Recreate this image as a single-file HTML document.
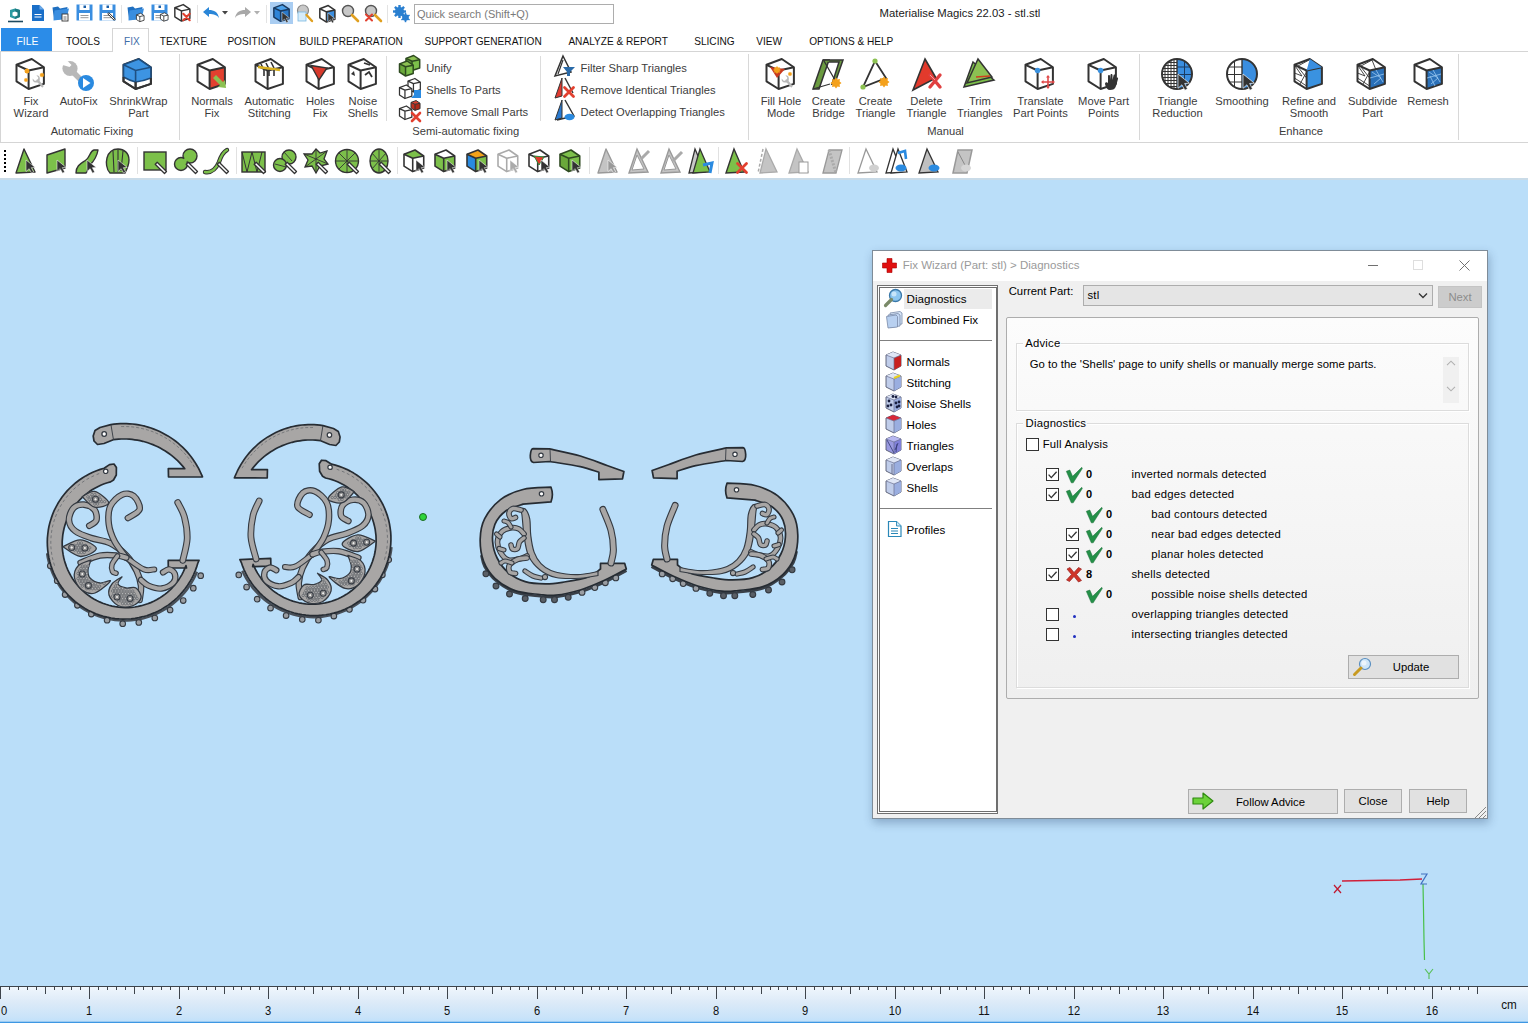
<!DOCTYPE html><html><head><meta charset="utf-8"><style>
html,body{margin:0;padding:0;}
body{width:1528px;height:1023px;position:relative;overflow:hidden;background:#fff;font-family:"Liberation Sans",sans-serif;}
.t{position:absolute;white-space:nowrap;}
.r{position:absolute;box-sizing:border-box;}
svg.r{overflow:visible;}
</style></head><body>
<div class="r" style="left:0px;top:179px;width:1528px;height:808px;background:#badef9;"></div>
<div class="r" style="left:0px;top:178px;width:1528px;height:2px;background:#c9dbe8;"></div>
<div class="r" style="left:0px;top:986px;width:1528px;height:37px;background:linear-gradient(#f1f7fd,#dceaf8 45%,#c9e3f9 85%,#bde0fb);"></div>
<div class="r" style="left:0px;top:986px;width:1528px;height:1px;background:#3e444c;"></div>
<div class="r" style="left:0px;top:1021px;width:1528px;height:1px;background:#9ccbf2;"></div>
<div class="r" style="left:0px;top:1022px;width:1528px;height:1px;background:#3d97e3;"></div>
<div class="t" style="top:6.28px;font-size:11.3px;line-height:15px;color:#1a1a1a;left:879.6px;">Materialise Magics 22.03 - stl.stl</div>
<div class="r" style="left:414px;top:4px;width:200px;height:20px;border:1px solid #adadad;background:#fff;"></div>
<div class="t" style="top:6.69px;font-size:11px;line-height:14px;color:#7a7a7a;left:417px;">Quick search (Shift+Q)</div>
<div class="r" style="left:121px;top:5px;width:1px;height:18px;background:#e3e3e3;"></div>
<div class="r" style="left:197px;top:5px;width:1px;height:18px;background:#e3e3e3;"></div>
<div class="r" style="left:266px;top:5px;width:1px;height:18px;background:#e3e3e3;"></div>
<div class="r" style="left:387px;top:5px;width:1px;height:18px;background:#e3e3e3;"></div>
<div class="r" style="left:270px;top:2px;width:23px;height:22px;background:#a9cdf2;"></div>
<div class="r" style="left:1px;top:28px;width:51px;height:23px;background:#2b8ce8;"></div>
<div class="t" style="top:34.83px;font-size:10.3px;line-height:13px;color:#fff;left:16.5px;">FILE</div>
<div class="t" style="top:34.90px;font-size:10.1px;line-height:13px;color:#111;left:65.9px;">TOOLS</div>
<div class="t" style="top:34.90px;font-size:10.1px;line-height:13px;color:#111;left:159.8px;">TEXTURE</div>
<div class="t" style="top:34.90px;font-size:10.1px;line-height:13px;color:#111;left:227.4px;">POSITION</div>
<div class="t" style="top:34.90px;font-size:10.1px;line-height:13px;color:#111;left:299.4px;">BUILD PREPARATION</div>
<div class="t" style="top:34.90px;font-size:10.1px;line-height:13px;color:#111;left:424.5px;">SUPPORT GENERATION</div>
<div class="t" style="top:34.90px;font-size:10.1px;line-height:13px;color:#111;left:568.4px;">ANALYZE & REPORT</div>
<div class="t" style="top:34.90px;font-size:10.1px;line-height:13px;color:#111;left:694.2px;">SLICING</div>
<div class="t" style="top:34.90px;font-size:10.1px;line-height:13px;color:#111;left:756.2px;">VIEW</div>
<div class="t" style="top:34.90px;font-size:10.1px;line-height:13px;color:#111;left:809.2px;">OPTIONS & HELP</div>
<div class="r" style="left:0px;top:51px;width:1528px;height:92px;border-top:1px solid #d5d5d5;border-bottom:1px solid #d5d5d5;background:#fff;"></div>
<div class="r" style="left:0px;top:51px;width:1px;height:92px;background:#d5d5d5;"></div>
<div class="r" style="left:112px;top:28px;width:37px;height:24px;border:1px solid #d5d5d5;border-bottom:none;background:#fff;"></div>
<div class="t" style="top:34.90px;font-size:10.1px;line-height:13px;color:#3f6ea8;left:124px;">FIX</div>
<div class="r" style="left:179px;top:54px;width:1px;height:86px;background:#d8d8d8;"></div>
<div class="r" style="left:748px;top:54px;width:1px;height:86px;background:#d8d8d8;"></div>
<div class="r" style="left:1139px;top:54px;width:1px;height:86px;background:#d8d8d8;"></div>
<div class="r" style="left:1458px;top:54px;width:1px;height:86px;background:#d8d8d8;"></div>
<div class="r" style="left:386px;top:56px;width:1px;height:65px;background:#dcdcdc;"></div>
<div class="r" style="left:540px;top:56px;width:1px;height:65px;background:#dcdcdc;"></div>
<div class="t" style="top:93.62px;font-size:11.2px;line-height:15px;color:#3c3c3c;left:-119px;width:300px;text-align:center;">Fix</div>
<div class="t" style="top:106.42px;font-size:11.2px;line-height:15px;color:#3c3c3c;left:-119px;width:300px;text-align:center;">Wizard</div>
<div class="t" style="top:93.62px;font-size:11.2px;line-height:15px;color:#3c3c3c;left:-71.4px;width:300px;text-align:center;">AutoFix</div>
<div class="t" style="top:93.62px;font-size:11.2px;line-height:15px;color:#3c3c3c;left:-11.599999999999994px;width:300px;text-align:center;">ShrinkWrap</div>
<div class="t" style="top:106.42px;font-size:11.2px;line-height:15px;color:#3c3c3c;left:-11.599999999999994px;width:300px;text-align:center;">Part</div>
<div class="t" style="top:93.62px;font-size:11.2px;line-height:15px;color:#3c3c3c;left:62px;width:300px;text-align:center;">Normals</div>
<div class="t" style="top:106.42px;font-size:11.2px;line-height:15px;color:#3c3c3c;left:62px;width:300px;text-align:center;">Fix</div>
<div class="t" style="top:93.62px;font-size:11.2px;line-height:15px;color:#3c3c3c;left:119.30000000000001px;width:300px;text-align:center;">Automatic</div>
<div class="t" style="top:106.42px;font-size:11.2px;line-height:15px;color:#3c3c3c;left:119.30000000000001px;width:300px;text-align:center;">Stitching</div>
<div class="t" style="top:93.62px;font-size:11.2px;line-height:15px;color:#3c3c3c;left:170.2px;width:300px;text-align:center;">Holes</div>
<div class="t" style="top:106.42px;font-size:11.2px;line-height:15px;color:#3c3c3c;left:170.2px;width:300px;text-align:center;">Fix</div>
<div class="t" style="top:93.62px;font-size:11.2px;line-height:15px;color:#3c3c3c;left:212.89999999999998px;width:300px;text-align:center;">Noise</div>
<div class="t" style="top:106.42px;font-size:11.2px;line-height:15px;color:#3c3c3c;left:212.89999999999998px;width:300px;text-align:center;">Shells</div>
<div class="t" style="top:93.62px;font-size:11.2px;line-height:15px;color:#3c3c3c;left:631px;width:300px;text-align:center;">Fill Hole</div>
<div class="t" style="top:106.42px;font-size:11.2px;line-height:15px;color:#3c3c3c;left:631px;width:300px;text-align:center;">Mode</div>
<div class="t" style="top:93.62px;font-size:11.2px;line-height:15px;color:#3c3c3c;left:678.5px;width:300px;text-align:center;">Create</div>
<div class="t" style="top:106.42px;font-size:11.2px;line-height:15px;color:#3c3c3c;left:678.5px;width:300px;text-align:center;">Bridge</div>
<div class="t" style="top:93.62px;font-size:11.2px;line-height:15px;color:#3c3c3c;left:725.5px;width:300px;text-align:center;">Create</div>
<div class="t" style="top:106.42px;font-size:11.2px;line-height:15px;color:#3c3c3c;left:725.5px;width:300px;text-align:center;">Triangle</div>
<div class="t" style="top:93.62px;font-size:11.2px;line-height:15px;color:#3c3c3c;left:776.5px;width:300px;text-align:center;">Delete</div>
<div class="t" style="top:106.42px;font-size:11.2px;line-height:15px;color:#3c3c3c;left:776.5px;width:300px;text-align:center;">Triangle</div>
<div class="t" style="top:93.62px;font-size:11.2px;line-height:15px;color:#3c3c3c;left:829.9px;width:300px;text-align:center;">Trim</div>
<div class="t" style="top:106.42px;font-size:11.2px;line-height:15px;color:#3c3c3c;left:829.9px;width:300px;text-align:center;">Triangles</div>
<div class="t" style="top:93.62px;font-size:11.2px;line-height:15px;color:#3c3c3c;left:890.4000000000001px;width:300px;text-align:center;">Translate</div>
<div class="t" style="top:106.42px;font-size:11.2px;line-height:15px;color:#3c3c3c;left:890.4000000000001px;width:300px;text-align:center;">Part Points</div>
<div class="t" style="top:93.62px;font-size:11.2px;line-height:15px;color:#3c3c3c;left:953.5999999999999px;width:300px;text-align:center;">Move Part</div>
<div class="t" style="top:106.42px;font-size:11.2px;line-height:15px;color:#3c3c3c;left:953.5999999999999px;width:300px;text-align:center;">Points</div>
<div class="t" style="top:93.62px;font-size:11.2px;line-height:15px;color:#3c3c3c;left:1027.5px;width:300px;text-align:center;">Triangle</div>
<div class="t" style="top:106.42px;font-size:11.2px;line-height:15px;color:#3c3c3c;left:1027.5px;width:300px;text-align:center;">Reduction</div>
<div class="t" style="top:93.62px;font-size:11.2px;line-height:15px;color:#3c3c3c;left:1092px;width:300px;text-align:center;">Smoothing</div>
<div class="t" style="top:93.62px;font-size:11.2px;line-height:15px;color:#3c3c3c;left:1159px;width:300px;text-align:center;">Refine and</div>
<div class="t" style="top:106.42px;font-size:11.2px;line-height:15px;color:#3c3c3c;left:1159px;width:300px;text-align:center;">Smooth</div>
<div class="t" style="top:93.62px;font-size:11.2px;line-height:15px;color:#3c3c3c;left:1222.6px;width:300px;text-align:center;">Subdivide</div>
<div class="t" style="top:106.42px;font-size:11.2px;line-height:15px;color:#3c3c3c;left:1222.6px;width:300px;text-align:center;">Part</div>
<div class="t" style="top:93.62px;font-size:11.2px;line-height:15px;color:#3c3c3c;left:1278px;width:300px;text-align:center;">Remesh</div>
<div class="t" style="top:123.62px;font-size:11.2px;line-height:15px;color:#3c3c3c;left:-58px;width:300px;text-align:center;">Automatic Fixing</div>
<div class="t" style="top:123.62px;font-size:11.2px;line-height:15px;color:#3c3c3c;left:315.7px;width:300px;text-align:center;">Semi-automatic fixing</div>
<div class="t" style="top:123.62px;font-size:11.2px;line-height:15px;color:#3c3c3c;left:795.5px;width:300px;text-align:center;">Manual</div>
<div class="t" style="top:123.62px;font-size:11.2px;line-height:15px;color:#3c3c3c;left:1151px;width:300px;text-align:center;">Enhance</div>
<div class="t" style="top:60.62px;font-size:11.2px;line-height:15px;color:#3c3c3c;left:426.2px;">Unify</div>
<div class="t" style="top:82.62px;font-size:11.2px;line-height:15px;color:#3c3c3c;left:426.2px;">Shells To Parts</div>
<div class="t" style="top:104.62px;font-size:11.2px;line-height:15px;color:#3c3c3c;left:426.2px;">Remove Small Parts</div>
<div class="t" style="top:60.62px;font-size:11.2px;line-height:15px;color:#3c3c3c;left:580.6px;">Filter Sharp Triangles</div>
<div class="t" style="top:82.62px;font-size:11.2px;line-height:15px;color:#3c3c3c;left:580.6px;">Remove Identical Triangles</div>
<div class="t" style="top:104.62px;font-size:11.2px;line-height:15px;color:#3c3c3c;left:580.6px;">Detect Overlapping Triangles</div>
<div class="r" style="left:4px;top:150px;width:2px;height:24px;background:repeating-linear-gradient(#000 0 2px,transparent 2px 4px);"></div>
<div class="r" style="left:137px;top:147px;width:1px;height:27px;background:#e1e1e1;"></div>
<div class="r" style="left:236px;top:147px;width:1px;height:27px;background:#e1e1e1;"></div>
<div class="r" style="left:397px;top:147px;width:1px;height:27px;background:#e1e1e1;"></div>
<div class="r" style="left:589px;top:147px;width:1px;height:27px;background:#e1e1e1;"></div>
<div class="r" style="left:718px;top:147px;width:1px;height:27px;background:#e1e1e1;"></div>
<div class="r" style="left:849px;top:147px;width:1px;height:27px;background:#e1e1e1;"></div>
<svg class="r" style="left:7px;top:8px" width="17" height="16" viewBox="0 0 17 16"><path d="M3 2L8 0.5L13 2L13 9L8 11L3 9Z" fill="#2b9aa0"/><path d="M8 0.5L13 2L13 9L8 11Z" fill="#1e7a80"/><path d="M5.5 4.5L8 3.5L10.5 4.5L10.5 7.5L8 8.5L5.5 7.5Z" fill="#fff"/><path d="M1 13.5L16 13.5" stroke="#1e4a60" stroke-width="1.6"/></svg>
<svg class="r" style="left:31px;top:4px" width="14" height="18" viewBox="0 0 14 18"><path d="M1 1H8.5L13 5.5V17H1Z" fill="#1a6fc8"/><path d="M8.5 1V5.5H13" fill="#6aa8e8"/><path d="M3.5 10.5H10.5M3.5 13H10.5" stroke="#fff" stroke-width="1.1"/></svg>
<svg class="r" style="left:52px;top:4px" width="18" height="18" viewBox="0 0 18 18"><path d="M0.5 3.5L6 2.5L8 4.5L15.5 3L14 14.5L2 16Z" fill="#1f6fc0"/><path d="M2.5 6.5L17 4.5L14.5 15L1.5 16.5Z" fill="#3a8ee0"/><rect x="10" y="10" width="6" height="7" fill="#fff" stroke="#333" stroke-width="0.9"/><path d="M11.5 13H14.5M11.5 15H14.5" stroke="#333" stroke-width="0.7"/></svg>
<svg class="r" style="left:76px;top:4px" width="17" height="17" viewBox="0 0 17 17"><path d="M0.5 0.5H16.5V16.5H0.5Z" fill="#3a8ee0"/><rect x="3.5" y="0.5" width="10" height="5.5" fill="#fff"/><rect x="7.5" y="1.5" width="2.5" height="2.5" fill="#1a5fa8"/><rect x="3" y="9" width="11" height="7.5" fill="#fff"/><path d="M4.5 11.5H12.5M4.5 13.7H12.5" stroke="#999" stroke-width="1"/></svg>
<svg class="r" style="left:99px;top:4px" width="17" height="17" viewBox="0 0 17 17"><path d="M0.5 0.5H16.5V16.5H0.5Z" fill="#3a8ee0"/><rect x="3.5" y="0.5" width="10" height="5.5" fill="#fff"/><rect x="7.5" y="1.5" width="2.5" height="2.5" fill="#1a5fa8"/><rect x="3" y="9" width="11" height="7.5" fill="#fff"/><path d="M4.5 11.5H12.5M4.5 13.7H12.5" stroke="#999" stroke-width="1"/><path d="M9 9L16 16" stroke="#333" stroke-width="2.2"/><path d="M9.5 9.5L15.5 15.5" stroke="#fff" stroke-width="1"/></svg>
<svg class="r" style="left:127px;top:4px" width="18" height="18" viewBox="0 0 18 18"><path d="M0.5 3.5L6 2.5L8 4.5L15.5 3L14 14.5L2 16Z" fill="#1f6fc0"/><path d="M2.5 6.5L17 4.5L14.5 15L1.5 16.5Z" fill="#3a8ee0"/><g transform="translate(9,9) scale(0.28)"><polygon points="16.8,1.0 28.9,9.3 13.6,12.5 1.5,6.8" fill="#fff"/><polygon points="1.5,6.8 13.6,12.5 13.6,31.0 1.5,23.3" fill="#fff"/><polygon points="13.6,12.5 28.9,9.3 28.9,25.9 13.6,31.0" fill="#fff"/><polygon points="16.8,1.0 28.9,9.3 28.9,25.9 13.6,31.0 1.5,23.3 1.5,6.8" fill="none" stroke="#333333" stroke-width="3" stroke-linejoin="round"/><polyline points="1.5,6.8 13.6,12.5 28.9,9.3" fill="none" stroke="#333333" stroke-width="3" stroke-linejoin="round"/><polyline points="13.6,12.5 13.6,31.0" fill="none" stroke="#333333" stroke-width="3"/></g></svg>
<svg class="r" style="left:151px;top:4px" width="17" height="17" viewBox="0 0 17 17"><path d="M0.5 0.5H16.5V16.5H0.5Z" fill="#3a8ee0"/><rect x="3.5" y="0.5" width="10" height="5.5" fill="#fff"/><rect x="7.5" y="1.5" width="2.5" height="2.5" fill="#1a5fa8"/><rect x="3" y="9" width="11" height="7.5" fill="#fff"/><path d="M4.5 11.5H12.5M4.5 13.7H12.5" stroke="#999" stroke-width="1"/><g transform="translate(9,8.5) scale(0.28)"><polygon points="16.8,1.0 28.9,9.3 13.6,12.5 1.5,6.8" fill="#fff"/><polygon points="1.5,6.8 13.6,12.5 13.6,31.0 1.5,23.3" fill="#fff"/><polygon points="13.6,12.5 28.9,9.3 28.9,25.9 13.6,31.0" fill="#fff"/><polygon points="16.8,1.0 28.9,9.3 28.9,25.9 13.6,31.0 1.5,23.3 1.5,6.8" fill="none" stroke="#333333" stroke-width="3" stroke-linejoin="round"/><polyline points="1.5,6.8 13.6,12.5 28.9,9.3" fill="none" stroke="#333333" stroke-width="3" stroke-linejoin="round"/><polyline points="13.6,12.5 13.6,31.0" fill="none" stroke="#333333" stroke-width="3"/></g></svg>
<svg class="r" style="left:174px;top:4px" width="18" height="18" viewBox="0 0 18 18"><g transform="scale(0.55)"><polygon points="16.8,1.0 28.9,9.3 13.6,12.5 1.5,6.8" fill="#fff"/><polygon points="1.5,6.8 13.6,12.5 13.6,31.0 1.5,23.3" fill="#fff"/><polygon points="13.6,12.5 28.9,9.3 28.9,25.9 13.6,31.0" fill="#fff"/><polygon points="16.8,1.0 28.9,9.3 28.9,25.9 13.6,31.0 1.5,23.3 1.5,6.8" fill="none" stroke="#333333" stroke-width="2.6" stroke-linejoin="round"/><polyline points="1.5,6.8 13.6,12.5 28.9,9.3" fill="none" stroke="#333333" stroke-width="2.6" stroke-linejoin="round"/><polyline points="13.6,12.5 13.6,31.0" fill="none" stroke="#333333" stroke-width="2.6"/></g><path d="M9.3 9.8L15.7 16.2M15.7 9.8L9.3 16.2" stroke="#e2402f" stroke-width="2.1" stroke-linecap="round"/></svg>
<svg class="r" style="left:202px;top:6px" width="18" height="14" viewBox="0 0 18 14"><path d="M1 6L7 1V4C12 4 16 6 17 12C15 9 12 8 7 8V11Z" fill="#2a86d8"/></svg>
<svg class="r" style="left:222px;top:11px" width="7" height="4" viewBox="0 0 7 4"><path d="M0 0H6L3 3.5Z" fill="#444"/></svg>
<svg class="r" style="left:234px;top:6px" width="18" height="14" viewBox="0 0 18 14"><path d="M17 6L11 1V4C6 4 2 6 1 12C3 9 6 8 11 8V11Z" fill="#a8a8a8"/></svg>
<svg class="r" style="left:254px;top:11px" width="7" height="4" viewBox="0 0 7 4"><path d="M0 0H6L3 3.5Z" fill="#b0b0b0"/></svg>
<svg class="r" style="left:273px;top:4px" width="19" height="19" viewBox="0 0 19 19"><g transform="scale(0.56)"><polygon points="16.8,1.0 28.9,9.3 13.6,12.5 1.5,6.8" fill="#4aa0ea"/><polygon points="1.5,6.8 13.6,12.5 13.6,31.0 1.5,23.3" fill="#2f85d8"/><polygon points="13.6,12.5 28.9,9.3 28.9,25.9 13.6,31.0" fill="#2a78c8"/><polygon points="16.8,1.0 28.9,9.3 28.9,25.9 13.6,31.0 1.5,23.3 1.5,6.8" fill="none" stroke="#1a3a60" stroke-width="2.6" stroke-linejoin="round"/><polyline points="1.5,6.8 13.6,12.5 28.9,9.3" fill="none" stroke="#1a3a60" stroke-width="2.6" stroke-linejoin="round"/><polyline points="13.6,12.5 13.6,31.0" fill="none" stroke="#1a3a60" stroke-width="2.6"/></g><path transform="translate(9,8) scale(0.85)" d="M0 0L0 11L3 8.3L5.3 12.5L7.3 11.4L5.1 7.3L8.8 7.1Z" fill="#333333" stroke="#fff" stroke-width="0.5"/></svg>
<svg class="r" style="left:296px;top:4px" width="18" height="20" viewBox="0 0 18 20"><circle cx="7" cy="6.5" r="5.5" fill="#c8c8c8" stroke="#888" stroke-width="1.2"/><rect x="2" y="8" width="8" height="9" fill="#d6ecfa" stroke="#7ab8e0" stroke-width="0.8"/><path d="M10.5 11L16 17" stroke="#e0a020" stroke-width="2.4" stroke-linecap="round"/></svg>
<svg class="r" style="left:319px;top:5px" width="18" height="18" viewBox="0 0 18 18"><g transform="scale(0.55)"><polygon points="16.8,1.0 28.9,9.3 13.6,12.5 1.5,6.8" fill="#fff"/><polygon points="1.5,6.8 13.6,12.5 13.6,31.0 1.5,23.3" fill="#fff"/><polygon points="13.6,12.5 28.9,9.3 28.9,25.9 13.6,31.0" fill="#3a8ee0"/><polygon points="16.8,1.0 28.9,9.3 28.9,25.9 13.6,31.0 1.5,23.3 1.5,6.8" fill="none" stroke="#333333" stroke-width="2.8" stroke-linejoin="round"/><polyline points="1.5,6.8 13.6,12.5 28.9,9.3" fill="none" stroke="#333333" stroke-width="2.8" stroke-linejoin="round"/><polyline points="13.6,12.5 13.6,31.0" fill="none" stroke="#333333" stroke-width="2.8"/></g><path transform="translate(9,8) scale(0.8)" d="M0 0L0 11L3 8.3L5.3 12.5L7.3 11.4L5.1 7.3L8.8 7.1Z" fill="#333333" stroke="#fff" stroke-width="0.5"/></svg>
<svg class="r" style="left:341px;top:4px" width="18" height="18" viewBox="0 0 18 18"><circle cx="7" cy="7" r="5.5" fill="#c8c8c8" stroke="#555" stroke-width="1.4"/><path d="M11 11L17 17" stroke="#e0a020" stroke-width="2.6" stroke-linecap="round"/></svg>
<svg class="r" style="left:364px;top:4px" width="18" height="18" viewBox="0 0 18 18"><circle cx="7" cy="7" r="5.5" fill="#c8c8c8" stroke="#555" stroke-width="1.4"/><path d="M11 11L17 17" stroke="#e0a020" stroke-width="2.6" stroke-linecap="round"/><path d="M2 10.5L8 16.5M8 10.5L2 16.5" stroke="#e2402f" stroke-width="2" stroke-linecap="round"/></svg>
<svg class="r" style="left:393px;top:5px" width="18" height="18" viewBox="0 0 18 18"><g fill="#2a7fd0"><circle cx="6.5" cy="6.5" r="4.6"/><circle cx="12.5" cy="12.5" r="3.3"/></g><circle cx="6.5" cy="6.5" r="1.8" fill="#fff"/><circle cx="12.5" cy="12.5" r="1.2" fill="#fff"/><rect x="5.3" y="0" width="2.4" height="13" fill="#2a7fd0" transform="rotate(0 6.5 6.5)"/><rect x="5.3" y="0" width="2.4" height="13" fill="#2a7fd0" transform="rotate(45 6.5 6.5)"/><rect x="5.3" y="0" width="2.4" height="13" fill="#2a7fd0" transform="rotate(90 6.5 6.5)"/><rect x="5.3" y="0" width="2.4" height="13" fill="#2a7fd0" transform="rotate(135 6.5 6.5)"/><rect x="11.7" y="7.8" width="1.6" height="9.4" fill="#2a7fd0" transform="rotate(0 12.5 12.5)"/><rect x="11.7" y="7.8" width="1.6" height="9.4" fill="#2a7fd0" transform="rotate(60 12.5 12.5)"/><rect x="11.7" y="7.8" width="1.6" height="9.4" fill="#2a7fd0" transform="rotate(120 12.5 12.5)"/></svg>
<svg class="r" style="left:15px;top:58px" width="34" height="34" viewBox="0 0 34 34"><polygon points="16.8,1.0 28.9,9.3 13.6,12.5 1.5,6.8" fill="#fff"/><polygon points="1.5,6.8 13.6,12.5 13.6,31.0 1.5,23.3" fill="#fff"/><polygon points="13.6,12.5 28.9,9.3 28.9,25.9 13.6,31.0" fill="#fff"/><polygon points="16.8,1.0 28.9,9.3 28.9,25.9 13.6,31.0 1.5,23.3 1.5,6.8" fill="none" stroke="#333333" stroke-width="2.0" stroke-linejoin="round"/><polyline points="1.5,6.8 13.6,12.5 28.9,9.3" fill="none" stroke="#333333" stroke-width="2.0" stroke-linejoin="round"/><polyline points="13.6,12.5 13.6,31.0" fill="none" stroke="#333333" stroke-width="2.0"/><polygon points="15.0,13.0 13.9,13.8 14.1,15.1 12.8,14.9 12.0,16.0 11.2,14.9 9.9,15.1 10.1,13.8 9.0,13.0 10.1,12.2 9.9,10.9 11.2,11.1 12.0,10.0 12.8,11.1 14.1,10.9 13.9,12.2" fill="#f4a11c"/><polygon points="29.5,17.0 28.6,17.7 28.8,18.8 27.7,18.6 27.0,19.5 26.3,18.6 25.2,18.8 25.4,17.7 24.5,17.0 25.4,16.3 25.2,15.2 26.3,15.4 27.0,14.5 27.7,15.4 28.8,15.2 28.6,16.3" fill="#f4a11c"/><polygon points="13.3,22.0 12.5,22.6 12.6,23.6 11.6,23.5 11.0,24.3 10.4,23.5 9.4,23.6 9.5,22.6 8.7,22.0 9.5,21.4 9.4,20.4 10.4,20.5 11.0,19.7 11.6,20.5 12.6,20.4 12.5,21.4" fill="#f4a11c"/><g transform="translate(23,23) rotate(-40) scale(0.6)"><path d="M-4 -9 A6 6 0 1 0 4 -9 L4 -4 L1.5 -2 L-1.5 -2 L-4 -4Z" fill="#b8b8b8"/><rect x="-2" y="-3" width="4" height="16" rx="1.5" fill="#b8b8b8"/></g></svg>
<svg class="r" style="left:60px;top:58px" width="34" height="34" viewBox="0 0 34 34"><path d="M11 12L21 22" stroke="#b8b8b8" stroke-width="5.5"/><circle cx="10" cy="10.5" r="7.6" fill="#b8b8b8"/><path d="M1 6.5L6 1.5L11.5 7L9.5 9Z" fill="#fff" transform="rotate(0)"/><circle cx="26" cy="25" r="8" fill="#2a8ae0"/><path d="M23 20L30.5 25L23 30Z" fill="#fff"/></svg>
<svg class="r" style="left:122px;top:58px" width="34" height="34" viewBox="0 0 34 34"><polygon points="16.8,1.0 28.9,9.3 13.6,12.5 1.5,6.8" fill="#fff"/><polygon points="1.5,6.8 13.6,12.5 13.6,31.0 1.5,23.3" fill="#fff"/><polygon points="13.6,12.5 28.9,9.3 28.9,25.9 13.6,31.0" fill="#fff"/><polygon points="16.8,1.0 28.9,9.3 28.9,25.9 13.6,31.0 1.5,23.3 1.5,6.8" fill="none" stroke="#333333" stroke-width="2.0" stroke-linejoin="round"/><polyline points="1.5,6.8 13.6,12.5 28.9,9.3" fill="none" stroke="#333333" stroke-width="2.0" stroke-linejoin="round"/><polyline points="13.6,12.5 13.6,31.0" fill="none" stroke="#333333" stroke-width="2.0"/><path d="M1.5 6.8L16.8 1L28.9 9.3L28.9 20C24 22 18 23.5 13.6 24C9 23 5 21 1.5 19Z" fill="#3d94e2" stroke="#1f4f80" stroke-width="1.6" stroke-linejoin="round"/><path d="M1.5 6.8L13.6 12.5L28.9 9.3M13.6 12.5V24" fill="none" stroke="#1f4f80" stroke-width="1.6"/><path d="M1.5 19V23.3L13.6 31L28.9 25.9V20" fill="none" stroke="#333" stroke-width="2"/><path d="M13.6 24V31" stroke="#333" stroke-width="2"/></svg>
<svg class="r" style="left:196px;top:58px" width="34" height="34" viewBox="0 0 34 34"><polygon points="16.8,1.0 28.9,9.3 13.6,12.5 1.5,6.8" fill="#fff"/><polygon points="1.5,6.8 13.6,12.5 13.6,31.0 1.5,23.3" fill="#fff"/><polygon points="13.6,12.5 28.9,9.3 28.9,25.9 13.6,31.0" fill="#e2402f"/><polygon points="16.8,1.0 28.9,9.3 28.9,25.9 13.6,31.0 1.5,23.3 1.5,6.8" fill="none" stroke="#333333" stroke-width="2.0" stroke-linejoin="round"/><polyline points="1.5,6.8 13.6,12.5 28.9,9.3" fill="none" stroke="#333333" stroke-width="2.0" stroke-linejoin="round"/><polyline points="13.6,12.5 13.6,31.0" fill="none" stroke="#333333" stroke-width="2.0"/><path d="M17 20L24 27L22 29L30 30L29 22L27 24L20 17Z" fill="#8cc152"/></svg>
<svg class="r" style="left:254px;top:58px" width="34" height="34" viewBox="0 0 34 34"><polygon points="16.8,1.0 28.9,9.3 13.6,12.5 1.5,6.8" fill="#fff"/><polygon points="1.5,6.8 13.6,12.5 13.6,31.0 1.5,23.3" fill="#fff"/><polygon points="13.6,12.5 28.9,9.3 28.9,25.9 13.6,31.0" fill="#fff"/><polygon points="16.8,1.0 28.9,9.3 28.9,25.9 13.6,31.0 1.5,23.3 1.5,6.8" fill="none" stroke="#333333" stroke-width="2.0" stroke-linejoin="round"/><polyline points="1.5,6.8 13.6,12.5 28.9,9.3" fill="none" stroke="#333333" stroke-width="2.0" stroke-linejoin="round"/><polyline points="13.6,12.5 13.6,31.0" fill="none" stroke="#333333" stroke-width="2.0"/><path d="M7 6L10 12M12 5L15 11M17 4L20 10" stroke="#333" stroke-width="1.6"/><path d="M4 9L26 12" stroke="#d8b020" stroke-width="2.5"/><path d="M10 12V18M15 12V18M20 12V18" stroke="#333" stroke-width="1.6"/></svg>
<svg class="r" style="left:305px;top:58px" width="34" height="34" viewBox="0 0 34 34"><polygon points="16.8,1.0 28.9,9.3 13.6,12.5 1.5,6.8" fill="#fff"/><polygon points="1.5,6.8 13.6,12.5 13.6,31.0 1.5,23.3" fill="#fff"/><polygon points="13.6,12.5 28.9,9.3 28.9,25.9 13.6,31.0" fill="#fff"/><polygon points="16.8,1.0 28.9,9.3 28.9,25.9 13.6,31.0 1.5,23.3 1.5,6.8" fill="none" stroke="#333333" stroke-width="2.0" stroke-linejoin="round"/><polyline points="1.5,6.8 13.6,12.5 28.9,9.3" fill="none" stroke="#333333" stroke-width="2.0" stroke-linejoin="round"/><polyline points="13.6,12.5 13.6,31.0" fill="none" stroke="#333333" stroke-width="2.0"/><path d="M6 7.5L22 10L14 22Z" fill="#d83a2c" stroke="#333" stroke-width="1.4"/></svg>
<svg class="r" style="left:347px;top:58px" width="34" height="34" viewBox="0 0 34 34"><polygon points="16.8,1.0 28.9,9.3 13.6,12.5 1.5,6.8" fill="#fff"/><polygon points="1.5,6.8 13.6,12.5 13.6,31.0 1.5,23.3" fill="#fff"/><polygon points="13.6,12.5 28.9,9.3 28.9,25.9 13.6,31.0" fill="#fff"/><polygon points="16.8,1.0 28.9,9.3 28.9,25.9 13.6,31.0 1.5,23.3 1.5,6.8" fill="none" stroke="#333333" stroke-width="2.0" stroke-linejoin="round"/><polyline points="1.5,6.8 13.6,12.5 28.9,9.3" fill="none" stroke="#333333" stroke-width="2.0" stroke-linejoin="round"/><polyline points="13.6,12.5 13.6,31.0" fill="none" stroke="#333333" stroke-width="2.0"/><path d="M17 5L23 7" stroke="#333" stroke-width="1.8"/><path d="M4 16L7 13L8 18Z" fill="#333"/><path d="M18 17L22 14L25 19" stroke="#333" stroke-width="1.8" fill="none"/></svg>
<svg class="r" style="left:765px;top:58px" width="34" height="34" viewBox="0 0 34 34"><polygon points="16.8,1.0 28.9,9.3 13.6,12.5 1.5,6.8" fill="#fff"/><polygon points="1.5,6.8 13.6,12.5 13.6,31.0 1.5,23.3" fill="#fff"/><polygon points="13.6,12.5 28.9,9.3 28.9,25.9 13.6,31.0" fill="#fff"/><polygon points="16.8,1.0 28.9,9.3 28.9,25.9 13.6,31.0 1.5,23.3 1.5,6.8" fill="none" stroke="#333333" stroke-width="2.0" stroke-linejoin="round"/><polyline points="1.5,6.8 13.6,12.5 28.9,9.3" fill="none" stroke="#333333" stroke-width="2.0" stroke-linejoin="round"/><polyline points="13.6,12.5 13.6,31.0" fill="none" stroke="#333333" stroke-width="2.0"/><path d="M5 9L20 11L12 20Z" fill="#c83a20"/><polygon points="16.0,12.0 14.6,13.1 14.8,14.8 13.1,14.6 12.0,16.0 10.9,14.6 9.2,14.8 9.4,13.1 8.0,12.0 9.4,10.9 9.2,9.2 10.9,9.4 12.0,8.0 13.1,9.4 14.8,9.2 14.6,10.9" fill="#f4a11c"/><polygon points="27.3,16.0 26.5,16.6 26.6,17.6 25.6,17.5 25.0,18.3 24.4,17.5 23.4,17.6 23.5,16.6 22.7,16.0 23.5,15.4 23.4,14.4 24.4,14.5 25.0,13.7 25.6,14.5 26.6,14.4 26.5,15.4" fill="#f4a11c"/><g transform="translate(22,23) rotate(-40) scale(0.6)"><path d="M-4 -9 A6 6 0 1 0 4 -9 L4 -4 L1.5 -2 L-1.5 -2 L-4 -4Z" fill="#b8b8b8"/><rect x="-2" y="-3" width="4" height="16" rx="1.5" fill="#b8b8b8"/></g></svg>
<svg class="r" style="left:811px;top:58px" width="34" height="34" viewBox="0 0 34 34"><path d="M2 31L12 2H18L8 31Z" fill="#6a9a40" stroke="#333" stroke-width="1.5"/><path d="M12 2H32L24 25L21 26L28 4H18" fill="#6a9a40" stroke="#333" stroke-width="1.5"/><path d="M13 3L24 22M2 31L19 26" stroke="#333" stroke-width="1.3" fill="none"/><polygon points="30.5,25.0 28.6,26.5 28.9,28.9 26.5,28.6 25.0,30.5 23.5,28.6 21.1,28.9 21.4,26.5 19.5,25.0 21.4,23.5 21.1,21.1 23.5,21.4 25.0,19.5 26.5,21.4 28.9,21.1 28.6,23.5" fill="#f4a11c"/></svg>
<svg class="r" style="left:860px;top:58px" width="34" height="34" viewBox="0 0 34 34"><path d="M15 3L26 20L3 29Z" fill="#fff" stroke="#333" stroke-width="1.8"/><circle cx="15" cy="3" r="2.6" fill="#8cc152"/><circle cx="3" cy="29" r="2.6" fill="#8cc152"/><polygon points="29.5,24.0 27.6,25.5 27.9,27.9 25.5,27.6 24.0,29.5 22.5,27.6 20.1,27.9 20.4,25.5 18.5,24.0 20.4,22.5 20.1,20.1 22.5,20.4 24.0,18.5 25.5,20.4 27.9,20.1 27.6,22.5" fill="#f4a11c"/></svg>
<svg class="r" style="left:911px;top:58px" width="34" height="34" viewBox="0 0 34 34"><path d="M14 1L25 20L2 32Z" fill="#e23a2c" stroke="#333" stroke-width="1.6"/><path d="M19 17L29 29M29 17L19 29" stroke="#e04040" stroke-width="3.4" stroke-linecap="round"/><path d="M19 17L24 22" stroke="#f0a0a0" stroke-width="1"/></svg>
<svg class="r" style="left:962px;top:58px" width="34" height="34" viewBox="0 0 34 34"><path d="M11 4L32 22L2 29Z" fill="#7cc04a" stroke="#333" stroke-width="1.5"/><path d="M16 1L30 19L5 25Z" fill="#8cc152" stroke="#333" stroke-width="1.5"/><path d="M14 19L28 18" stroke="#d04020" stroke-width="1.4"/></svg>
<svg class="r" style="left:1024px;top:58px" width="34" height="34" viewBox="0 0 34 34"><polygon points="16.8,1.0 28.9,9.3 13.6,12.5 1.5,6.8" fill="#fff"/><polygon points="1.5,6.8 13.6,12.5 13.6,31.0 1.5,23.3" fill="#fff"/><polygon points="13.6,12.5 28.9,9.3 28.9,25.9 13.6,31.0" fill="#fff"/><polygon points="16.8,1.0 28.9,9.3 28.9,25.9 13.6,31.0 1.5,23.3 1.5,6.8" fill="none" stroke="#333333" stroke-width="2.0" stroke-linejoin="round"/><polyline points="1.5,6.8 13.6,12.5 28.9,9.3" fill="none" stroke="#333333" stroke-width="2.0" stroke-linejoin="round"/><polyline points="13.6,12.5 13.6,31.0" fill="none" stroke="#333333" stroke-width="2.0"/><circle cx="13.6" cy="12.5" r="2.8" fill="#3a92e0"/><path d="M24 18V30M18 24H30" stroke="#e04848" stroke-width="1.6"/><path d="M24 17L22 19.5H26ZM24 31L22 28.5H26ZM17 24L19.5 22V26ZM31 24L28.5 22V26Z" fill="#e04848"/></svg>
<svg class="r" style="left:1087px;top:58px" width="34" height="34" viewBox="0 0 34 34"><polygon points="16.8,1.0 28.9,9.3 13.6,12.5 1.5,6.8" fill="#fff"/><polygon points="1.5,6.8 13.6,12.5 13.6,31.0 1.5,23.3" fill="#fff"/><polygon points="13.6,12.5 28.9,9.3 28.9,25.9 13.6,31.0" fill="#fff"/><polygon points="16.8,1.0 28.9,9.3 28.9,25.9 13.6,31.0 1.5,23.3 1.5,6.8" fill="none" stroke="#333333" stroke-width="2.0" stroke-linejoin="round"/><polyline points="1.5,6.8 13.6,12.5 28.9,9.3" fill="none" stroke="#333333" stroke-width="2.0" stroke-linejoin="round"/><polyline points="13.6,12.5 13.6,31.0" fill="none" stroke="#333333" stroke-width="2.0"/><circle cx="13.6" cy="12.5" r="2.8" fill="#3a92e0"/><path d="M18 26C18 24 20 24 21 25L21 18C21 16.5 23 16.5 23 18L23 22L23.5 17C23.5 15.5 25.5 15.5 25.5 17L25.5 22L26.5 17.5C26.5 16 28.5 16 28.5 17.5L28 23L29.5 20C30 19 31.5 19.5 31 21L29 28C28 31 26 32 23 32C20.5 32 19 30 18 26Z" fill="#333"/></svg>
<svg class="r" style="left:1161px;top:58px" width="34" height="34" viewBox="0 0 34 34"><defs><clipPath id="cc1"><circle cx="16" cy="16" r="15"/></clipPath></defs><g clip-path="url(#cc1)"><rect x="0" y="0" width="32" height="32" fill="#fff"/><rect x="16" y="0" width="16" height="32" fill="#3a8ee0"/><path d="M1 0V32" stroke="#333" stroke-width="1"/><path d="M4 0V32" stroke="#333" stroke-width="1"/><path d="M7 0V32" stroke="#333" stroke-width="1"/><path d="M10 0V32" stroke="#333" stroke-width="1"/><path d="M13 0V32" stroke="#333" stroke-width="1"/><path d="M0 1.5H16" stroke="#333" stroke-width="1"/><path d="M0 4.5H16" stroke="#333" stroke-width="1"/><path d="M0 7.5H16" stroke="#333" stroke-width="1"/><path d="M0 10.5H16" stroke="#333" stroke-width="1"/><path d="M0 13.5H16" stroke="#333" stroke-width="1"/><path d="M0 16.5H16" stroke="#333" stroke-width="1"/><path d="M0 19.5H16" stroke="#333" stroke-width="1"/><path d="M0 22.5H16" stroke="#333" stroke-width="1"/><path d="M0 25.5H16" stroke="#333" stroke-width="1"/><path d="M0 28.5H16" stroke="#333" stroke-width="1"/><path d="M0 31.5H16" stroke="#333" stroke-width="1"/><path d="M23.5 0V32M16 9H32M16 16.5H32" stroke="#1a3a60" stroke-width="1"/></g><circle cx="16" cy="16" r="15" fill="none" stroke="#333" stroke-width="2"/><path d="M16 1V31" stroke="#333" stroke-width="1.4"/><path transform="translate(17,16) scale(1.3)" d="M0 0L0 11L3 8.3L5.3 12.5L7.3 11.4L5.1 7.3L8.8 7.1Z" fill="#333333" stroke="#fff" stroke-width="0.5"/></svg>
<svg class="r" style="left:1226px;top:58px" width="34" height="34" viewBox="0 0 34 34"><defs><clipPath id="cc0"><circle cx="16" cy="16" r="15"/></clipPath></defs><g clip-path="url(#cc0)"><rect x="0" y="0" width="32" height="32" fill="#fff"/><rect x="16" y="0" width="16" height="32" fill="#3a8ee0"/><path d="M1 0V32" stroke="#333" stroke-width="1"/><path d="M8.5 0V32" stroke="#333" stroke-width="1"/><path d="M0 1.5H16" stroke="#333" stroke-width="1"/><path d="M0 9.0H16" stroke="#333" stroke-width="1"/><path d="M0 16.5H16" stroke="#333" stroke-width="1"/><path d="M0 24.0H16" stroke="#333" stroke-width="1"/><path d="M0 31.5H16" stroke="#333" stroke-width="1"/><path d="M16 16H32" stroke="#fff" stroke-width="0"/></g><circle cx="16" cy="16" r="15" fill="none" stroke="#333" stroke-width="2"/><path d="M16 1V31" stroke="#333" stroke-width="1.4"/><path transform="translate(17,16) scale(1.3)" d="M0 0L0 11L3 8.3L5.3 12.5L7.3 11.4L5.1 7.3L8.8 7.1Z" fill="#333333" stroke="#fff" stroke-width="0.5"/></svg>
<svg class="r" style="left:1293px;top:58px" width="34" height="34" viewBox="0 0 34 34"><polygon points="16.8,1.0 28.9,9.3 13.6,12.5 1.5,6.8" fill="#fff"/><polygon points="1.5,6.8 13.6,12.5 13.6,31.0 1.5,23.3" fill="#fff"/><polygon points="13.6,12.5 28.9,9.3 28.9,25.9 13.6,31.0" fill="#3a92e0"/><polygon points="16.8,1.0 28.9,9.3 28.9,25.9 13.6,31.0 1.5,23.3 1.5,6.8" fill="none" stroke="#333333" stroke-width="2.0" stroke-linejoin="round"/><polyline points="1.5,6.8 13.6,12.5 28.9,9.3" fill="none" stroke="#333333" stroke-width="2.0" stroke-linejoin="round"/><polyline points="13.6,12.5 13.6,31.0" fill="none" stroke="#333333" stroke-width="2.0"/><path d="M16.8 1L28.9 9.3L13.6 12.5Z" fill="#3a8ee0"/><path d="M1.5 7L9 18L1.5 15M5 9L13.6 20M1.5 20L13.6 28M7 26L13.6 14M5 8L16 2" stroke="#333" stroke-width="0.9" fill="none"/></svg>
<svg class="r" style="left:1356px;top:58px" width="34" height="34" viewBox="0 0 34 34"><polygon points="16.8,1.0 28.9,9.3 13.6,12.5 1.5,6.8" fill="#fff"/><polygon points="1.5,6.8 13.6,12.5 13.6,31.0 1.5,23.3" fill="#fff"/><polygon points="13.6,12.5 28.9,9.3 28.9,25.9 13.6,31.0" fill="#2a70b8"/><polygon points="16.8,1.0 28.9,9.3 28.9,25.9 13.6,31.0 1.5,23.3 1.5,6.8" fill="none" stroke="#333333" stroke-width="2.0" stroke-linejoin="round"/><polyline points="1.5,6.8 13.6,12.5 28.9,9.3" fill="none" stroke="#333333" stroke-width="2.0" stroke-linejoin="round"/><polyline points="13.6,12.5 13.6,31.0" fill="none" stroke="#333333" stroke-width="2.0"/><path d="M1.5 7L9 18L1.5 15M5 9L13.6 20M1.5 20L13.6 28M7 26L13.6 14M5 8L16 2M16 2L20 12" stroke="#333" stroke-width="0.9" fill="none"/><path d="M16 14L25 20L18 26M20 12L27 24M14 20L28 16" stroke="#9ac8f0" stroke-width="0.8" fill="none"/></svg>
<svg class="r" style="left:1413px;top:58px" width="34" height="34" viewBox="0 0 34 34"><polygon points="16.8,1.0 28.9,9.3 13.6,12.5 1.5,6.8" fill="#fff"/><polygon points="1.5,6.8 13.6,12.5 13.6,31.0 1.5,23.3" fill="#fff"/><polygon points="13.6,12.5 28.9,9.3 28.9,25.9 13.6,31.0" fill="#2a70b8"/><polygon points="16.8,1.0 28.9,9.3 28.9,25.9 13.6,31.0 1.5,23.3 1.5,6.8" fill="none" stroke="#333333" stroke-width="2.0" stroke-linejoin="round"/><polyline points="1.5,6.8 13.6,12.5 28.9,9.3" fill="none" stroke="#333333" stroke-width="2.0" stroke-linejoin="round"/><polyline points="13.6,12.5 13.6,31.0" fill="none" stroke="#333333" stroke-width="2.0"/><path d="M16 14L25 20L18 26M20 12L27 24M14 20L28 16M17 18L22 28" stroke="#9ac8f0" stroke-width="0.8" fill="none"/></svg>
<svg class="r" style="left:399px;top:55px" width="24" height="22" viewBox="0 0 24 22"><g transform="translate(7,0.5) scale(0.5)"><polygon points="15.3,0.0 27.4,8.3 12.1,11.5 0.0,5.8" fill="#8cc152"/><polygon points="0.0,5.8 12.1,11.5 12.1,30.0 0.0,22.3" fill="#6aa83a"/><polygon points="12.1,11.5 27.4,8.3 27.4,24.9 12.1,30.0" fill="#7cc04a"/><polygon points="15.3,0.0 27.4,8.3 27.4,24.9 12.1,30.0 0.0,22.3 0.0,5.8" fill="none" stroke="#2e4a20" stroke-width="3" stroke-linejoin="round"/><polyline points="0.0,5.8 12.1,11.5 27.4,8.3" fill="none" stroke="#2e4a20" stroke-width="3" stroke-linejoin="round"/><polyline points="12.1,11.5 12.1,30.0" fill="none" stroke="#2e4a20" stroke-width="3"/></g><g transform="translate(0.5,6) scale(0.5)"><polygon points="15.3,0.0 27.4,8.3 12.1,11.5 0.0,5.8" fill="#8cc152"/><polygon points="0.0,5.8 12.1,11.5 12.1,30.0 0.0,22.3" fill="#6aa83a"/><polygon points="12.1,11.5 27.4,8.3 27.4,24.9 12.1,30.0" fill="#7cc04a"/><polygon points="15.3,0.0 27.4,8.3 27.4,24.9 12.1,30.0 0.0,22.3 0.0,5.8" fill="none" stroke="#2e4a20" stroke-width="3" stroke-linejoin="round"/><polyline points="0.0,5.8 12.1,11.5 27.4,8.3" fill="none" stroke="#2e4a20" stroke-width="3" stroke-linejoin="round"/><polyline points="12.1,11.5 12.1,30.0" fill="none" stroke="#2e4a20" stroke-width="3"/></g></svg>
<svg class="r" style="left:399px;top:78px" width="24" height="22" viewBox="0 0 24 22"><g transform="translate(9,0.5) scale(0.45)"><polygon points="15.3,0.0 27.4,8.3 12.1,11.5 0.0,5.8" fill="#fff"/><polygon points="0.0,5.8 12.1,11.5 12.1,30.0 0.0,22.3" fill="#fff"/><polygon points="12.1,11.5 27.4,8.3 27.4,24.9 12.1,30.0" fill="#fff"/><polygon points="15.3,0.0 27.4,8.3 27.4,24.9 12.1,30.0 0.0,22.3 0.0,5.8" fill="none" stroke="#333333" stroke-width="2.8" stroke-linejoin="round"/><polyline points="0.0,5.8 12.1,11.5 27.4,8.3" fill="none" stroke="#333333" stroke-width="2.8" stroke-linejoin="round"/><polyline points="12.1,11.5 12.1,30.0" fill="none" stroke="#333333" stroke-width="2.8"/></g><g transform="translate(0.5,7) scale(0.45)"><polygon points="15.3,0.0 27.4,8.3 12.1,11.5 0.0,5.8" fill="#fff"/><polygon points="0.0,5.8 12.1,11.5 12.1,30.0 0.0,22.3" fill="#fff"/><polygon points="12.1,11.5 27.4,8.3 27.4,24.9 12.1,30.0" fill="#fff"/><polygon points="15.3,0.0 27.4,8.3 27.4,24.9 12.1,30.0 0.0,22.3 0.0,5.8" fill="none" stroke="#333333" stroke-width="2.8" stroke-linejoin="round"/><polyline points="0.0,5.8 12.1,11.5 27.4,8.3" fill="none" stroke="#333333" stroke-width="2.8" stroke-linejoin="round"/><polyline points="12.1,11.5 12.1,30.0" fill="none" stroke="#333333" stroke-width="2.8"/></g><path d="M15 12H22V20H12L15 17Z" fill="#2a8ae0"/></svg>
<svg class="r" style="left:399px;top:100px" width="24" height="22" viewBox="0 0 24 22"><g transform="translate(0.5,6) scale(0.45)"><polygon points="15.3,0.0 27.4,8.3 12.1,11.5 0.0,5.8" fill="#fff"/><polygon points="0.0,5.8 12.1,11.5 12.1,30.0 0.0,22.3" fill="#fff"/><polygon points="12.1,11.5 27.4,8.3 27.4,24.9 12.1,30.0" fill="#fff"/><polygon points="15.3,0.0 27.4,8.3 27.4,24.9 12.1,30.0 0.0,22.3 0.0,5.8" fill="none" stroke="#333333" stroke-width="2.8" stroke-linejoin="round"/><polyline points="0.0,5.8 12.1,11.5 27.4,8.3" fill="none" stroke="#333333" stroke-width="2.8" stroke-linejoin="round"/><polyline points="12.1,11.5 12.1,30.0" fill="none" stroke="#333333" stroke-width="2.8"/></g><g transform="translate(12,0.5) scale(0.33)"><polygon points="15.3,0.0 27.4,8.3 12.1,11.5 0.0,5.8" fill="#d84030"/><polygon points="0.0,5.8 12.1,11.5 12.1,30.0 0.0,22.3" fill="#c03020"/><polygon points="12.1,11.5 27.4,8.3 27.4,24.9 12.1,30.0" fill="#b02818"/><polygon points="15.3,0.0 27.4,8.3 27.4,24.9 12.1,30.0 0.0,22.3 0.0,5.8" fill="none" stroke="#333333" stroke-width="3" stroke-linejoin="round"/><polyline points="0.0,5.8 12.1,11.5 27.4,8.3" fill="none" stroke="#333333" stroke-width="3" stroke-linejoin="round"/><polyline points="12.1,11.5 12.1,30.0" fill="none" stroke="#333333" stroke-width="3"/></g><path d="M13 13L21 21M21 13L13 21" stroke="#e2402f" stroke-width="2.6" stroke-linecap="round"/></svg>
<svg class="r" style="left:553px;top:55px" width="24" height="22" viewBox="0 0 24 22"><path d="M10 1L2 21L18 17Z" fill="none" stroke="#333" stroke-width="1.5"/><path d="M10 5L5 19" stroke="#333" stroke-width="1.2"/><path d="M10 12H22L17 17V21H14V17Z" fill="#2a6aa8"/></svg>
<svg class="r" style="left:553px;top:77px" width="24" height="22" viewBox="0 0 24 22"><path d="M9 1L2 21L9 19Z" fill="#e03a30" stroke="#333" stroke-width="1"/><path d="M12 1L20 16" stroke="#333" stroke-width="1.4"/><path d="M11.5 10.5L20.5 19.5M20.5 10.5L11.5 19.5" stroke="#e2402f" stroke-width="2.8" stroke-linecap="round"/></svg>
<svg class="r" style="left:553px;top:99px" width="24" height="22" viewBox="0 0 24 22"><path d="M9 1L2 21L9 19Z" fill="#2a7ad0" stroke="#333" stroke-width="1"/><path d="M12 1L21 17L4 21" fill="none" stroke="#333" stroke-width="1.4"/><ellipse cx="16.5" cy="18" rx="5" ry="3.2" fill="#2a8ae0"/></svg>
<svg class="r" style="left:14px;top:147px" width="26" height="28" viewBox="0 0 26 28"><path d="M10 2L21 25L2 26Z" fill="#7cc04a" stroke="#333" stroke-width="1.4" stroke-linejoin="round"/><path transform="translate(12,13) scale(1.05)" d="M0 0L0 11L3 8.3L5.3 12.5L7.3 11.4L5.1 7.3L8.8 7.1Z" fill="#333333" stroke="#fff" stroke-width="0.5"/></svg>
<svg class="r" style="left:45px;top:147px" width="26" height="28" viewBox="0 0 26 28"><path d="M2 8L20 2V21L2 26Z" fill="#7cc04a" stroke="#333" stroke-width="1.4" stroke-linejoin="round"/><path transform="translate(12,13) scale(1.05)" d="M0 0L0 11L3 8.3L5.3 12.5L7.3 11.4L5.1 7.3L8.8 7.1Z" fill="#333333" stroke="#fff" stroke-width="0.5"/></svg>
<svg class="r" style="left:74px;top:147px" width="26" height="28" viewBox="0 0 26 28"><path d="M2 26C2 18 8 16 12 13C16 10 16 4 20 3H24C23 9 20 14 16 18C13 21 14 24 12 26Z" fill="#7cc04a" stroke="#333" stroke-width="1.4" stroke-linejoin="round"/><path transform="translate(13,13) scale(1.05)" d="M0 0L0 11L3 8.3L5.3 12.5L7.3 11.4L5.1 7.3L8.8 7.1Z" fill="#333333" stroke="#fff" stroke-width="0.5"/></svg>
<svg class="r" style="left:105px;top:147px" width="26" height="28" viewBox="0 0 26 28"><path d="M5 26C1 22 1 15 2 11C4 4 9 2 13 2C19 2 24 6 24 13C24 18 22 22 20 26Z" fill="#7cc04a" stroke="#333" stroke-width="1.4"/><path d="M8 4L9 25M13 2V25M18 4L16 24" stroke="#333" stroke-width="1.1"/><path transform="translate(13,13) scale(1.05)" d="M0 0L0 11L3 8.3L5.3 12.5L7.3 11.4L5.1 7.3L8.8 7.1Z" fill="#333333" stroke="#fff" stroke-width="0.5"/></svg>
<svg class="r" style="left:142px;top:147px" width="26" height="28" viewBox="0 0 26 28"><rect x="2" y="5" width="22" height="18" fill="#7cc04a" stroke="#333" stroke-width="1.4"/><g transform="translate(14,15) scale(1.0)"><path d="M1.2 0.2L10.5 9.5L8.5 11.5L-0.8 2.2Z" fill="#fff" stroke="#333333" stroke-width="1.3" stroke-linejoin="round"/></g></svg>
<svg class="r" style="left:173px;top:147px" width="26" height="28" viewBox="0 0 26 28"><circle cx="17" cy="9" r="7" fill="#7cc04a" stroke="#333" stroke-width="1.4"/><circle cx="8" cy="17" r="6.5" fill="#7cc04a" stroke="#333" stroke-width="1.4"/><path d="M11 12L14 14" stroke="#7cc04a" stroke-width="5"/><g transform="translate(14,15) scale(1.0)"><path d="M1.2 0.2L10.5 9.5L8.5 11.5L-0.8 2.2Z" fill="#fff" stroke="#333333" stroke-width="1.3" stroke-linejoin="round"/></g></svg>
<svg class="r" style="left:204px;top:147px" width="26" height="28" viewBox="0 0 26 28"><path d="M1 25C7 26 12 22 15 15C17 9 19 5 23 3" fill="none" stroke="#333" stroke-width="4.4" stroke-linecap="round"/><path d="M1 25C7 26 12 22 15 15C17 9 19 5 23 3" fill="none" stroke="#7cc04a" stroke-width="2.4" stroke-linecap="round"/><g transform="translate(14,15) scale(1.0)"><path d="M1.2 0.2L10.5 9.5L8.5 11.5L-0.8 2.2Z" fill="#fff" stroke="#333333" stroke-width="1.3" stroke-linejoin="round"/></g></svg>
<svg class="r" style="left:241px;top:147px" width="26" height="28" viewBox="0 0 26 28"><rect x="1" y="5" width="23" height="20" fill="#7cc04a" stroke="#333" stroke-width="1.4"/><path d="M1 5L6 25L11 5L16 25L21 5" fill="none" stroke="#333" stroke-width="1"/><g transform="translate(14,15) scale(1.0)"><path d="M1.2 0.2L10.5 9.5L8.5 11.5L-0.8 2.2Z" fill="#fff" stroke="#333333" stroke-width="1.3" stroke-linejoin="round"/></g></svg>
<svg class="r" style="left:272px;top:147px" width="26" height="28" viewBox="0 0 26 28"><circle cx="17" cy="10" r="7" fill="#7cc04a" stroke="#333" stroke-width="1.4"/><circle cx="8" cy="18" r="6.5" fill="#7cc04a" stroke="#333" stroke-width="1.4"/><path d="M3 17L14 20M12 5L20 14" stroke="#333" stroke-width="0.9"/><g transform="translate(14,15) scale(1.0)"><path d="M1.2 0.2L10.5 9.5L8.5 11.5L-0.8 2.2Z" fill="#fff" stroke="#333333" stroke-width="1.3" stroke-linejoin="round"/></g></svg>
<svg class="r" style="left:303px;top:147px" width="26" height="28" viewBox="0 0 26 28"><path d="M13 2L17 6L24 4L21 12L25 17L17 19L13 26L9 19L2 20L5 13L1 7L9 7Z" fill="#7cc04a" stroke="#333" stroke-width="1.3"/><path d="M13 2L13 26M1 7L25 17M2 20L24 4" stroke="#333" stroke-width="0.9"/><g transform="translate(14,15) scale(1.0)"><path d="M1.2 0.2L10.5 9.5L8.5 11.5L-0.8 2.2Z" fill="#fff" stroke="#333333" stroke-width="1.3" stroke-linejoin="round"/></g></svg>
<svg class="r" style="left:334px;top:147px" width="26" height="28" viewBox="0 0 26 28"><circle cx="13" cy="14" r="11.5" fill="#7cc04a" stroke="#333" stroke-width="1.4"/><path d="M13 2.5V25.5M1.5 14H24.5M5 6L21 22M21 6L5 22" stroke="#333" stroke-width="0.9"/><g transform="translate(14,15) scale(1.0)"><path d="M1.2 0.2L10.5 9.5L8.5 11.5L-0.8 2.2Z" fill="#fff" stroke="#333333" stroke-width="1.3" stroke-linejoin="round"/></g></svg>
<svg class="r" style="left:368px;top:147px" width="26" height="28" viewBox="0 0 26 28"><ellipse cx="11" cy="14" rx="9" ry="12" fill="#7cc04a" stroke="#333" stroke-width="1.4"/><path d="M11 2V26M2 14H20M4 6L18 22M18 6L4 22" stroke="#333" stroke-width="0.9"/><g transform="translate(12,15) scale(1.0)"><path d="M1.2 0.2L10.5 9.5L8.5 11.5L-0.8 2.2Z" fill="#fff" stroke="#333333" stroke-width="1.3" stroke-linejoin="round"/></g></svg>
<svg class="r" style="left:402px;top:147px" width="26" height="28" viewBox="0 0 26 28"><g transform="translate(2,3) scale(0.72)"><polygon points="15.3,0.0 27.4,8.3 12.1,11.5 0.0,5.8" fill="#7cc04a"/><polygon points="0.0,5.8 12.1,11.5 12.1,30.0 0.0,22.3" fill="#fff"/><polygon points="12.1,11.5 27.4,8.3 27.4,24.9 12.1,30.0" fill="#fff"/><polygon points="15.3,0.0 27.4,8.3 27.4,24.9 12.1,30.0 0.0,22.3 0.0,5.8" fill="none" stroke="#333" stroke-width="2.2" stroke-linejoin="round"/><polyline points="0.0,5.8 12.1,11.5 27.4,8.3" fill="none" stroke="#333" stroke-width="2.2" stroke-linejoin="round"/><polyline points="12.1,11.5 12.1,30.0" fill="none" stroke="#333" stroke-width="2.2"/></g><path transform="translate(14,13) scale(1.05)" d="M0 0L0 11L3 8.3L5.3 12.5L7.3 11.4L5.1 7.3L8.8 7.1Z" fill="#333333" stroke="#fff" stroke-width="0.5"/></svg>
<svg class="r" style="left:433px;top:147px" width="26" height="28" viewBox="0 0 26 28"><g transform="translate(2,3) scale(0.72)"><polygon points="15.3,0.0 27.4,8.3 12.1,11.5 0.0,5.8" fill="#fff"/><polygon points="0.0,5.8 12.1,11.5 12.1,30.0 0.0,22.3" fill="#7cc04a"/><polygon points="12.1,11.5 27.4,8.3 27.4,24.9 12.1,30.0" fill="#7cc04a"/><polygon points="15.3,0.0 27.4,8.3 27.4,24.9 12.1,30.0 0.0,22.3 0.0,5.8" fill="none" stroke="#333" stroke-width="2.2" stroke-linejoin="round"/><polyline points="0.0,5.8 12.1,11.5 27.4,8.3" fill="none" stroke="#333" stroke-width="2.2" stroke-linejoin="round"/><polyline points="12.1,11.5 12.1,30.0" fill="none" stroke="#333" stroke-width="2.2"/></g><path transform="translate(14,13) scale(1.05)" d="M0 0L0 11L3 8.3L5.3 12.5L7.3 11.4L5.1 7.3L8.8 7.1Z" fill="#333333" stroke="#fff" stroke-width="0.5"/></svg>
<svg class="r" style="left:465px;top:147px" width="26" height="28" viewBox="0 0 26 28"><g transform="translate(2,3) scale(0.72)"><polygon points="15.3,0.0 27.4,8.3 12.1,11.5 0.0,5.8" fill="#f2a21a"/><polygon points="0.0,5.8 12.1,11.5 12.1,30.0 0.0,22.3" fill="#2a8ae0"/><polygon points="12.1,11.5 27.4,8.3 27.4,24.9 12.1,30.0" fill="#7cc04a"/><polygon points="15.3,0.0 27.4,8.3 27.4,24.9 12.1,30.0 0.0,22.3 0.0,5.8" fill="none" stroke="#333" stroke-width="2.2" stroke-linejoin="round"/><polyline points="0.0,5.8 12.1,11.5 27.4,8.3" fill="none" stroke="#333" stroke-width="2.2" stroke-linejoin="round"/><polyline points="12.1,11.5 12.1,30.0" fill="none" stroke="#333" stroke-width="2.2"/></g><path transform="translate(14,13) scale(1.05)" d="M0 0L0 11L3 8.3L5.3 12.5L7.3 11.4L5.1 7.3L8.8 7.1Z" fill="#333333" stroke="#fff" stroke-width="0.5"/></svg>
<svg class="r" style="left:496px;top:147px" width="26" height="28" viewBox="0 0 26 28"><g transform="translate(2,3) scale(0.72)"><polygon points="15.3,0.0 27.4,8.3 12.1,11.5 0.0,5.8" fill="#fff"/><polygon points="0.0,5.8 12.1,11.5 12.1,30.0 0.0,22.3" fill="#fff"/><polygon points="12.1,11.5 27.4,8.3 27.4,24.9 12.1,30.0" fill="#fff"/><polygon points="15.3,0.0 27.4,8.3 27.4,24.9 12.1,30.0 0.0,22.3 0.0,5.8" fill="none" stroke="#aaa" stroke-width="2.2" stroke-linejoin="round"/><polyline points="0.0,5.8 12.1,11.5 27.4,8.3" fill="none" stroke="#aaa" stroke-width="2.2" stroke-linejoin="round"/><polyline points="12.1,11.5 12.1,30.0" fill="none" stroke="#aaa" stroke-width="2.2"/></g><path transform="translate(14,13) scale(1.05)" d="M0 0L0 11L3 8.3L5.3 12.5L7.3 11.4L5.1 7.3L8.8 7.1Z" fill="#aaa" stroke="#fff" stroke-width="0.5"/></svg>
<svg class="r" style="left:527px;top:147px" width="26" height="28" viewBox="0 0 26 28"><g transform="translate(2,3) scale(0.72)"><polygon points="15.3,0.0 27.4,8.3 12.1,11.5 0.0,5.8" fill="#fff"/><polygon points="0.0,5.8 12.1,11.5 12.1,30.0 0.0,22.3" fill="#fff"/><polygon points="12.1,11.5 27.4,8.3 27.4,24.9 12.1,30.0" fill="#fff"/><polygon points="15.3,0.0 27.4,8.3 27.4,24.9 12.1,30.0 0.0,22.3 0.0,5.8" fill="none" stroke="#333" stroke-width="2.2" stroke-linejoin="round"/><polyline points="0.0,5.8 12.1,11.5 27.4,8.3" fill="none" stroke="#333" stroke-width="2.2" stroke-linejoin="round"/><polyline points="12.1,11.5 12.1,30.0" fill="none" stroke="#333" stroke-width="2.2"/></g><path d="M7 9L17 10L12 18Z" fill="#e03a2c" stroke="#2a8a3a" stroke-width="1"/><path transform="translate(14,13) scale(1.05)" d="M0 0L0 11L3 8.3L5.3 12.5L7.3 11.4L5.1 7.3L8.8 7.1Z" fill="#333333" stroke="#fff" stroke-width="0.5"/></svg>
<svg class="r" style="left:558px;top:147px" width="26" height="28" viewBox="0 0 26 28"><g transform="translate(2,3) scale(0.72)"><polygon points="15.3,0.0 27.4,8.3 12.1,11.5 0.0,5.8" fill="#7cc04a"/><polygon points="0.0,5.8 12.1,11.5 12.1,30.0 0.0,22.3" fill="#6aa83a"/><polygon points="12.1,11.5 27.4,8.3 27.4,24.9 12.1,30.0" fill="#7cc04a"/><polygon points="15.3,0.0 27.4,8.3 27.4,24.9 12.1,30.0 0.0,22.3 0.0,5.8" fill="none" stroke="#2e4a20" stroke-width="2.2" stroke-linejoin="round"/><polyline points="0.0,5.8 12.1,11.5 27.4,8.3" fill="none" stroke="#2e4a20" stroke-width="2.2" stroke-linejoin="round"/><polyline points="12.1,11.5 12.1,30.0" fill="none" stroke="#2e4a20" stroke-width="2.2"/></g><path transform="translate(14,13) scale(1.05)" d="M0 0L0 11L3 8.3L5.3 12.5L7.3 11.4L5.1 7.3L8.8 7.1Z" fill="#333333" stroke="#fff" stroke-width="0.5"/></svg>
<svg class="r" style="left:596px;top:147px" width="26" height="28" viewBox="0 0 26 28"><path d="M10 2L21 25L2 26Z" fill="#c4c4c4" stroke="#999" stroke-width="1.4" stroke-linejoin="round"/><path transform="translate(12,13) scale(1.05)" d="M0 0L0 11L3 8.3L5.3 12.5L7.3 11.4L5.1 7.3L8.8 7.1Z" fill="#999" stroke="#fff" stroke-width="0.5"/></svg>
<svg class="r" style="left:627px;top:147px" width="26" height="28" viewBox="0 0 26 28"><path d="M10 2L21 25L2 26Z" fill="#c4c4c4" stroke="#999" stroke-width="1.4"/><path d="M10 8L17 22L5 23Z" fill="#fff" stroke="#999" stroke-width="1"/><path d="M14 12L22 4" stroke="#aaa" stroke-width="3"/></svg>
<svg class="r" style="left:659px;top:147px" width="26" height="28" viewBox="0 0 26 28"><path d="M10 2L21 25L2 26Z" fill="#c4c4c4" stroke="#999" stroke-width="1.4"/><path d="M10 8L17 22L5 23Z" fill="#fff" stroke="#999" stroke-width="1"/><path d="M14 14L23 5" stroke="#aaa" stroke-width="3"/></svg>
<svg class="r" style="left:688px;top:147px" width="26" height="28" viewBox="0 0 26 28"><path d="M7 2L17 25L1 26Z" fill="#c8c8c8" stroke="#333" stroke-width="1.3"/><path d="M12 2L22 25L5 26Z" fill="#7cc04a" stroke="#333" stroke-width="1.3"/><path d="M15 18L24 16L22 26" fill="none" stroke="#2a8ae0" stroke-width="3"/></svg>
<svg class="r" style="left:724px;top:147px" width="26" height="28" viewBox="0 0 26 28"><path d="M10 2L20 25L2 26Z" fill="#7cc04a" stroke="#333" stroke-width="1.4"/><path d="M13.5 16.5L22.5 25.5M22.5 16.5L13.5 25.5" stroke="#e2402f" stroke-width="2.8" stroke-linecap="round"/></svg>
<svg class="r" style="left:755px;top:147px" width="26" height="28" viewBox="0 0 26 28"><path d="M8 2L3 26" stroke="#aaa" stroke-width="1.5" stroke-dasharray="3 2"/><path d="M11 2L22 25L5 26Z" fill="#c4c4c4" stroke="#aaa" stroke-width="1.3"/></svg>
<svg class="r" style="left:787px;top:147px" width="26" height="28" viewBox="0 0 26 28"><path d="M10 2L21 25L2 26Z" fill="#c4c4c4" stroke="#aaa" stroke-width="1.3"/><rect x="12" y="15" width="9" height="11" fill="#fff" stroke="#999" stroke-width="1"/></svg>
<svg class="r" style="left:817px;top:147px" width="26" height="28" viewBox="0 0 26 28"><path d="M6 26L12 3H25L19 26Z" fill="#c4c4c4" stroke="#999" stroke-width="1.3"/><path d="M12 3L19 26" stroke="#aaa" stroke-width="3" stroke-dasharray="2 1.5"/></svg>
<svg class="r" style="left:856px;top:147px" width="26" height="28" viewBox="0 0 26 28"><path d="M10 2L21 25L2 26Z" fill="#fff" stroke="#999" stroke-width="1.3"/><ellipse cx="18" cy="21" rx="5" ry="3.5" fill="#d0d0d0"/></svg>
<svg class="r" style="left:885px;top:147px" width="26" height="28" viewBox="0 0 26 28"><path d="M8 2L17 25L1 26Z" fill="#fff" stroke="#333" stroke-width="1.3"/><path d="M13 2L22 25L6 26Z" fill="#fff" stroke="#333" stroke-width="1.3"/><ellipse cx="16" cy="21" rx="5.5" ry="3.5" fill="#2a8ae0"/><path d="M13 6L20 4L21 12" fill="none" stroke="#2a8ae0" stroke-width="2.6"/></svg>
<svg class="r" style="left:917px;top:147px" width="26" height="28" viewBox="0 0 26 28"><path d="M10 2L21 25L2 26Z" fill="#c0c0c0" stroke="#333" stroke-width="1.3"/><ellipse cx="17" cy="21" rx="5.5" ry="3.5" fill="#2a8ae0"/></svg>
<svg class="r" style="left:947px;top:147px" width="26" height="28" viewBox="0 0 26 28"><path d="M6 26L11 3H25L20 26Z" fill="#c4c4c4" stroke="#999" stroke-width="1.5"/><path d="M11 5L19 20" stroke="#888" stroke-width="1"/><ellipse cx="19" cy="21" rx="5" ry="3.5" fill="#d6d6d6"/></svg>
<div class="r" style="left:872px;top:250px;width:616px;height:569px;background:#f0f0f0;border:1px solid #7f8c98;box-shadow:1px 4px 9px rgba(30,60,100,0.32);"></div>
<div class="r" style="left:873px;top:251px;width:614px;height:30px;background:#fff;"></div>
<div class="t" style="top:258.42px;font-size:11.5px;line-height:15px;color:#9a9a9a;left:902.7px;">Fix Wizard (Part: stl) &gt; Diagnostics</div>
<svg class="r" style="left:882px;top:258px" width="15" height="15" viewBox="0 0 15 15"><path d="M5 0.5h5v4.5h4.5v5h-4.5v4.5h-5v-4.5h-4.5v-5h4.5z" fill="#e01010" stroke="#a00" stroke-width="0.6"/></svg>
<div class="r" style="left:1368px;top:265px;width:10px;height:1px;background:#707070;"></div>
<div class="r" style="left:1413px;top:260px;width:10px;height:10px;border:1px solid #dedede;"></div>
<svg class="r" style="left:1459px;top:260px" width="11" height="11" viewBox="0 0 11 11"><path d="M0.5 0.5L10.5 10.5M10.5 0.5L0.5 10.5" stroke="#6a6a6a" stroke-width="0.95"/></svg>
<div class="r" style="left:877px;top:285px;width:121px;height:529px;border:1px solid #707070;background:#fff;"></div>
<div class="r" style="left:879px;top:287px;width:118px;height:525px;border:1px solid #6e6e6e;background:#fff;"></div>
<div class="r" style="left:904px;top:289px;width:88px;height:20px;background:#ebebeb;"></div>
<div class="t" style="top:291.18px;font-size:11.6px;line-height:15px;color:#000;left:906.6px;">Diagnostics</div>
<div class="t" style="top:312.18px;font-size:11.6px;line-height:15px;color:#000;left:906.6px;">Combined Fix</div>
<div class="t" style="top:354.08px;font-size:11.6px;line-height:15px;color:#000;left:906.6px;">Normals</div>
<div class="t" style="top:375.08px;font-size:11.6px;line-height:15px;color:#000;left:906.6px;">Stitching</div>
<div class="t" style="top:396.08px;font-size:11.6px;line-height:15px;color:#000;left:906.6px;">Noise Shells</div>
<div class="t" style="top:417.08px;font-size:11.6px;line-height:15px;color:#000;left:906.6px;">Holes</div>
<div class="t" style="top:438.08px;font-size:11.6px;line-height:15px;color:#000;left:906.6px;">Triangles</div>
<div class="t" style="top:459.08px;font-size:11.6px;line-height:15px;color:#000;left:906.6px;">Overlaps</div>
<div class="t" style="top:480.08px;font-size:11.6px;line-height:15px;color:#000;left:906.6px;">Shells</div>
<div class="t" style="top:522.08px;font-size:11.6px;line-height:15px;color:#000;left:906.6px;">Profiles</div>
<div class="r" style="left:880px;top:340px;width:112px;height:1px;background:#808080;"></div>
<div class="r" style="left:880px;top:508px;width:112px;height:1px;background:#808080;"></div>
<div class="t" style="top:283.68px;font-size:11.3px;line-height:15px;color:#000;left:1008.7px;">Current Part:</div>
<div class="r" style="left:1083px;top:285px;width:350px;height:21px;background:#e5e5e5;border:1px solid #adadad;"></div>
<div class="t" style="top:288.08px;font-size:11.3px;line-height:15px;color:#000;letter-spacing:0.2px;left:1087.5px;">stl</div>
<svg class="r" style="left:1418px;top:292px" width="10" height="7" viewBox="0 0 10 7"><path d="M1 1.5L5 5.5L9 1.5" stroke="#333" stroke-width="1.3" fill="none"/></svg>
<div class="r" style="left:1438px;top:286px;width:44px;height:22px;background:#cccccc;border:1px solid #c4c4c4;"></div>
<div class="t" style="top:289.58px;font-size:11.3px;line-height:15px;color:#8d8d8d;left:1310px;width:300px;text-align:center;">Next</div>
<div class="r" style="left:1006px;top:317px;width:473px;height:382px;background:linear-gradient(#fcfcfc,#efefef);border:1px solid #adadad;border-radius:2px;"></div>
<div class="r" style="left:1016px;top:343px;width:453px;height:68px;border:1px solid #dcdcdc;box-shadow:inset 1px 1px 0 #fff, 1px 1px 0 #fff;"></div>
<div class="r" style="left:1023px;top:337px;width:38px;height:12px;background:#fbfbfb;"></div>
<div class="t" style="top:336.48px;font-size:11.3px;line-height:15px;color:#000;letter-spacing:0.2px;left:1025.3px;">Advice</div>
<div class="t" style="top:356.58px;font-size:11.3px;line-height:15px;color:#000;letter-spacing:0.05px;left:1029.7px;">Go to the 'Shells' page to unify shells or manually merge some parts.</div>
<div class="r" style="left:1443px;top:357px;width:16px;height:46px;background:#f0f0f0;"></div>
<svg class="r" style="left:1446px;top:386px" width="10" height="6" viewBox="0 0 10 6"><path d="M1 0.8L5 4.8L9 0.8" stroke="#b0b0b0" stroke-width="1.1" fill="none"/></svg>
<svg class="r" style="left:1446px;top:360px" width="10" height="6" viewBox="0 0 10 6"><path d="M1 5.2L5 1.2L9 5.2" stroke="#b0b0b0" stroke-width="1.1" fill="none"/></svg>
<div class="r" style="left:1016px;top:423px;width:453px;height:265px;border:1px solid #dcdcdc;box-shadow:inset 1px 1px 0 #fff, 1px 1px 0 #fff;"></div>
<div class="r" style="left:1023px;top:417px;width:64px;height:12px;background:#f8f8f8;"></div>
<div class="t" style="top:416.48px;font-size:11.3px;line-height:15px;color:#000;letter-spacing:0.2px;left:1025.6px;">Diagnostics</div>
<div class="r" style="left:1026px;top:438px;width:13px;height:13px;border:1px solid #333;background:#fff;"></div>
<div class="t" style="top:437.18px;font-size:11.3px;line-height:15px;color:#000;letter-spacing:0.2px;left:1042.7px;">Full Analysis</div>
<div class="r" style="left:1046px;top:468px;width:13px;height:13px;border:1px solid #333;background:#fff;"></div>
<svg class="r" style="left:1048px;top:470.5px" width="9" height="8" viewBox="0 0 9 8"><path d="M0.6 3.6L3.3 6.6L8.6 0.8" stroke="#333" stroke-width="1.35" fill="none"/></svg>
<svg class="r" style="left:1066px;top:467px" width="17" height="17" viewBox="0 0 17 17"><path d="M0.3 4.3L3.8 3L6.6 9.3L15.8 0.3L16.3 1.6L7.2 15.8L5.3 15.8Z" fill="#249048" stroke="#1d6e38" stroke-width="0.5" stroke-linejoin="round"/></svg>
<div class="t" style="top:467.19px;font-size:11px;line-height:14px;color:#000;font-weight:bold;left:1086px;">0</div>
<div class="t" style="top:466.58px;font-size:11.3px;line-height:15px;color:#000;letter-spacing:0.2px;left:1131.5px;">inverted normals detected</div>
<div class="r" style="left:1046px;top:488px;width:13px;height:13px;border:1px solid #333;background:#fff;"></div>
<svg class="r" style="left:1048px;top:490.5px" width="9" height="8" viewBox="0 0 9 8"><path d="M0.6 3.6L3.3 6.6L8.6 0.8" stroke="#333" stroke-width="1.35" fill="none"/></svg>
<svg class="r" style="left:1066px;top:487px" width="17" height="17" viewBox="0 0 17 17"><path d="M0.3 4.3L3.8 3L6.6 9.3L15.8 0.3L16.3 1.6L7.2 15.8L5.3 15.8Z" fill="#249048" stroke="#1d6e38" stroke-width="0.5" stroke-linejoin="round"/></svg>
<div class="t" style="top:487.19px;font-size:11px;line-height:14px;color:#000;font-weight:bold;left:1086px;">0</div>
<div class="t" style="top:486.58px;font-size:11.3px;line-height:15px;color:#000;letter-spacing:0.2px;left:1131.5px;">bad edges detected</div>
<svg class="r" style="left:1086px;top:507px" width="17" height="17" viewBox="0 0 17 17"><path d="M0.3 4.3L3.8 3L6.6 9.3L15.8 0.3L16.3 1.6L7.2 15.8L5.3 15.8Z" fill="#249048" stroke="#1d6e38" stroke-width="0.5" stroke-linejoin="round"/></svg>
<div class="t" style="top:507.19px;font-size:11px;line-height:14px;color:#000;font-weight:bold;left:1106px;">0</div>
<div class="t" style="top:506.58px;font-size:11.3px;line-height:15px;color:#000;letter-spacing:0.2px;left:1151.3px;">bad contours detected</div>
<div class="r" style="left:1066px;top:528px;width:13px;height:13px;border:1px solid #333;background:#fff;"></div>
<svg class="r" style="left:1068px;top:530.5px" width="9" height="8" viewBox="0 0 9 8"><path d="M0.6 3.6L3.3 6.6L8.6 0.8" stroke="#333" stroke-width="1.35" fill="none"/></svg>
<svg class="r" style="left:1086px;top:527px" width="17" height="17" viewBox="0 0 17 17"><path d="M0.3 4.3L3.8 3L6.6 9.3L15.8 0.3L16.3 1.6L7.2 15.8L5.3 15.8Z" fill="#249048" stroke="#1d6e38" stroke-width="0.5" stroke-linejoin="round"/></svg>
<div class="t" style="top:527.19px;font-size:11px;line-height:14px;color:#000;font-weight:bold;left:1106px;">0</div>
<div class="t" style="top:526.58px;font-size:11.3px;line-height:15px;color:#000;letter-spacing:0.2px;left:1151.3px;">near bad edges detected</div>
<div class="r" style="left:1066px;top:548px;width:13px;height:13px;border:1px solid #333;background:#fff;"></div>
<svg class="r" style="left:1068px;top:550.5px" width="9" height="8" viewBox="0 0 9 8"><path d="M0.6 3.6L3.3 6.6L8.6 0.8" stroke="#333" stroke-width="1.35" fill="none"/></svg>
<svg class="r" style="left:1086px;top:547px" width="17" height="17" viewBox="0 0 17 17"><path d="M0.3 4.3L3.8 3L6.6 9.3L15.8 0.3L16.3 1.6L7.2 15.8L5.3 15.8Z" fill="#249048" stroke="#1d6e38" stroke-width="0.5" stroke-linejoin="round"/></svg>
<div class="t" style="top:547.19px;font-size:11px;line-height:14px;color:#000;font-weight:bold;left:1106px;">0</div>
<div class="t" style="top:546.58px;font-size:11.3px;line-height:15px;color:#000;letter-spacing:0.2px;left:1151.3px;">planar holes detected</div>
<div class="r" style="left:1046px;top:568px;width:13px;height:13px;border:1px solid #333;background:#fff;"></div>
<svg class="r" style="left:1048px;top:570.5px" width="9" height="8" viewBox="0 0 9 8"><path d="M0.6 3.6L3.3 6.6L8.6 0.8" stroke="#333" stroke-width="1.35" fill="none"/></svg>
<svg class="r" style="left:1066px;top:567px" width="16" height="15" viewBox="0 0 16 15"><path d="M1 2L4 0.5L8 5.5L12.5 0.5L15.5 2L10.5 7.5L15.5 13.5L12.5 15L8 9.5L3.5 14.5L0.5 13L5.5 7.5z" fill="#cf3428" stroke="#9a2626" stroke-width="0.7"/></svg>
<div class="t" style="top:567.19px;font-size:11px;line-height:14px;color:#000;font-weight:bold;left:1086px;">8</div>
<div class="t" style="top:566.58px;font-size:11.3px;line-height:15px;color:#000;letter-spacing:0.2px;left:1131.5px;">shells detected</div>
<svg class="r" style="left:1086px;top:587px" width="17" height="17" viewBox="0 0 17 17"><path d="M0.3 4.3L3.8 3L6.6 9.3L15.8 0.3L16.3 1.6L7.2 15.8L5.3 15.8Z" fill="#249048" stroke="#1d6e38" stroke-width="0.5" stroke-linejoin="round"/></svg>
<div class="t" style="top:587.19px;font-size:11px;line-height:14px;color:#000;font-weight:bold;left:1106px;">0</div>
<div class="t" style="top:586.58px;font-size:11.3px;line-height:15px;color:#000;letter-spacing:0.2px;left:1151.3px;">possible noise shells detected</div>
<div class="r" style="left:1046px;top:608px;width:13px;height:13px;border:1px solid #333;background:#fff;"></div>
<div class="r" style="left:1072.5px;top:615px;width:3px;height:3px;background:#2030c0;border-radius:50%;"></div>
<div class="t" style="top:606.58px;font-size:11.3px;line-height:15px;color:#000;letter-spacing:0.2px;left:1131.5px;">overlapping triangles detected</div>
<div class="r" style="left:1046px;top:628px;width:13px;height:13px;border:1px solid #333;background:#fff;"></div>
<div class="r" style="left:1072.5px;top:635px;width:3px;height:3px;background:#2030c0;border-radius:50%;"></div>
<div class="t" style="top:626.58px;font-size:11.3px;line-height:15px;color:#000;letter-spacing:0.2px;left:1131.5px;">intersecting triangles detected</div>
<div class="r" style="left:1348px;top:655px;width:111px;height:24px;background:#e1e1e1;border:1px solid #adadad;"></div>
<div class="t" style="top:659.58px;font-size:11.3px;line-height:15px;color:#000;left:1261px;width:300px;text-align:center;">Update</div>
<svg class="r" style="left:1352px;top:657px" width="20" height="20" viewBox="0 0 20 20"><circle cx="13" cy="7" r="5.5" fill="#cfe6f8" stroke="#5a8fc0" stroke-width="1.2"/><circle cx="12" cy="6" r="2.5" fill="#fff" opacity="0.6"/><path d="M9 11L2.5 17.5" stroke="#c89a20" stroke-width="3" stroke-linecap="round"/></svg>
<div class="r" style="left:1188px;top:789px;width:150px;height:25px;background:#e1e1e1;border:1px solid #adadad;"></div>
<div class="t" style="top:794.58px;font-size:11.3px;line-height:15px;color:#000;left:1120.5px;width:300px;text-align:center;">Follow Advice</div>
<svg class="r" style="left:1192px;top:792px" width="22" height="18" viewBox="0 0 22 18"><path d="M1 6h10v-5l10 8l-10 8v-5h-10z" fill="#6cd23a" stroke="#2f8a10" stroke-width="1.2" stroke-linejoin="round"/></svg>
<div class="r" style="left:1344px;top:789px;width:58px;height:24px;background:#e1e1e1;border:1px solid #adadad;"></div>
<div class="t" style="top:793.58px;font-size:11.3px;line-height:15px;color:#000;left:1223px;width:300px;text-align:center;">Close</div>
<div class="r" style="left:1409px;top:789px;width:58px;height:24px;background:#e1e1e1;border:1px solid #adadad;"></div>
<div class="t" style="top:793.58px;font-size:11.3px;line-height:15px;color:#000;left:1288px;width:300px;text-align:center;">Help</div>
<svg class="r" style="left:1473px;top:805px" width="14" height="14" viewBox="0 0 14 14"><path d="M13 2L2 13M13 6L6 13M13 10L10 13" stroke="#888" stroke-width="1"/></svg>
<svg class="r" style="left:883px;top:288px" width="20" height="20" viewBox="0 0 20 20"><circle cx="12.5" cy="7.5" r="6" fill="#8cc6f0" stroke="#3a78a8" stroke-width="1.3"/><circle cx="11" cy="6" r="2.5" fill="#c8e6fa"/><path d="M8.5 11.5L2.5 17.5" stroke="#7a8a68" stroke-width="3.2" stroke-linecap="round"/></svg>
<svg class="r" style="left:886px;top:310px" width="18" height="18" viewBox="0 0 18 18"><path d="M4 3L14 1.5L16 3V14L6 15.5Z" fill="#d8e6f8" stroke="#7a8aa8" stroke-width="0.8"/><path d="M2 5L12 3.5L14 5V16L4 17.5Z" fill="#c4d8f4" stroke="#7a8aa8" stroke-width="0.8"/><path d="M0.5 6.5L10 5L11.5 6.5V17L2 18Z" fill="#b8d0f0" stroke="#7a8aa8" stroke-width="0.8"/></svg>
<svg class="r" style="left:884px;top:351px" width="19" height="20" viewBox="0 0 19 20"><path d="M2 4L9 1L17 4L17 15L10 19L2 15Z" fill="#c0cdea" stroke="#555a70" stroke-width="0.9"/><path d="M2 4L9 1L17 4L10 7Z" fill="#dfe6f6"/><path d="M10 7L17 4V15L10 19Z" fill="#c82020"/><path d="M2 4L10 7L17 4M10 7V19" fill="none" stroke="#6a7090" stroke-width="0.7"/></svg>
<svg class="r" style="left:884px;top:372px" width="19" height="20" viewBox="0 0 19 20"><path d="M2 4L9 1L17 4L17 15L10 19L2 15Z" fill="#c0cdea" stroke="#555a70" stroke-width="0.9"/><path d="M2 4L9 1L17 4L10 7Z" fill="#dfe6f6"/><path d="M10 7L17 4V15L10 19Z" fill="#9aaee0"/><path d="M2 4L10 7L17 4M10 7V19" fill="none" stroke="#6a7090" stroke-width="0.7"/><path d="M10 6L16 3.5" stroke="#e8d020" stroke-width="2.2"/></svg>
<svg class="r" style="left:884px;top:393px" width="19" height="20" viewBox="0 0 19 20"><path d="M2 4L9 1L17 4L17 15L10 19L2 15Z" fill="#c0cdea" stroke="#555a70" stroke-width="0.9"/><path d="M2 4L9 1L17 4L10 7Z" fill="#dfe6f6"/><path d="M10 7L17 4V15L10 19Z" fill="#9aaee0"/><path d="M2 4L10 7L17 4M10 7V19" fill="none" stroke="#6a7090" stroke-width="0.7"/><circle cx="5" cy="8" r="1.4" fill="#1a2040"/><circle cx="7" cy="12" r="1.4" fill="#1a2040"/><circle cx="4" cy="13" r="1.4" fill="#1a2040"/><circle cx="12" cy="10" r="1.4" fill="#1a2040"/><circle cx="15" cy="9" r="1.4" fill="#1a2040"/><circle cx="13" cy="14" r="1.4" fill="#1a2040"/><circle cx="15" cy="13" r="1.4" fill="#1a2040"/><circle cx="9" cy="3.5" r="1.4" fill="#1a2040"/><circle cx="12" cy="4" r="1.4" fill="#1a2040"/></svg>
<svg class="r" style="left:884px;top:414px" width="19" height="20" viewBox="0 0 19 20"><path d="M2 4L9 1L17 4L17 15L10 19L2 15Z" fill="#c0cdea" stroke="#555a70" stroke-width="0.9"/><path d="M2 4L9 1L17 4L10 7Z" fill="#d82838"/><path d="M10 7L17 4V15L10 19Z" fill="#9aaee0"/><path d="M2 4L10 7L17 4M10 7V19" fill="none" stroke="#6a7090" stroke-width="0.7"/></svg>
<svg class="r" style="left:884px;top:435px" width="19" height="20" viewBox="0 0 19 20"><path d="M2 4L9 1L17 4L17 15L10 19L2 15Z" fill="#9a9ae0" stroke="#555a70" stroke-width="0.9"/><path d="M2 4L9 1L17 4L10 7Z" fill="#b8b8f0"/><path d="M10 7L17 4V15L10 19Z" fill="#8080d8"/><path d="M2 4L10 7L17 4M10 7V19" fill="none" stroke="#6a7090" stroke-width="0.7"/><path d="M3 5L10 18M13 9L12 17M14 8L11 15" stroke="#333a70" stroke-width="0.8"/></svg>
<svg class="r" style="left:884px;top:456px" width="19" height="20" viewBox="0 0 19 20"><path d="M2 4L9 1L17 4L17 15L10 19L2 15Z" fill="#c0cdea" stroke="#555a70" stroke-width="0.9"/><path d="M2 4L9 1L17 4L10 7Z" fill="#dfe6f6"/><path d="M10 7L17 4V15L10 19Z" fill="#9aaee0"/><path d="M2 4L10 7L17 4M10 7V19" fill="none" stroke="#6a7090" stroke-width="0.7"/><path d="M8 8V18" stroke="#6a7090" stroke-width="1"/></svg>
<svg class="r" style="left:884px;top:477px" width="19" height="20" viewBox="0 0 19 20"><path d="M2 4L9 1L17 4L17 15L10 19L2 15Z" fill="#c0cdea" stroke="#555a70" stroke-width="0.9"/><path d="M2 4L9 1L17 4L10 7Z" fill="#dfe6f6"/><path d="M10 7L17 4V15L10 19Z" fill="#9aaee0"/><path d="M2 4L10 7L17 4M10 7V19" fill="none" stroke="#6a7090" stroke-width="0.7"/></svg>
<svg class="r" style="left:887px;top:520px" width="16" height="18" viewBox="0 0 16 18"><path d="M1.5 1.5H9.5L14 6V16.5H1.5Z" fill="#fff" stroke="#2a88b8" stroke-width="1.2"/><path d="M9.5 1.5V6H14" fill="#cfe8f6" stroke="#2a88b8" stroke-width="0.9"/><path d="M4 8.5H11M4 11H11M4 13.5H11" stroke="#2a88b8" stroke-width="1"/></svg>
<svg class="r" style="left:0px;top:0px" width="1528" height="1023" viewBox="0 0 1528 1023"><g><polygon points="93.2,436.0 95.0,430.5 100.0,427.5 110.8,424.6 113.9,424.2 117.0,423.9 120.1,423.7 123.3,423.6 126.4,423.6 129.5,423.8 132.6,424.0 135.7,424.4 138.8,424.9 141.9,425.5 145.0,426.2 148.0,427.1 151.0,428.0 153.9,429.1 156.8,430.2 159.7,431.5 162.5,432.9 165.2,434.4 167.9,435.9 170.6,437.6 173.2,439.4 175.7,441.3 178.1,443.2 180.5,445.3 182.8,447.4 185.0,449.6 187.1,451.9 189.1,454.3 191.1,456.8 192.9,459.3 194.7,461.9 196.3,464.5 197.9,467.2 199.4,470.0 200.7,472.8 202.0,475.7 202.5,476.8 168.5,477.0 168.3,468.6 184.6,468.6 184.8,468.7 183.1,466.6 181.3,464.6 179.5,462.6 177.6,460.7 175.6,458.9 173.6,457.1 171.5,455.4 169.3,453.8 167.1,452.2 164.9,450.7 162.6,449.4 160.2,448.1 157.8,446.8 155.4,445.7 152.9,444.6 150.4,443.7 147.8,442.8 145.3,442.0 142.7,441.3 140.1,440.7 137.4,440.2 134.8,439.8 132.1,439.4 129.4,439.2 126.7,439.0 124.0,439.0 121.3,439.0 118.6,439.2 116.0,439.4 113.3,439.7 104.0,443.5 97.5,444.5 94.0,441.0" fill="#a8a6a5" stroke="#262c33" stroke-width="1.7" stroke-linejoin="round"/><path d="M111 425L113.5 440" stroke="#343a42" stroke-width="0.9"/><path d="M121.2 426.5 C122.6 426.6 127.0 426.5 130.0 426.7 C132.9 426.9 135.8 427.3 138.7 427.8 C141.6 428.4 144.5 429.1 147.3 429.9 C150.1 430.7 152.9 431.7 155.6 432.9 C158.3 434.0 160.9 435.3 163.5 436.7 C166.1 438.1 168.6 439.7 171.0 441.4 C173.4 443.1 175.7 444.9 177.9 446.9 C180.1 448.8 182.2 450.9 184.2 453.0 C186.2 455.2 188.0 457.5 189.8 459.9 C191.5 462.2 193.8 466.0 194.6 467.2" fill="none" stroke="#555a60" stroke-width="0.6" stroke-dasharray="3 2"/><circle cx="104.2" cy="434" r="2.3" fill="#fff" stroke="#343a42" stroke-width="1.3"/><polyline points="47.1,553.3 47.7,557.3 48.6,561.3 49.7,565.3 51.0,569.1 52.5,573.0 54.2,576.7 56.1,580.3 58.2,583.8 60.4,587.3 62.9,590.5 65.5,593.7 68.2,596.7 71.2,599.6 74.2,602.3 77.4,604.9 80.8,607.2 84.2,609.4 87.8,611.4 91.5,613.3 95.2,614.9 99.0,616.3 102.9,617.6 106.9,618.6 110.9,619.4 115.0,620.0 119.0,620.4 123.1,620.6 127.2,620.6 131.3,620.3 135.4,619.8 139.4,619.2 143.4,618.3 147.4,617.2 151.2,615.9 155.1,614.4 158.8,612.7 162.4,610.8 165.9,608.7 169.4,606.5 172.6,604.0 175.8,601.4 178.8,598.7 181.7,595.7 184.4,592.7 187.0,589.5 189.3,586.1 191.5,582.7 193.5,579.1 195.4,575.4 197.0,571.7" fill="none" stroke="#4a5058" stroke-width="2.4"/><circle cx="50.3" cy="565.8" r="2.8" fill="#9a9da1" stroke="#343a42" stroke-width="1.1"/><circle cx="57.2" cy="580.7" r="2.8" fill="#9a9da1" stroke="#343a42" stroke-width="1.1"/><circle cx="65.1" cy="594.6" r="2.8" fill="#9a9da1" stroke="#343a42" stroke-width="1.1"/><circle cx="77.4" cy="605.3" r="2.8" fill="#9a9da1" stroke="#343a42" stroke-width="1.1"/><circle cx="91.3" cy="614.1" r="2.8" fill="#9a9da1" stroke="#343a42" stroke-width="1.1"/><circle cx="107.1" cy="620.2" r="2.8" fill="#9a9da1" stroke="#343a42" stroke-width="1.1"/><circle cx="122.7" cy="623.7" r="2.8" fill="#9a9da1" stroke="#343a42" stroke-width="1.1"/><circle cx="138.8" cy="622.4" r="2.8" fill="#9a9da1" stroke="#343a42" stroke-width="1.1"/><circle cx="154.8" cy="618.0" r="2.8" fill="#9a9da1" stroke="#343a42" stroke-width="1.1"/><circle cx="170.1" cy="610.0" r="2.8" fill="#9a9da1" stroke="#343a42" stroke-width="1.1"/><circle cx="183.2" cy="600.6" r="2.8" fill="#9a9da1" stroke="#343a42" stroke-width="1.1"/><circle cx="193.3" cy="588.2" r="2.8" fill="#9a9da1" stroke="#343a42" stroke-width="1.1"/><circle cx="200.7" cy="575.7" r="2.8" fill="#9a9da1" stroke="#343a42" stroke-width="1.1"/><polygon points="113.5,480.0 116.3,475.0 116.4,467.5 114.0,464.0 109.5,464.6 104.1,468.3 100.3,469.4 96.5,470.8 92.8,472.3 89.2,474.0 85.7,475.9 82.3,478.0 79.0,480.3 75.8,482.7 72.8,485.3 69.9,488.0 67.1,490.9 64.5,494.0 62.1,497.1 59.8,500.4 57.7,503.8 55.8,507.3 54.0,510.9 52.5,514.6 51.2,518.4 50.0,522.2 49.0,526.1 48.3,530.0 47.8,534.0 47.4,538.0 47.3,542.0 47.4,546.0 47.7,550.0 48.2,553.9 48.9,557.9 49.8,561.8 50.9,565.6 52.2,569.4 53.7,573.1 55.4,576.7 57.3,580.2 59.3,583.7 61.6,587.0 64.0,590.2 66.6,593.2 69.3,596.2 72.2,598.9 75.2,601.6 78.3,604.0 81.6,606.3 85.0,608.4 88.5,610.4 92.1,612.1 95.8,613.7 99.5,615.1 103.3,616.3 107.2,617.2 111.1,618.0 115.1,618.6 119.1,618.9 123.1,619.1 127.1,619.0 131.1,618.8 135.0,618.3 139.0,617.6 142.9,616.7 146.7,615.7 150.5,614.4 154.2,612.9 157.9,611.2 161.4,609.4 164.8,607.3 168.2,605.1 171.4,602.7 174.5,600.2 177.4,597.5 180.2,594.6 182.8,591.6 185.3,588.5 187.6,585.2 189.8,581.8 191.8,578.3 193.5,574.8 195.1,571.1 196.5,567.4 197.7,563.5 199.0,560.4 168.2,560.4 168.3,568.0 186.5,568.0 186.0,565.6 184.7,568.7 183.4,571.7 181.9,574.6 180.2,577.4 178.4,580.2 176.5,582.8 174.4,585.4 172.2,587.8 169.9,590.1 167.4,592.3 164.9,594.4 162.2,596.3 159.5,598.1 156.6,599.8 153.7,601.3 150.7,602.6 147.7,603.8 144.5,604.8 141.4,605.7 138.2,606.4 134.9,607.0 131.7,607.3 128.4,607.6 125.1,607.6 121.8,607.5 118.6,607.2 115.3,606.7 112.1,606.1 108.9,605.3 105.8,604.3 102.7,603.2 99.6,601.9 96.7,600.5 93.8,598.9 91.0,597.2 88.3,595.3 85.7,593.3 83.2,591.1 80.8,588.9 78.6,586.5 76.5,584.0 74.5,581.4 72.6,578.7 70.9,575.9 69.3,573.0 67.9,570.1 66.6,567.0 65.5,563.9 64.5,560.8 63.7,557.6 63.1,554.4 62.6,551.1 62.3,547.9 62.2,544.6 62.2,541.3 62.5,538.0 62.8,534.8 63.4,531.5 64.1,528.3 65.0,525.1 66.0,522.0 67.2,519.0 68.6,516.0 70.1,513.1 71.7,510.2 73.5,507.5 75.5,504.8 77.6,502.3 79.8,499.8 82.1,497.5 84.5,495.3 87.1,493.3 89.7,491.3 92.5,489.5 95.3,487.9 98.2,486.4 101.2,485.0 104.3,483.8 107.4,482.8 110.6,481.9" fill="#a8a6a5" stroke="#262c33" stroke-width="1.7" stroke-linejoin="round"/><path d="M99.2 473.5 C97.9 474.1 94.0 475.6 91.6 476.8 C89.1 478.0 86.7 479.4 84.4 480.9 C82.1 482.3 79.9 484.0 77.8 485.7 C75.6 487.4 73.6 489.3 71.7 491.3 C69.8 493.2 68.0 495.3 66.3 497.5 C64.6 499.7 63.0 501.9 61.6 504.3 C60.2 506.6 58.8 509.1 57.7 511.5 C56.5 514.0 55.5 516.6 54.6 519.2 C53.8 521.8 53.0 524.5 52.4 527.1 C51.9 529.8 51.4 532.6 51.2 535.3 C50.9 538.0 50.8 540.8 50.8 543.5 C50.8 546.3 51.0 549.0 51.4 551.7 C51.7 554.5 52.2 557.2 52.9 559.8 C53.5 562.5 54.8 566.4 55.2 567.7" fill="none" stroke="#50555c" stroke-width="0.6" stroke-dasharray="3 2.5"/><circle cx="105.7" cy="471.3" r="2.2" fill="#fff" stroke="#343a42" stroke-width="1.2"/><path d="M177.7 502.5 C178.8 504.9 182.7 510.7 184.3 516.7 C185.9 522.7 187.4 531.3 187.2 538.6 C186.9 545.9 183.5 556.8 182.8 560.4" fill="none" stroke="#343a42" stroke-width="6.8" stroke-linecap="round" stroke-linejoin="round"/><path d="M177.7 502.5 C178.8 504.9 182.7 510.7 184.3 516.7 C185.9 522.7 187.4 531.3 187.2 538.6 C186.9 545.9 183.5 556.8 182.8 560.4" fill="none" stroke="#a8a6a5" stroke-width="4.6" stroke-linecap="round" stroke-linejoin="round"/><path d="M89.3 525.7 C90.5 524.8 95.4 523.0 96.3 520.4 C97.2 517.8 96.6 512.5 94.6 509.9 C92.5 507.3 87.5 504.9 84.0 504.6 C80.5 504.3 76.0 505.4 73.5 508.0 C71.0 510.6 68.7 516.6 69.0 520.4 C69.3 524.2 71.5 528.1 75.2 531.0 C78.9 533.9 85.1 536.0 91.0 538.0 C96.9 540.0 104.5 540.4 110.4 543.3 C116.3 546.2 122.0 551.0 126.4 555.6 C130.8 560.2 134.3 566.0 136.7 571.0 C139.1 576.0 140.5 580.8 141.0 585.6 C141.5 590.4 139.8 597.6 139.6 600.0" fill="none" stroke="#343a42" stroke-width="6.6" stroke-linecap="round" stroke-linejoin="round"/><path d="M89.3 525.7 C90.5 524.8 95.4 523.0 96.3 520.4 C97.2 517.8 96.6 512.5 94.6 509.9 C92.5 507.3 87.5 504.9 84.0 504.6 C80.5 504.3 76.0 505.4 73.5 508.0 C71.0 510.6 68.7 516.6 69.0 520.4 C69.3 524.2 71.5 528.1 75.2 531.0 C78.9 533.9 85.1 536.0 91.0 538.0 C96.9 540.0 104.5 540.4 110.4 543.3 C116.3 546.2 122.0 551.0 126.4 555.6 C130.8 560.2 134.3 566.0 136.7 571.0 C139.1 576.0 140.5 580.8 141.0 585.6 C141.5 590.4 139.8 597.6 139.6 600.0" fill="none" stroke="#a8a6a5" stroke-width="4.3" stroke-linecap="round" stroke-linejoin="round"/><path d="M127.9 518.0 C129.8 516.5 138.6 513.0 139.6 509.3 C140.6 505.6 136.6 498.4 133.7 496.0 C130.8 493.6 125.9 493.0 122.0 494.7 C118.1 496.4 112.5 501.5 110.3 506.4 C108.1 511.3 108.1 518.1 108.8 524.0 C109.5 529.9 111.8 536.0 114.7 541.6 C117.6 547.2 124.5 555.0 126.4 557.7" fill="none" stroke="#343a42" stroke-width="6.6" stroke-linecap="round" stroke-linejoin="round"/><path d="M127.9 518.0 C129.8 516.5 138.6 513.0 139.6 509.3 C140.6 505.6 136.6 498.4 133.7 496.0 C130.8 493.6 125.9 493.0 122.0 494.7 C118.1 496.4 112.5 501.5 110.3 506.4 C108.1 511.3 108.1 518.1 108.8 524.0 C109.5 529.9 111.8 536.0 114.7 541.6 C117.6 547.2 124.5 555.0 126.4 557.7" fill="none" stroke="#a8a6a5" stroke-width="4.3" stroke-linecap="round" stroke-linejoin="round"/><path d="M126.4 557.7 C129.3 559.7 139.3 567.5 144.0 569.4 C148.7 571.3 152.6 569.4 154.3 569.4" fill="none" stroke="#343a42" stroke-width="6.0" stroke-linecap="round" stroke-linejoin="round"/><path d="M126.4 557.7 C129.3 559.7 139.3 567.5 144.0 569.4 C148.7 571.3 152.6 569.4 154.3 569.4" fill="none" stroke="#a8a6a5" stroke-width="3.8" stroke-linecap="round" stroke-linejoin="round"/><path d="M141.0 580.0 C142.2 580.9 145.0 584.2 148.4 585.6 C151.8 587.0 157.4 589.0 161.6 588.5 C165.8 588.0 171.1 585.1 173.3 582.6 C175.5 580.1 175.5 576.0 174.8 573.8 C174.1 571.6 171.0 569.6 169.0 569.4 C167.0 569.2 164.0 571.9 163.0 572.4" fill="none" stroke="#343a42" stroke-width="6.3999999999999995" stroke-linecap="round" stroke-linejoin="round"/><path d="M141.0 580.0 C142.2 580.9 145.0 584.2 148.4 585.6 C151.8 587.0 157.4 589.0 161.6 588.5 C165.8 588.0 171.1 585.1 173.3 582.6 C175.5 580.1 175.5 576.0 174.8 573.8 C174.1 571.6 171.0 569.6 169.0 569.4 C167.0 569.2 164.0 571.9 163.0 572.4" fill="none" stroke="#a8a6a5" stroke-width="4.1" stroke-linecap="round" stroke-linejoin="round"/><path d="M80.5 562.7 C83.7 561.5 93.7 556.8 99.9 555.6 C106.1 554.4 113.1 555.2 117.5 555.6 C121.9 556.0 124.9 557.4 126.4 557.7" fill="none" stroke="#343a42" stroke-width="6.3999999999999995" stroke-linecap="round" stroke-linejoin="round"/><path d="M80.5 562.7 C83.7 561.5 93.7 556.8 99.9 555.6 C106.1 554.4 113.1 555.2 117.5 555.6 C121.9 556.0 124.9 557.4 126.4 557.7" fill="none" stroke="#a8a6a5" stroke-width="4.1" stroke-linecap="round" stroke-linejoin="round"/><path d="M117.5 556.0 C116.6 557.4 112.8 561.8 112.0 564.4 C111.2 567.0 111.8 570.0 112.5 571.5 C113.2 573.0 115.4 572.9 116.0 573.2" fill="none" stroke="#343a42" stroke-width="5.6" stroke-linecap="round" stroke-linejoin="round"/><path d="M117.5 556.0 C116.6 557.4 112.8 561.8 112.0 564.4 C111.2 567.0 111.8 570.0 112.5 571.5 C113.2 573.0 115.4 572.9 116.0 573.2" fill="none" stroke="#a8a6a5" stroke-width="3.4" stroke-linecap="round" stroke-linejoin="round"/><path d="M82.3 496.7 C84.3 495.8 90.2 490.4 94.6 491.4 C99.0 492.4 108.7 500.2 108.7 502.8 C108.7 505.4 99.0 508.2 94.6 507.2 C90.2 506.2 84.3 498.4 82.3 496.7Z" fill="#a8a6a5" stroke="#343a42" stroke-width="1.3" stroke-linejoin="round"/><circle cx="92.0" cy="494.4" r="1.15" fill="#b4b4b4" stroke="#5c6066" stroke-width="0.7"/><circle cx="94.8" cy="494.4" r="1.15" fill="#b4b4b4" stroke="#5c6066" stroke-width="0.7"/><circle cx="87.8" cy="496.8" r="1.15" fill="#b4b4b4" stroke="#5c6066" stroke-width="0.7"/><circle cx="90.6" cy="496.8" r="1.15" fill="#b4b4b4" stroke="#5c6066" stroke-width="0.7"/><circle cx="93.4" cy="496.8" r="1.15" fill="#b4b4b4" stroke="#5c6066" stroke-width="0.7"/><circle cx="96.2" cy="496.8" r="1.15" fill="#b4b4b4" stroke="#5c6066" stroke-width="0.7"/><circle cx="99.0" cy="496.8" r="1.15" fill="#b4b4b4" stroke="#5c6066" stroke-width="0.7"/><circle cx="89.2" cy="499.3" r="1.15" fill="#b4b4b4" stroke="#5c6066" stroke-width="0.7"/><circle cx="92.0" cy="499.3" r="1.15" fill="#b4b4b4" stroke="#5c6066" stroke-width="0.7"/><circle cx="94.8" cy="499.3" r="1.15" fill="#b4b4b4" stroke="#5c6066" stroke-width="0.7"/><circle cx="97.6" cy="499.3" r="1.15" fill="#b4b4b4" stroke="#5c6066" stroke-width="0.7"/><circle cx="100.4" cy="499.3" r="1.15" fill="#b4b4b4" stroke="#5c6066" stroke-width="0.7"/><circle cx="90.6" cy="501.7" r="1.15" fill="#b4b4b4" stroke="#5c6066" stroke-width="0.7"/><circle cx="93.4" cy="501.7" r="1.15" fill="#b4b4b4" stroke="#5c6066" stroke-width="0.7"/><circle cx="96.2" cy="501.7" r="1.15" fill="#b4b4b4" stroke="#5c6066" stroke-width="0.7"/><circle cx="99.0" cy="501.7" r="1.15" fill="#b4b4b4" stroke="#5c6066" stroke-width="0.7"/><circle cx="101.8" cy="501.7" r="1.15" fill="#b4b4b4" stroke="#5c6066" stroke-width="0.7"/><circle cx="104.6" cy="501.7" r="1.15" fill="#b4b4b4" stroke="#5c6066" stroke-width="0.7"/><circle cx="94.8" cy="504.1" r="1.15" fill="#b4b4b4" stroke="#5c6066" stroke-width="0.7"/><circle cx="97.6" cy="504.1" r="1.15" fill="#b4b4b4" stroke="#5c6066" stroke-width="0.7"/><circle cx="95.5" cy="499.3" r="3.0" fill="#9a9a9a" stroke="#3a3f47" stroke-width="1.1"/><circle cx="95.5" cy="499.3" r="1.5" fill="#f0f0f0" stroke="#555" stroke-width="0.5"/><path d="M62.9 546.8 C65.8 545.6 74.9 539.5 80.5 539.8 C86.1 540.1 96.3 545.8 96.3 548.6 C96.3 551.4 86.1 556.8 80.5 556.5 C74.9 556.2 65.8 548.4 62.9 546.8Z" fill="#a8a6a5" stroke="#343a42" stroke-width="1.3" stroke-linejoin="round"/><circle cx="78.6" cy="542.9" r="1.15" fill="#b4b4b4" stroke="#5c6066" stroke-width="0.7"/><circle cx="81.4" cy="542.9" r="1.15" fill="#b4b4b4" stroke="#5c6066" stroke-width="0.7"/><circle cx="71.6" cy="545.3" r="1.15" fill="#b4b4b4" stroke="#5c6066" stroke-width="0.7"/><circle cx="74.4" cy="545.3" r="1.15" fill="#b4b4b4" stroke="#5c6066" stroke-width="0.7"/><circle cx="77.2" cy="545.3" r="1.15" fill="#b4b4b4" stroke="#5c6066" stroke-width="0.7"/><circle cx="80.0" cy="545.3" r="1.15" fill="#b4b4b4" stroke="#5c6066" stroke-width="0.7"/><circle cx="82.8" cy="545.3" r="1.15" fill="#b4b4b4" stroke="#5c6066" stroke-width="0.7"/><circle cx="85.6" cy="545.3" r="1.15" fill="#b4b4b4" stroke="#5c6066" stroke-width="0.7"/><circle cx="70.2" cy="547.8" r="1.15" fill="#b4b4b4" stroke="#5c6066" stroke-width="0.7"/><circle cx="73.0" cy="547.8" r="1.15" fill="#b4b4b4" stroke="#5c6066" stroke-width="0.7"/><circle cx="75.8" cy="547.8" r="1.15" fill="#b4b4b4" stroke="#5c6066" stroke-width="0.7"/><circle cx="78.6" cy="547.8" r="1.15" fill="#b4b4b4" stroke="#5c6066" stroke-width="0.7"/><circle cx="81.4" cy="547.8" r="1.15" fill="#b4b4b4" stroke="#5c6066" stroke-width="0.7"/><circle cx="84.2" cy="547.8" r="1.15" fill="#b4b4b4" stroke="#5c6066" stroke-width="0.7"/><circle cx="87.0" cy="547.8" r="1.15" fill="#b4b4b4" stroke="#5c6066" stroke-width="0.7"/><circle cx="89.8" cy="547.8" r="1.15" fill="#b4b4b4" stroke="#5c6066" stroke-width="0.7"/><circle cx="74.4" cy="550.2" r="1.15" fill="#b4b4b4" stroke="#5c6066" stroke-width="0.7"/><circle cx="77.2" cy="550.2" r="1.15" fill="#b4b4b4" stroke="#5c6066" stroke-width="0.7"/><circle cx="80.0" cy="550.2" r="1.15" fill="#b4b4b4" stroke="#5c6066" stroke-width="0.7"/><circle cx="82.8" cy="550.2" r="1.15" fill="#b4b4b4" stroke="#5c6066" stroke-width="0.7"/><circle cx="85.6" cy="550.2" r="1.15" fill="#b4b4b4" stroke="#5c6066" stroke-width="0.7"/><circle cx="88.4" cy="550.2" r="1.15" fill="#b4b4b4" stroke="#5c6066" stroke-width="0.7"/><circle cx="78.6" cy="552.6" r="1.15" fill="#b4b4b4" stroke="#5c6066" stroke-width="0.7"/><circle cx="81.4" cy="552.6" r="1.15" fill="#b4b4b4" stroke="#5c6066" stroke-width="0.7"/><circle cx="84.2" cy="552.6" r="1.15" fill="#b4b4b4" stroke="#5c6066" stroke-width="0.7"/><circle cx="71.7" cy="547.5" r="3.0" fill="#9a9a9a" stroke="#3a3f47" stroke-width="1.1"/><circle cx="71.7" cy="547.5" r="1.5" fill="#f0f0f0" stroke="#555" stroke-width="0.5"/><circle cx="84.9" cy="548" r="3.0" fill="#9a9a9a" stroke="#3a3f47" stroke-width="1.1"/><circle cx="84.9" cy="548" r="1.5" fill="#f0f0f0" stroke="#555" stroke-width="0.5"/><path d="M91.0 560.0 C88.8 561.0 80.8 563.0 78.0 566.0 C75.2 569.0 73.8 574.0 74.5 578.0 C75.2 582.0 78.6 587.5 82.0 590.0 C85.4 592.5 90.3 594.5 95.0 593.0 C99.7 591.5 109.6 582.7 110.4 581.0 C111.2 579.3 103.4 583.5 100.0 583.0 C96.6 582.5 92.0 580.2 90.0 578.0 C88.0 575.8 87.8 573.0 88.0 570.0 C88.2 567.0 90.5 561.7 91.0 560.0Z" fill="#a8a6a5" stroke="#343a42" stroke-width="1.3" stroke-linejoin="round"/><circle cx="82.3" cy="566.0" r="1.15" fill="#b4b4b4" stroke="#5c6066" stroke-width="0.7"/><circle cx="85.2" cy="566.0" r="1.15" fill="#b4b4b4" stroke="#5c6066" stroke-width="0.7"/><circle cx="88.1" cy="566.0" r="1.15" fill="#b4b4b4" stroke="#5c6066" stroke-width="0.7"/><circle cx="80.9" cy="568.5" r="1.15" fill="#b4b4b4" stroke="#5c6066" stroke-width="0.7"/><circle cx="83.8" cy="568.5" r="1.15" fill="#b4b4b4" stroke="#5c6066" stroke-width="0.7"/><circle cx="86.7" cy="568.5" r="1.15" fill="#b4b4b4" stroke="#5c6066" stroke-width="0.7"/><circle cx="79.4" cy="571.0" r="1.15" fill="#b4b4b4" stroke="#5c6066" stroke-width="0.7"/><circle cx="82.3" cy="571.0" r="1.15" fill="#b4b4b4" stroke="#5c6066" stroke-width="0.7"/><circle cx="85.2" cy="571.0" r="1.15" fill="#b4b4b4" stroke="#5c6066" stroke-width="0.7"/><circle cx="78.0" cy="573.5" r="1.15" fill="#b4b4b4" stroke="#5c6066" stroke-width="0.7"/><circle cx="80.9" cy="573.5" r="1.15" fill="#b4b4b4" stroke="#5c6066" stroke-width="0.7"/><circle cx="83.8" cy="573.5" r="1.15" fill="#b4b4b4" stroke="#5c6066" stroke-width="0.7"/><circle cx="86.7" cy="573.5" r="1.15" fill="#b4b4b4" stroke="#5c6066" stroke-width="0.7"/><circle cx="79.4" cy="576.1" r="1.15" fill="#b4b4b4" stroke="#5c6066" stroke-width="0.7"/><circle cx="82.3" cy="576.1" r="1.15" fill="#b4b4b4" stroke="#5c6066" stroke-width="0.7"/><circle cx="85.2" cy="576.1" r="1.15" fill="#b4b4b4" stroke="#5c6066" stroke-width="0.7"/><circle cx="78.0" cy="578.6" r="1.15" fill="#b4b4b4" stroke="#5c6066" stroke-width="0.7"/><circle cx="80.9" cy="578.6" r="1.15" fill="#b4b4b4" stroke="#5c6066" stroke-width="0.7"/><circle cx="83.8" cy="578.6" r="1.15" fill="#b4b4b4" stroke="#5c6066" stroke-width="0.7"/><circle cx="86.7" cy="578.6" r="1.15" fill="#b4b4b4" stroke="#5c6066" stroke-width="0.7"/><circle cx="79.4" cy="581.1" r="1.15" fill="#b4b4b4" stroke="#5c6066" stroke-width="0.7"/><circle cx="82.3" cy="581.1" r="1.15" fill="#b4b4b4" stroke="#5c6066" stroke-width="0.7"/><circle cx="85.2" cy="581.1" r="1.15" fill="#b4b4b4" stroke="#5c6066" stroke-width="0.7"/><circle cx="88.1" cy="581.1" r="1.15" fill="#b4b4b4" stroke="#5c6066" stroke-width="0.7"/><circle cx="91.0" cy="581.1" r="1.15" fill="#b4b4b4" stroke="#5c6066" stroke-width="0.7"/><circle cx="80.9" cy="583.6" r="1.15" fill="#b4b4b4" stroke="#5c6066" stroke-width="0.7"/><circle cx="83.8" cy="583.6" r="1.15" fill="#b4b4b4" stroke="#5c6066" stroke-width="0.7"/><circle cx="86.7" cy="583.6" r="1.15" fill="#b4b4b4" stroke="#5c6066" stroke-width="0.7"/><circle cx="89.6" cy="583.6" r="1.15" fill="#b4b4b4" stroke="#5c6066" stroke-width="0.7"/><circle cx="92.5" cy="583.6" r="1.15" fill="#b4b4b4" stroke="#5c6066" stroke-width="0.7"/><circle cx="95.4" cy="583.6" r="1.15" fill="#b4b4b4" stroke="#5c6066" stroke-width="0.7"/><circle cx="104.1" cy="583.6" r="1.15" fill="#b4b4b4" stroke="#5c6066" stroke-width="0.7"/><circle cx="82.3" cy="586.2" r="1.15" fill="#b4b4b4" stroke="#5c6066" stroke-width="0.7"/><circle cx="85.2" cy="586.2" r="1.15" fill="#b4b4b4" stroke="#5c6066" stroke-width="0.7"/><circle cx="88.1" cy="586.2" r="1.15" fill="#b4b4b4" stroke="#5c6066" stroke-width="0.7"/><circle cx="91.0" cy="586.2" r="1.15" fill="#b4b4b4" stroke="#5c6066" stroke-width="0.7"/><circle cx="93.9" cy="586.2" r="1.15" fill="#b4b4b4" stroke="#5c6066" stroke-width="0.7"/><circle cx="96.8" cy="586.2" r="1.15" fill="#b4b4b4" stroke="#5c6066" stroke-width="0.7"/><circle cx="99.7" cy="586.2" r="1.15" fill="#b4b4b4" stroke="#5c6066" stroke-width="0.7"/><circle cx="86.7" cy="588.7" r="1.15" fill="#b4b4b4" stroke="#5c6066" stroke-width="0.7"/><circle cx="89.6" cy="588.7" r="1.15" fill="#b4b4b4" stroke="#5c6066" stroke-width="0.7"/><circle cx="92.5" cy="588.7" r="1.15" fill="#b4b4b4" stroke="#5c6066" stroke-width="0.7"/><circle cx="95.4" cy="588.7" r="1.15" fill="#b4b4b4" stroke="#5c6066" stroke-width="0.7"/><circle cx="98.3" cy="588.7" r="1.15" fill="#b4b4b4" stroke="#5c6066" stroke-width="0.7"/><circle cx="82.3" cy="574" r="3.0" fill="#9a9a9a" stroke="#3a3f47" stroke-width="1.1"/><circle cx="82.3" cy="574" r="1.5" fill="#f0f0f0" stroke="#555" stroke-width="0.5"/><circle cx="88.4" cy="585.6" r="3.0" fill="#9a9a9a" stroke="#3a3f47" stroke-width="1.1"/><circle cx="88.4" cy="585.6" r="1.5" fill="#f0f0f0" stroke="#555" stroke-width="0.5"/><path d="M122.0 576.8 C120.3 578.0 114.2 581.0 112.0 584.0 C109.8 587.0 108.0 591.4 109.0 595.0 C110.0 598.6 114.2 603.7 118.0 605.5 C121.8 607.3 128.2 607.2 132.0 606.0 C135.8 604.8 140.3 601.0 141.0 598.0 C141.7 595.0 138.5 589.7 136.0 588.0 C133.5 586.3 129.0 588.7 126.0 588.0 C123.0 587.3 118.7 585.9 118.0 584.0 C117.3 582.1 121.3 578.0 122.0 576.8Z" fill="#a8a6a5" stroke="#343a42" stroke-width="1.3" stroke-linejoin="round"/><circle cx="116.8" cy="583.5" r="1.15" fill="#b4b4b4" stroke="#5c6066" stroke-width="0.7"/><circle cx="115.4" cy="586.0" r="1.15" fill="#b4b4b4" stroke="#5c6066" stroke-width="0.7"/><circle cx="113.9" cy="588.5" r="1.15" fill="#b4b4b4" stroke="#5c6066" stroke-width="0.7"/><circle cx="116.8" cy="588.5" r="1.15" fill="#b4b4b4" stroke="#5c6066" stroke-width="0.7"/><circle cx="119.7" cy="588.5" r="1.15" fill="#b4b4b4" stroke="#5c6066" stroke-width="0.7"/><circle cx="122.6" cy="588.5" r="1.15" fill="#b4b4b4" stroke="#5c6066" stroke-width="0.7"/><circle cx="112.5" cy="591.0" r="1.15" fill="#b4b4b4" stroke="#5c6066" stroke-width="0.7"/><circle cx="115.4" cy="591.0" r="1.15" fill="#b4b4b4" stroke="#5c6066" stroke-width="0.7"/><circle cx="118.3" cy="591.0" r="1.15" fill="#b4b4b4" stroke="#5c6066" stroke-width="0.7"/><circle cx="121.2" cy="591.0" r="1.15" fill="#b4b4b4" stroke="#5c6066" stroke-width="0.7"/><circle cx="124.1" cy="591.0" r="1.15" fill="#b4b4b4" stroke="#5c6066" stroke-width="0.7"/><circle cx="127.0" cy="591.0" r="1.15" fill="#b4b4b4" stroke="#5c6066" stroke-width="0.7"/><circle cx="129.9" cy="591.0" r="1.15" fill="#b4b4b4" stroke="#5c6066" stroke-width="0.7"/><circle cx="132.8" cy="591.0" r="1.15" fill="#b4b4b4" stroke="#5c6066" stroke-width="0.7"/><circle cx="113.9" cy="593.6" r="1.15" fill="#b4b4b4" stroke="#5c6066" stroke-width="0.7"/><circle cx="116.8" cy="593.6" r="1.15" fill="#b4b4b4" stroke="#5c6066" stroke-width="0.7"/><circle cx="119.7" cy="593.6" r="1.15" fill="#b4b4b4" stroke="#5c6066" stroke-width="0.7"/><circle cx="122.6" cy="593.6" r="1.15" fill="#b4b4b4" stroke="#5c6066" stroke-width="0.7"/><circle cx="125.5" cy="593.6" r="1.15" fill="#b4b4b4" stroke="#5c6066" stroke-width="0.7"/><circle cx="128.4" cy="593.6" r="1.15" fill="#b4b4b4" stroke="#5c6066" stroke-width="0.7"/><circle cx="131.3" cy="593.6" r="1.15" fill="#b4b4b4" stroke="#5c6066" stroke-width="0.7"/><circle cx="134.2" cy="593.6" r="1.15" fill="#b4b4b4" stroke="#5c6066" stroke-width="0.7"/><circle cx="112.5" cy="596.1" r="1.15" fill="#b4b4b4" stroke="#5c6066" stroke-width="0.7"/><circle cx="115.4" cy="596.1" r="1.15" fill="#b4b4b4" stroke="#5c6066" stroke-width="0.7"/><circle cx="118.3" cy="596.1" r="1.15" fill="#b4b4b4" stroke="#5c6066" stroke-width="0.7"/><circle cx="121.2" cy="596.1" r="1.15" fill="#b4b4b4" stroke="#5c6066" stroke-width="0.7"/><circle cx="124.1" cy="596.1" r="1.15" fill="#b4b4b4" stroke="#5c6066" stroke-width="0.7"/><circle cx="127.0" cy="596.1" r="1.15" fill="#b4b4b4" stroke="#5c6066" stroke-width="0.7"/><circle cx="129.9" cy="596.1" r="1.15" fill="#b4b4b4" stroke="#5c6066" stroke-width="0.7"/><circle cx="132.8" cy="596.1" r="1.15" fill="#b4b4b4" stroke="#5c6066" stroke-width="0.7"/><circle cx="135.7" cy="596.1" r="1.15" fill="#b4b4b4" stroke="#5c6066" stroke-width="0.7"/><circle cx="116.8" cy="598.6" r="1.15" fill="#b4b4b4" stroke="#5c6066" stroke-width="0.7"/><circle cx="119.7" cy="598.6" r="1.15" fill="#b4b4b4" stroke="#5c6066" stroke-width="0.7"/><circle cx="122.6" cy="598.6" r="1.15" fill="#b4b4b4" stroke="#5c6066" stroke-width="0.7"/><circle cx="125.5" cy="598.6" r="1.15" fill="#b4b4b4" stroke="#5c6066" stroke-width="0.7"/><circle cx="128.4" cy="598.6" r="1.15" fill="#b4b4b4" stroke="#5c6066" stroke-width="0.7"/><circle cx="131.3" cy="598.6" r="1.15" fill="#b4b4b4" stroke="#5c6066" stroke-width="0.7"/><circle cx="134.2" cy="598.6" r="1.15" fill="#b4b4b4" stroke="#5c6066" stroke-width="0.7"/><circle cx="137.1" cy="598.6" r="1.15" fill="#b4b4b4" stroke="#5c6066" stroke-width="0.7"/><circle cx="118.3" cy="601.1" r="1.15" fill="#b4b4b4" stroke="#5c6066" stroke-width="0.7"/><circle cx="121.2" cy="601.1" r="1.15" fill="#b4b4b4" stroke="#5c6066" stroke-width="0.7"/><circle cx="124.1" cy="601.1" r="1.15" fill="#b4b4b4" stroke="#5c6066" stroke-width="0.7"/><circle cx="127.0" cy="601.1" r="1.15" fill="#b4b4b4" stroke="#5c6066" stroke-width="0.7"/><circle cx="129.9" cy="601.1" r="1.15" fill="#b4b4b4" stroke="#5c6066" stroke-width="0.7"/><circle cx="132.8" cy="601.1" r="1.15" fill="#b4b4b4" stroke="#5c6066" stroke-width="0.7"/><circle cx="122.6" cy="603.7" r="1.15" fill="#b4b4b4" stroke="#5c6066" stroke-width="0.7"/><circle cx="125.5" cy="603.7" r="1.15" fill="#b4b4b4" stroke="#5c6066" stroke-width="0.7"/><circle cx="128.4" cy="603.7" r="1.15" fill="#b4b4b4" stroke="#5c6066" stroke-width="0.7"/><circle cx="131.3" cy="603.7" r="1.15" fill="#b4b4b4" stroke="#5c6066" stroke-width="0.7"/><circle cx="117" cy="597" r="3.0" fill="#9a9a9a" stroke="#3a3f47" stroke-width="1.1"/><circle cx="117" cy="597" r="1.5" fill="#f0f0f0" stroke="#555" stroke-width="0.5"/><circle cx="130" cy="598.5" r="3.0" fill="#9a9a9a" stroke="#3a3f47" stroke-width="1.1"/><circle cx="130" cy="598.5" r="1.5" fill="#f0f0f0" stroke="#555" stroke-width="0.5"/></g><g transform="translate(430.2,1) scale(-0.967,1)"><polygon points="93.2,436.0 95.0,430.5 100.0,427.5 110.8,424.6 113.9,424.2 117.0,423.9 120.1,423.7 123.3,423.6 126.4,423.6 129.5,423.8 132.6,424.0 135.7,424.4 138.8,424.9 141.9,425.5 145.0,426.2 148.0,427.1 151.0,428.0 153.9,429.1 156.8,430.2 159.7,431.5 162.5,432.9 165.2,434.4 167.9,435.9 170.6,437.6 173.2,439.4 175.7,441.3 178.1,443.2 180.5,445.3 182.8,447.4 185.0,449.6 187.1,451.9 189.1,454.3 191.1,456.8 192.9,459.3 194.7,461.9 196.3,464.5 197.9,467.2 199.4,470.0 200.7,472.8 202.0,475.7 202.5,476.8 168.5,477.0 168.3,468.6 184.6,468.6 184.8,468.7 183.1,466.6 181.3,464.6 179.5,462.6 177.6,460.7 175.6,458.9 173.6,457.1 171.5,455.4 169.3,453.8 167.1,452.2 164.9,450.7 162.6,449.4 160.2,448.1 157.8,446.8 155.4,445.7 152.9,444.6 150.4,443.7 147.8,442.8 145.3,442.0 142.7,441.3 140.1,440.7 137.4,440.2 134.8,439.8 132.1,439.4 129.4,439.2 126.7,439.0 124.0,439.0 121.3,439.0 118.6,439.2 116.0,439.4 113.3,439.7 104.0,443.5 97.5,444.5 94.0,441.0" fill="#a8a6a5" stroke="#262c33" stroke-width="1.7" stroke-linejoin="round"/><path d="M111 425L113.5 440" stroke="#343a42" stroke-width="0.9"/><path d="M121.2 426.5 C122.6 426.6 127.0 426.5 130.0 426.7 C132.9 426.9 135.8 427.3 138.7 427.8 C141.6 428.4 144.5 429.1 147.3 429.9 C150.1 430.7 152.9 431.7 155.6 432.9 C158.3 434.0 160.9 435.3 163.5 436.7 C166.1 438.1 168.6 439.7 171.0 441.4 C173.4 443.1 175.7 444.9 177.9 446.9 C180.1 448.8 182.2 450.9 184.2 453.0 C186.2 455.2 188.0 457.5 189.8 459.9 C191.5 462.2 193.8 466.0 194.6 467.2" fill="none" stroke="#555a60" stroke-width="0.6" stroke-dasharray="3 2"/><circle cx="104.2" cy="434" r="2.3" fill="#fff" stroke="#343a42" stroke-width="1.3"/></g><g transform="rotate(-2 315 540) translate(438.3,-3.5) scale(-1,1)"><polyline points="47.1,553.3 47.7,557.3 48.6,561.3 49.7,565.3 51.0,569.1 52.5,573.0 54.2,576.7 56.1,580.3 58.2,583.8 60.4,587.3 62.9,590.5 65.5,593.7 68.2,596.7 71.2,599.6 74.2,602.3 77.4,604.9 80.8,607.2 84.2,609.4 87.8,611.4 91.5,613.3 95.2,614.9 99.0,616.3 102.9,617.6 106.9,618.6 110.9,619.4 115.0,620.0 119.0,620.4 123.1,620.6 127.2,620.6 131.3,620.3 135.4,619.8 139.4,619.2 143.4,618.3 147.4,617.2 151.2,615.9 155.1,614.4 158.8,612.7 162.4,610.8 165.9,608.7 169.4,606.5 172.6,604.0 175.8,601.4 178.8,598.7 181.7,595.7 184.4,592.7 187.0,589.5 189.3,586.1 191.5,582.7 193.5,579.1 195.4,575.4 197.0,571.7" fill="none" stroke="#4a5058" stroke-width="2.4"/><circle cx="50.3" cy="565.8" r="2.8" fill="#9a9da1" stroke="#343a42" stroke-width="1.1"/><circle cx="57.2" cy="580.7" r="2.8" fill="#9a9da1" stroke="#343a42" stroke-width="1.1"/><circle cx="65.1" cy="594.6" r="2.8" fill="#9a9da1" stroke="#343a42" stroke-width="1.1"/><circle cx="77.4" cy="605.3" r="2.8" fill="#9a9da1" stroke="#343a42" stroke-width="1.1"/><circle cx="91.3" cy="614.1" r="2.8" fill="#9a9da1" stroke="#343a42" stroke-width="1.1"/><circle cx="107.1" cy="620.2" r="2.8" fill="#9a9da1" stroke="#343a42" stroke-width="1.1"/><circle cx="122.7" cy="623.7" r="2.8" fill="#9a9da1" stroke="#343a42" stroke-width="1.1"/><circle cx="138.8" cy="622.4" r="2.8" fill="#9a9da1" stroke="#343a42" stroke-width="1.1"/><circle cx="154.8" cy="618.0" r="2.8" fill="#9a9da1" stroke="#343a42" stroke-width="1.1"/><circle cx="170.1" cy="610.0" r="2.8" fill="#9a9da1" stroke="#343a42" stroke-width="1.1"/><circle cx="183.2" cy="600.6" r="2.8" fill="#9a9da1" stroke="#343a42" stroke-width="1.1"/><circle cx="193.3" cy="588.2" r="2.8" fill="#9a9da1" stroke="#343a42" stroke-width="1.1"/><circle cx="200.7" cy="575.7" r="2.8" fill="#9a9da1" stroke="#343a42" stroke-width="1.1"/><polygon points="113.5,480.0 116.3,475.0 116.4,467.5 114.0,464.0 109.5,464.6 104.1,468.3 100.3,469.4 96.5,470.8 92.8,472.3 89.2,474.0 85.7,475.9 82.3,478.0 79.0,480.3 75.8,482.7 72.8,485.3 69.9,488.0 67.1,490.9 64.5,494.0 62.1,497.1 59.8,500.4 57.7,503.8 55.8,507.3 54.0,510.9 52.5,514.6 51.2,518.4 50.0,522.2 49.0,526.1 48.3,530.0 47.8,534.0 47.4,538.0 47.3,542.0 47.4,546.0 47.7,550.0 48.2,553.9 48.9,557.9 49.8,561.8 50.9,565.6 52.2,569.4 53.7,573.1 55.4,576.7 57.3,580.2 59.3,583.7 61.6,587.0 64.0,590.2 66.6,593.2 69.3,596.2 72.2,598.9 75.2,601.6 78.3,604.0 81.6,606.3 85.0,608.4 88.5,610.4 92.1,612.1 95.8,613.7 99.5,615.1 103.3,616.3 107.2,617.2 111.1,618.0 115.1,618.6 119.1,618.9 123.1,619.1 127.1,619.0 131.1,618.8 135.0,618.3 139.0,617.6 142.9,616.7 146.7,615.7 150.5,614.4 154.2,612.9 157.9,611.2 161.4,609.4 164.8,607.3 168.2,605.1 171.4,602.7 174.5,600.2 177.4,597.5 180.2,594.6 182.8,591.6 185.3,588.5 187.6,585.2 189.8,581.8 191.8,578.3 193.5,574.8 195.1,571.1 196.5,567.4 197.7,563.5 199.0,560.4 168.2,560.4 168.3,568.0 186.5,568.0 186.0,565.6 184.7,568.7 183.4,571.7 181.9,574.6 180.2,577.4 178.4,580.2 176.5,582.8 174.4,585.4 172.2,587.8 169.9,590.1 167.4,592.3 164.9,594.4 162.2,596.3 159.5,598.1 156.6,599.8 153.7,601.3 150.7,602.6 147.7,603.8 144.5,604.8 141.4,605.7 138.2,606.4 134.9,607.0 131.7,607.3 128.4,607.6 125.1,607.6 121.8,607.5 118.6,607.2 115.3,606.7 112.1,606.1 108.9,605.3 105.8,604.3 102.7,603.2 99.6,601.9 96.7,600.5 93.8,598.9 91.0,597.2 88.3,595.3 85.7,593.3 83.2,591.1 80.8,588.9 78.6,586.5 76.5,584.0 74.5,581.4 72.6,578.7 70.9,575.9 69.3,573.0 67.9,570.1 66.6,567.0 65.5,563.9 64.5,560.8 63.7,557.6 63.1,554.4 62.6,551.1 62.3,547.9 62.2,544.6 62.2,541.3 62.5,538.0 62.8,534.8 63.4,531.5 64.1,528.3 65.0,525.1 66.0,522.0 67.2,519.0 68.6,516.0 70.1,513.1 71.7,510.2 73.5,507.5 75.5,504.8 77.6,502.3 79.8,499.8 82.1,497.5 84.5,495.3 87.1,493.3 89.7,491.3 92.5,489.5 95.3,487.9 98.2,486.4 101.2,485.0 104.3,483.8 107.4,482.8 110.6,481.9" fill="#a8a6a5" stroke="#262c33" stroke-width="1.7" stroke-linejoin="round"/><path d="M99.2 473.5 C97.9 474.1 94.0 475.6 91.6 476.8 C89.1 478.0 86.7 479.4 84.4 480.9 C82.1 482.3 79.9 484.0 77.8 485.7 C75.6 487.4 73.6 489.3 71.7 491.3 C69.8 493.2 68.0 495.3 66.3 497.5 C64.6 499.7 63.0 501.9 61.6 504.3 C60.2 506.6 58.8 509.1 57.7 511.5 C56.5 514.0 55.5 516.6 54.6 519.2 C53.8 521.8 53.0 524.5 52.4 527.1 C51.9 529.8 51.4 532.6 51.2 535.3 C50.9 538.0 50.8 540.8 50.8 543.5 C50.8 546.3 51.0 549.0 51.4 551.7 C51.7 554.5 52.2 557.2 52.9 559.8 C53.5 562.5 54.8 566.4 55.2 567.7" fill="none" stroke="#50555c" stroke-width="0.6" stroke-dasharray="3 2.5"/><circle cx="105.7" cy="471.3" r="2.2" fill="#fff" stroke="#343a42" stroke-width="1.2"/><path d="M177.7 502.5 C178.8 504.9 182.7 510.7 184.3 516.7 C185.9 522.7 187.4 531.3 187.2 538.6 C186.9 545.9 183.5 556.8 182.8 560.4" fill="none" stroke="#343a42" stroke-width="6.8" stroke-linecap="round" stroke-linejoin="round"/><path d="M177.7 502.5 C178.8 504.9 182.7 510.7 184.3 516.7 C185.9 522.7 187.4 531.3 187.2 538.6 C186.9 545.9 183.5 556.8 182.8 560.4" fill="none" stroke="#a8a6a5" stroke-width="4.6" stroke-linecap="round" stroke-linejoin="round"/><path d="M89.3 525.7 C90.5 524.8 95.4 523.0 96.3 520.4 C97.2 517.8 96.6 512.5 94.6 509.9 C92.5 507.3 87.5 504.9 84.0 504.6 C80.5 504.3 76.0 505.4 73.5 508.0 C71.0 510.6 68.7 516.6 69.0 520.4 C69.3 524.2 71.5 528.1 75.2 531.0 C78.9 533.9 85.1 536.0 91.0 538.0 C96.9 540.0 104.5 540.4 110.4 543.3 C116.3 546.2 122.0 551.0 126.4 555.6 C130.8 560.2 134.3 566.0 136.7 571.0 C139.1 576.0 140.5 580.8 141.0 585.6 C141.5 590.4 139.8 597.6 139.6 600.0" fill="none" stroke="#343a42" stroke-width="6.6" stroke-linecap="round" stroke-linejoin="round"/><path d="M89.3 525.7 C90.5 524.8 95.4 523.0 96.3 520.4 C97.2 517.8 96.6 512.5 94.6 509.9 C92.5 507.3 87.5 504.9 84.0 504.6 C80.5 504.3 76.0 505.4 73.5 508.0 C71.0 510.6 68.7 516.6 69.0 520.4 C69.3 524.2 71.5 528.1 75.2 531.0 C78.9 533.9 85.1 536.0 91.0 538.0 C96.9 540.0 104.5 540.4 110.4 543.3 C116.3 546.2 122.0 551.0 126.4 555.6 C130.8 560.2 134.3 566.0 136.7 571.0 C139.1 576.0 140.5 580.8 141.0 585.6 C141.5 590.4 139.8 597.6 139.6 600.0" fill="none" stroke="#a8a6a5" stroke-width="4.3" stroke-linecap="round" stroke-linejoin="round"/><path d="M127.9 518.0 C129.8 516.5 138.6 513.0 139.6 509.3 C140.6 505.6 136.6 498.4 133.7 496.0 C130.8 493.6 125.9 493.0 122.0 494.7 C118.1 496.4 112.5 501.5 110.3 506.4 C108.1 511.3 108.1 518.1 108.8 524.0 C109.5 529.9 111.8 536.0 114.7 541.6 C117.6 547.2 124.5 555.0 126.4 557.7" fill="none" stroke="#343a42" stroke-width="6.6" stroke-linecap="round" stroke-linejoin="round"/><path d="M127.9 518.0 C129.8 516.5 138.6 513.0 139.6 509.3 C140.6 505.6 136.6 498.4 133.7 496.0 C130.8 493.6 125.9 493.0 122.0 494.7 C118.1 496.4 112.5 501.5 110.3 506.4 C108.1 511.3 108.1 518.1 108.8 524.0 C109.5 529.9 111.8 536.0 114.7 541.6 C117.6 547.2 124.5 555.0 126.4 557.7" fill="none" stroke="#a8a6a5" stroke-width="4.3" stroke-linecap="round" stroke-linejoin="round"/><path d="M126.4 557.7 C129.3 559.7 139.3 567.5 144.0 569.4 C148.7 571.3 152.6 569.4 154.3 569.4" fill="none" stroke="#343a42" stroke-width="6.0" stroke-linecap="round" stroke-linejoin="round"/><path d="M126.4 557.7 C129.3 559.7 139.3 567.5 144.0 569.4 C148.7 571.3 152.6 569.4 154.3 569.4" fill="none" stroke="#a8a6a5" stroke-width="3.8" stroke-linecap="round" stroke-linejoin="round"/><path d="M141.0 580.0 C142.2 580.9 145.0 584.2 148.4 585.6 C151.8 587.0 157.4 589.0 161.6 588.5 C165.8 588.0 171.1 585.1 173.3 582.6 C175.5 580.1 175.5 576.0 174.8 573.8 C174.1 571.6 171.0 569.6 169.0 569.4 C167.0 569.2 164.0 571.9 163.0 572.4" fill="none" stroke="#343a42" stroke-width="6.3999999999999995" stroke-linecap="round" stroke-linejoin="round"/><path d="M141.0 580.0 C142.2 580.9 145.0 584.2 148.4 585.6 C151.8 587.0 157.4 589.0 161.6 588.5 C165.8 588.0 171.1 585.1 173.3 582.6 C175.5 580.1 175.5 576.0 174.8 573.8 C174.1 571.6 171.0 569.6 169.0 569.4 C167.0 569.2 164.0 571.9 163.0 572.4" fill="none" stroke="#a8a6a5" stroke-width="4.1" stroke-linecap="round" stroke-linejoin="round"/><path d="M80.5 562.7 C83.7 561.5 93.7 556.8 99.9 555.6 C106.1 554.4 113.1 555.2 117.5 555.6 C121.9 556.0 124.9 557.4 126.4 557.7" fill="none" stroke="#343a42" stroke-width="6.3999999999999995" stroke-linecap="round" stroke-linejoin="round"/><path d="M80.5 562.7 C83.7 561.5 93.7 556.8 99.9 555.6 C106.1 554.4 113.1 555.2 117.5 555.6 C121.9 556.0 124.9 557.4 126.4 557.7" fill="none" stroke="#a8a6a5" stroke-width="4.1" stroke-linecap="round" stroke-linejoin="round"/><path d="M117.5 556.0 C116.6 557.4 112.8 561.8 112.0 564.4 C111.2 567.0 111.8 570.0 112.5 571.5 C113.2 573.0 115.4 572.9 116.0 573.2" fill="none" stroke="#343a42" stroke-width="5.6" stroke-linecap="round" stroke-linejoin="round"/><path d="M117.5 556.0 C116.6 557.4 112.8 561.8 112.0 564.4 C111.2 567.0 111.8 570.0 112.5 571.5 C113.2 573.0 115.4 572.9 116.0 573.2" fill="none" stroke="#a8a6a5" stroke-width="3.4" stroke-linecap="round" stroke-linejoin="round"/><path d="M82.3 496.7 C84.3 495.8 90.2 490.4 94.6 491.4 C99.0 492.4 108.7 500.2 108.7 502.8 C108.7 505.4 99.0 508.2 94.6 507.2 C90.2 506.2 84.3 498.4 82.3 496.7Z" fill="#a8a6a5" stroke="#343a42" stroke-width="1.3" stroke-linejoin="round"/><circle cx="92.0" cy="494.4" r="1.15" fill="#b4b4b4" stroke="#5c6066" stroke-width="0.7"/><circle cx="94.8" cy="494.4" r="1.15" fill="#b4b4b4" stroke="#5c6066" stroke-width="0.7"/><circle cx="87.8" cy="496.8" r="1.15" fill="#b4b4b4" stroke="#5c6066" stroke-width="0.7"/><circle cx="90.6" cy="496.8" r="1.15" fill="#b4b4b4" stroke="#5c6066" stroke-width="0.7"/><circle cx="93.4" cy="496.8" r="1.15" fill="#b4b4b4" stroke="#5c6066" stroke-width="0.7"/><circle cx="96.2" cy="496.8" r="1.15" fill="#b4b4b4" stroke="#5c6066" stroke-width="0.7"/><circle cx="99.0" cy="496.8" r="1.15" fill="#b4b4b4" stroke="#5c6066" stroke-width="0.7"/><circle cx="89.2" cy="499.3" r="1.15" fill="#b4b4b4" stroke="#5c6066" stroke-width="0.7"/><circle cx="92.0" cy="499.3" r="1.15" fill="#b4b4b4" stroke="#5c6066" stroke-width="0.7"/><circle cx="94.8" cy="499.3" r="1.15" fill="#b4b4b4" stroke="#5c6066" stroke-width="0.7"/><circle cx="97.6" cy="499.3" r="1.15" fill="#b4b4b4" stroke="#5c6066" stroke-width="0.7"/><circle cx="100.4" cy="499.3" r="1.15" fill="#b4b4b4" stroke="#5c6066" stroke-width="0.7"/><circle cx="90.6" cy="501.7" r="1.15" fill="#b4b4b4" stroke="#5c6066" stroke-width="0.7"/><circle cx="93.4" cy="501.7" r="1.15" fill="#b4b4b4" stroke="#5c6066" stroke-width="0.7"/><circle cx="96.2" cy="501.7" r="1.15" fill="#b4b4b4" stroke="#5c6066" stroke-width="0.7"/><circle cx="99.0" cy="501.7" r="1.15" fill="#b4b4b4" stroke="#5c6066" stroke-width="0.7"/><circle cx="101.8" cy="501.7" r="1.15" fill="#b4b4b4" stroke="#5c6066" stroke-width="0.7"/><circle cx="104.6" cy="501.7" r="1.15" fill="#b4b4b4" stroke="#5c6066" stroke-width="0.7"/><circle cx="94.8" cy="504.1" r="1.15" fill="#b4b4b4" stroke="#5c6066" stroke-width="0.7"/><circle cx="97.6" cy="504.1" r="1.15" fill="#b4b4b4" stroke="#5c6066" stroke-width="0.7"/><circle cx="95.5" cy="499.3" r="3.0" fill="#9a9a9a" stroke="#3a3f47" stroke-width="1.1"/><circle cx="95.5" cy="499.3" r="1.5" fill="#f0f0f0" stroke="#555" stroke-width="0.5"/><path d="M62.9 546.8 C65.8 545.6 74.9 539.5 80.5 539.8 C86.1 540.1 96.3 545.8 96.3 548.6 C96.3 551.4 86.1 556.8 80.5 556.5 C74.9 556.2 65.8 548.4 62.9 546.8Z" fill="#a8a6a5" stroke="#343a42" stroke-width="1.3" stroke-linejoin="round"/><circle cx="78.6" cy="542.9" r="1.15" fill="#b4b4b4" stroke="#5c6066" stroke-width="0.7"/><circle cx="81.4" cy="542.9" r="1.15" fill="#b4b4b4" stroke="#5c6066" stroke-width="0.7"/><circle cx="71.6" cy="545.3" r="1.15" fill="#b4b4b4" stroke="#5c6066" stroke-width="0.7"/><circle cx="74.4" cy="545.3" r="1.15" fill="#b4b4b4" stroke="#5c6066" stroke-width="0.7"/><circle cx="77.2" cy="545.3" r="1.15" fill="#b4b4b4" stroke="#5c6066" stroke-width="0.7"/><circle cx="80.0" cy="545.3" r="1.15" fill="#b4b4b4" stroke="#5c6066" stroke-width="0.7"/><circle cx="82.8" cy="545.3" r="1.15" fill="#b4b4b4" stroke="#5c6066" stroke-width="0.7"/><circle cx="85.6" cy="545.3" r="1.15" fill="#b4b4b4" stroke="#5c6066" stroke-width="0.7"/><circle cx="70.2" cy="547.8" r="1.15" fill="#b4b4b4" stroke="#5c6066" stroke-width="0.7"/><circle cx="73.0" cy="547.8" r="1.15" fill="#b4b4b4" stroke="#5c6066" stroke-width="0.7"/><circle cx="75.8" cy="547.8" r="1.15" fill="#b4b4b4" stroke="#5c6066" stroke-width="0.7"/><circle cx="78.6" cy="547.8" r="1.15" fill="#b4b4b4" stroke="#5c6066" stroke-width="0.7"/><circle cx="81.4" cy="547.8" r="1.15" fill="#b4b4b4" stroke="#5c6066" stroke-width="0.7"/><circle cx="84.2" cy="547.8" r="1.15" fill="#b4b4b4" stroke="#5c6066" stroke-width="0.7"/><circle cx="87.0" cy="547.8" r="1.15" fill="#b4b4b4" stroke="#5c6066" stroke-width="0.7"/><circle cx="89.8" cy="547.8" r="1.15" fill="#b4b4b4" stroke="#5c6066" stroke-width="0.7"/><circle cx="74.4" cy="550.2" r="1.15" fill="#b4b4b4" stroke="#5c6066" stroke-width="0.7"/><circle cx="77.2" cy="550.2" r="1.15" fill="#b4b4b4" stroke="#5c6066" stroke-width="0.7"/><circle cx="80.0" cy="550.2" r="1.15" fill="#b4b4b4" stroke="#5c6066" stroke-width="0.7"/><circle cx="82.8" cy="550.2" r="1.15" fill="#b4b4b4" stroke="#5c6066" stroke-width="0.7"/><circle cx="85.6" cy="550.2" r="1.15" fill="#b4b4b4" stroke="#5c6066" stroke-width="0.7"/><circle cx="88.4" cy="550.2" r="1.15" fill="#b4b4b4" stroke="#5c6066" stroke-width="0.7"/><circle cx="78.6" cy="552.6" r="1.15" fill="#b4b4b4" stroke="#5c6066" stroke-width="0.7"/><circle cx="81.4" cy="552.6" r="1.15" fill="#b4b4b4" stroke="#5c6066" stroke-width="0.7"/><circle cx="84.2" cy="552.6" r="1.15" fill="#b4b4b4" stroke="#5c6066" stroke-width="0.7"/><circle cx="71.7" cy="547.5" r="3.0" fill="#9a9a9a" stroke="#3a3f47" stroke-width="1.1"/><circle cx="71.7" cy="547.5" r="1.5" fill="#f0f0f0" stroke="#555" stroke-width="0.5"/><circle cx="84.9" cy="548" r="3.0" fill="#9a9a9a" stroke="#3a3f47" stroke-width="1.1"/><circle cx="84.9" cy="548" r="1.5" fill="#f0f0f0" stroke="#555" stroke-width="0.5"/><path d="M91.0 560.0 C88.8 561.0 80.8 563.0 78.0 566.0 C75.2 569.0 73.8 574.0 74.5 578.0 C75.2 582.0 78.6 587.5 82.0 590.0 C85.4 592.5 90.3 594.5 95.0 593.0 C99.7 591.5 109.6 582.7 110.4 581.0 C111.2 579.3 103.4 583.5 100.0 583.0 C96.6 582.5 92.0 580.2 90.0 578.0 C88.0 575.8 87.8 573.0 88.0 570.0 C88.2 567.0 90.5 561.7 91.0 560.0Z" fill="#a8a6a5" stroke="#343a42" stroke-width="1.3" stroke-linejoin="round"/><circle cx="82.3" cy="566.0" r="1.15" fill="#b4b4b4" stroke="#5c6066" stroke-width="0.7"/><circle cx="85.2" cy="566.0" r="1.15" fill="#b4b4b4" stroke="#5c6066" stroke-width="0.7"/><circle cx="88.1" cy="566.0" r="1.15" fill="#b4b4b4" stroke="#5c6066" stroke-width="0.7"/><circle cx="80.9" cy="568.5" r="1.15" fill="#b4b4b4" stroke="#5c6066" stroke-width="0.7"/><circle cx="83.8" cy="568.5" r="1.15" fill="#b4b4b4" stroke="#5c6066" stroke-width="0.7"/><circle cx="86.7" cy="568.5" r="1.15" fill="#b4b4b4" stroke="#5c6066" stroke-width="0.7"/><circle cx="79.4" cy="571.0" r="1.15" fill="#b4b4b4" stroke="#5c6066" stroke-width="0.7"/><circle cx="82.3" cy="571.0" r="1.15" fill="#b4b4b4" stroke="#5c6066" stroke-width="0.7"/><circle cx="85.2" cy="571.0" r="1.15" fill="#b4b4b4" stroke="#5c6066" stroke-width="0.7"/><circle cx="78.0" cy="573.5" r="1.15" fill="#b4b4b4" stroke="#5c6066" stroke-width="0.7"/><circle cx="80.9" cy="573.5" r="1.15" fill="#b4b4b4" stroke="#5c6066" stroke-width="0.7"/><circle cx="83.8" cy="573.5" r="1.15" fill="#b4b4b4" stroke="#5c6066" stroke-width="0.7"/><circle cx="86.7" cy="573.5" r="1.15" fill="#b4b4b4" stroke="#5c6066" stroke-width="0.7"/><circle cx="79.4" cy="576.1" r="1.15" fill="#b4b4b4" stroke="#5c6066" stroke-width="0.7"/><circle cx="82.3" cy="576.1" r="1.15" fill="#b4b4b4" stroke="#5c6066" stroke-width="0.7"/><circle cx="85.2" cy="576.1" r="1.15" fill="#b4b4b4" stroke="#5c6066" stroke-width="0.7"/><circle cx="78.0" cy="578.6" r="1.15" fill="#b4b4b4" stroke="#5c6066" stroke-width="0.7"/><circle cx="80.9" cy="578.6" r="1.15" fill="#b4b4b4" stroke="#5c6066" stroke-width="0.7"/><circle cx="83.8" cy="578.6" r="1.15" fill="#b4b4b4" stroke="#5c6066" stroke-width="0.7"/><circle cx="86.7" cy="578.6" r="1.15" fill="#b4b4b4" stroke="#5c6066" stroke-width="0.7"/><circle cx="79.4" cy="581.1" r="1.15" fill="#b4b4b4" stroke="#5c6066" stroke-width="0.7"/><circle cx="82.3" cy="581.1" r="1.15" fill="#b4b4b4" stroke="#5c6066" stroke-width="0.7"/><circle cx="85.2" cy="581.1" r="1.15" fill="#b4b4b4" stroke="#5c6066" stroke-width="0.7"/><circle cx="88.1" cy="581.1" r="1.15" fill="#b4b4b4" stroke="#5c6066" stroke-width="0.7"/><circle cx="91.0" cy="581.1" r="1.15" fill="#b4b4b4" stroke="#5c6066" stroke-width="0.7"/><circle cx="80.9" cy="583.6" r="1.15" fill="#b4b4b4" stroke="#5c6066" stroke-width="0.7"/><circle cx="83.8" cy="583.6" r="1.15" fill="#b4b4b4" stroke="#5c6066" stroke-width="0.7"/><circle cx="86.7" cy="583.6" r="1.15" fill="#b4b4b4" stroke="#5c6066" stroke-width="0.7"/><circle cx="89.6" cy="583.6" r="1.15" fill="#b4b4b4" stroke="#5c6066" stroke-width="0.7"/><circle cx="92.5" cy="583.6" r="1.15" fill="#b4b4b4" stroke="#5c6066" stroke-width="0.7"/><circle cx="95.4" cy="583.6" r="1.15" fill="#b4b4b4" stroke="#5c6066" stroke-width="0.7"/><circle cx="104.1" cy="583.6" r="1.15" fill="#b4b4b4" stroke="#5c6066" stroke-width="0.7"/><circle cx="82.3" cy="586.2" r="1.15" fill="#b4b4b4" stroke="#5c6066" stroke-width="0.7"/><circle cx="85.2" cy="586.2" r="1.15" fill="#b4b4b4" stroke="#5c6066" stroke-width="0.7"/><circle cx="88.1" cy="586.2" r="1.15" fill="#b4b4b4" stroke="#5c6066" stroke-width="0.7"/><circle cx="91.0" cy="586.2" r="1.15" fill="#b4b4b4" stroke="#5c6066" stroke-width="0.7"/><circle cx="93.9" cy="586.2" r="1.15" fill="#b4b4b4" stroke="#5c6066" stroke-width="0.7"/><circle cx="96.8" cy="586.2" r="1.15" fill="#b4b4b4" stroke="#5c6066" stroke-width="0.7"/><circle cx="99.7" cy="586.2" r="1.15" fill="#b4b4b4" stroke="#5c6066" stroke-width="0.7"/><circle cx="86.7" cy="588.7" r="1.15" fill="#b4b4b4" stroke="#5c6066" stroke-width="0.7"/><circle cx="89.6" cy="588.7" r="1.15" fill="#b4b4b4" stroke="#5c6066" stroke-width="0.7"/><circle cx="92.5" cy="588.7" r="1.15" fill="#b4b4b4" stroke="#5c6066" stroke-width="0.7"/><circle cx="95.4" cy="588.7" r="1.15" fill="#b4b4b4" stroke="#5c6066" stroke-width="0.7"/><circle cx="98.3" cy="588.7" r="1.15" fill="#b4b4b4" stroke="#5c6066" stroke-width="0.7"/><circle cx="82.3" cy="574" r="3.0" fill="#9a9a9a" stroke="#3a3f47" stroke-width="1.1"/><circle cx="82.3" cy="574" r="1.5" fill="#f0f0f0" stroke="#555" stroke-width="0.5"/><circle cx="88.4" cy="585.6" r="3.0" fill="#9a9a9a" stroke="#3a3f47" stroke-width="1.1"/><circle cx="88.4" cy="585.6" r="1.5" fill="#f0f0f0" stroke="#555" stroke-width="0.5"/><path d="M122.0 576.8 C120.3 578.0 114.2 581.0 112.0 584.0 C109.8 587.0 108.0 591.4 109.0 595.0 C110.0 598.6 114.2 603.7 118.0 605.5 C121.8 607.3 128.2 607.2 132.0 606.0 C135.8 604.8 140.3 601.0 141.0 598.0 C141.7 595.0 138.5 589.7 136.0 588.0 C133.5 586.3 129.0 588.7 126.0 588.0 C123.0 587.3 118.7 585.9 118.0 584.0 C117.3 582.1 121.3 578.0 122.0 576.8Z" fill="#a8a6a5" stroke="#343a42" stroke-width="1.3" stroke-linejoin="round"/><circle cx="116.8" cy="583.5" r="1.15" fill="#b4b4b4" stroke="#5c6066" stroke-width="0.7"/><circle cx="115.4" cy="586.0" r="1.15" fill="#b4b4b4" stroke="#5c6066" stroke-width="0.7"/><circle cx="113.9" cy="588.5" r="1.15" fill="#b4b4b4" stroke="#5c6066" stroke-width="0.7"/><circle cx="116.8" cy="588.5" r="1.15" fill="#b4b4b4" stroke="#5c6066" stroke-width="0.7"/><circle cx="119.7" cy="588.5" r="1.15" fill="#b4b4b4" stroke="#5c6066" stroke-width="0.7"/><circle cx="122.6" cy="588.5" r="1.15" fill="#b4b4b4" stroke="#5c6066" stroke-width="0.7"/><circle cx="112.5" cy="591.0" r="1.15" fill="#b4b4b4" stroke="#5c6066" stroke-width="0.7"/><circle cx="115.4" cy="591.0" r="1.15" fill="#b4b4b4" stroke="#5c6066" stroke-width="0.7"/><circle cx="118.3" cy="591.0" r="1.15" fill="#b4b4b4" stroke="#5c6066" stroke-width="0.7"/><circle cx="121.2" cy="591.0" r="1.15" fill="#b4b4b4" stroke="#5c6066" stroke-width="0.7"/><circle cx="124.1" cy="591.0" r="1.15" fill="#b4b4b4" stroke="#5c6066" stroke-width="0.7"/><circle cx="127.0" cy="591.0" r="1.15" fill="#b4b4b4" stroke="#5c6066" stroke-width="0.7"/><circle cx="129.9" cy="591.0" r="1.15" fill="#b4b4b4" stroke="#5c6066" stroke-width="0.7"/><circle cx="132.8" cy="591.0" r="1.15" fill="#b4b4b4" stroke="#5c6066" stroke-width="0.7"/><circle cx="113.9" cy="593.6" r="1.15" fill="#b4b4b4" stroke="#5c6066" stroke-width="0.7"/><circle cx="116.8" cy="593.6" r="1.15" fill="#b4b4b4" stroke="#5c6066" stroke-width="0.7"/><circle cx="119.7" cy="593.6" r="1.15" fill="#b4b4b4" stroke="#5c6066" stroke-width="0.7"/><circle cx="122.6" cy="593.6" r="1.15" fill="#b4b4b4" stroke="#5c6066" stroke-width="0.7"/><circle cx="125.5" cy="593.6" r="1.15" fill="#b4b4b4" stroke="#5c6066" stroke-width="0.7"/><circle cx="128.4" cy="593.6" r="1.15" fill="#b4b4b4" stroke="#5c6066" stroke-width="0.7"/><circle cx="131.3" cy="593.6" r="1.15" fill="#b4b4b4" stroke="#5c6066" stroke-width="0.7"/><circle cx="134.2" cy="593.6" r="1.15" fill="#b4b4b4" stroke="#5c6066" stroke-width="0.7"/><circle cx="112.5" cy="596.1" r="1.15" fill="#b4b4b4" stroke="#5c6066" stroke-width="0.7"/><circle cx="115.4" cy="596.1" r="1.15" fill="#b4b4b4" stroke="#5c6066" stroke-width="0.7"/><circle cx="118.3" cy="596.1" r="1.15" fill="#b4b4b4" stroke="#5c6066" stroke-width="0.7"/><circle cx="121.2" cy="596.1" r="1.15" fill="#b4b4b4" stroke="#5c6066" stroke-width="0.7"/><circle cx="124.1" cy="596.1" r="1.15" fill="#b4b4b4" stroke="#5c6066" stroke-width="0.7"/><circle cx="127.0" cy="596.1" r="1.15" fill="#b4b4b4" stroke="#5c6066" stroke-width="0.7"/><circle cx="129.9" cy="596.1" r="1.15" fill="#b4b4b4" stroke="#5c6066" stroke-width="0.7"/><circle cx="132.8" cy="596.1" r="1.15" fill="#b4b4b4" stroke="#5c6066" stroke-width="0.7"/><circle cx="135.7" cy="596.1" r="1.15" fill="#b4b4b4" stroke="#5c6066" stroke-width="0.7"/><circle cx="116.8" cy="598.6" r="1.15" fill="#b4b4b4" stroke="#5c6066" stroke-width="0.7"/><circle cx="119.7" cy="598.6" r="1.15" fill="#b4b4b4" stroke="#5c6066" stroke-width="0.7"/><circle cx="122.6" cy="598.6" r="1.15" fill="#b4b4b4" stroke="#5c6066" stroke-width="0.7"/><circle cx="125.5" cy="598.6" r="1.15" fill="#b4b4b4" stroke="#5c6066" stroke-width="0.7"/><circle cx="128.4" cy="598.6" r="1.15" fill="#b4b4b4" stroke="#5c6066" stroke-width="0.7"/><circle cx="131.3" cy="598.6" r="1.15" fill="#b4b4b4" stroke="#5c6066" stroke-width="0.7"/><circle cx="134.2" cy="598.6" r="1.15" fill="#b4b4b4" stroke="#5c6066" stroke-width="0.7"/><circle cx="137.1" cy="598.6" r="1.15" fill="#b4b4b4" stroke="#5c6066" stroke-width="0.7"/><circle cx="118.3" cy="601.1" r="1.15" fill="#b4b4b4" stroke="#5c6066" stroke-width="0.7"/><circle cx="121.2" cy="601.1" r="1.15" fill="#b4b4b4" stroke="#5c6066" stroke-width="0.7"/><circle cx="124.1" cy="601.1" r="1.15" fill="#b4b4b4" stroke="#5c6066" stroke-width="0.7"/><circle cx="127.0" cy="601.1" r="1.15" fill="#b4b4b4" stroke="#5c6066" stroke-width="0.7"/><circle cx="129.9" cy="601.1" r="1.15" fill="#b4b4b4" stroke="#5c6066" stroke-width="0.7"/><circle cx="132.8" cy="601.1" r="1.15" fill="#b4b4b4" stroke="#5c6066" stroke-width="0.7"/><circle cx="122.6" cy="603.7" r="1.15" fill="#b4b4b4" stroke="#5c6066" stroke-width="0.7"/><circle cx="125.5" cy="603.7" r="1.15" fill="#b4b4b4" stroke="#5c6066" stroke-width="0.7"/><circle cx="128.4" cy="603.7" r="1.15" fill="#b4b4b4" stroke="#5c6066" stroke-width="0.7"/><circle cx="131.3" cy="603.7" r="1.15" fill="#b4b4b4" stroke="#5c6066" stroke-width="0.7"/><circle cx="117" cy="597" r="3.0" fill="#9a9a9a" stroke="#3a3f47" stroke-width="1.1"/><circle cx="117" cy="597" r="1.5" fill="#f0f0f0" stroke="#555" stroke-width="0.5"/><circle cx="130" cy="598.5" r="3.0" fill="#9a9a9a" stroke="#3a3f47" stroke-width="1.1"/><circle cx="130" cy="598.5" r="1.5" fill="#f0f0f0" stroke="#555" stroke-width="0.5"/></g></svg>
<div class="r" style="left:419px;top:513px;width:8px;height:8px;background:#2ed43a;border:1px solid #1a6b22;border-radius:50%;"></div>
<svg class="r" style="left:0px;top:0px" width="1528" height="1023" viewBox="0 0 1528 1023"><path d="M1342 881L1370 880.5L1400 880L1422 879" stroke="#d0203a" stroke-width="1.3" fill="none"/><path d="M1334 885L1341 893M1341 885L1334 893" stroke="#c01830" stroke-width="1.2"/><path d="M1423 884L1423.5 910L1424 940L1424.5 960" stroke="#48c048" stroke-width="1.2" fill="none"/><path d="M1425 969L1429 974L1433 969M1429 974L1429 979" stroke="#58c058" stroke-width="1.1" fill="none"/><path d="M1421 874L1427 874L1421 884L1427 884" stroke="#4070c0" stroke-width="1.2" fill="none"/></svg>
<svg class="r" style="left:0px;top:0px" width="1528" height="1023" viewBox="0 0 1528 1023"><rect x="0" y="986" width="1" height="13" fill="#3e444c"/><rect x="9" y="986" width="1" height="4" fill="#3e444c"/><rect x="18" y="986" width="1" height="4" fill="#3e444c"/><rect x="27" y="986" width="1" height="4" fill="#3e444c"/><rect x="36" y="986" width="1" height="4" fill="#3e444c"/><rect x="45" y="986" width="1" height="8" fill="#3e444c"/><rect x="54" y="986" width="1" height="4" fill="#3e444c"/><rect x="62" y="986" width="1" height="4" fill="#3e444c"/><rect x="71" y="986" width="1" height="4" fill="#3e444c"/><rect x="80" y="986" width="1" height="4" fill="#3e444c"/><rect x="89" y="986" width="1" height="13" fill="#3e444c"/><rect x="98" y="986" width="1" height="4" fill="#3e444c"/><rect x="107" y="986" width="1" height="4" fill="#3e444c"/><rect x="116" y="986" width="1" height="4" fill="#3e444c"/><rect x="125" y="986" width="1" height="4" fill="#3e444c"/><rect x="134" y="986" width="1" height="8" fill="#3e444c"/><rect x="143" y="986" width="1" height="4" fill="#3e444c"/><rect x="152" y="986" width="1" height="4" fill="#3e444c"/><rect x="161" y="986" width="1" height="4" fill="#3e444c"/><rect x="170" y="986" width="1" height="4" fill="#3e444c"/><rect x="179" y="986" width="1" height="13" fill="#3e444c"/><rect x="188" y="986" width="1" height="4" fill="#3e444c"/><rect x="197" y="986" width="1" height="4" fill="#3e444c"/><rect x="206" y="986" width="1" height="4" fill="#3e444c"/><rect x="215" y="986" width="1" height="4" fill="#3e444c"/><rect x="224" y="986" width="1" height="8" fill="#3e444c"/><rect x="233" y="986" width="1" height="4" fill="#3e444c"/><rect x="241" y="986" width="1" height="4" fill="#3e444c"/><rect x="250" y="986" width="1" height="4" fill="#3e444c"/><rect x="259" y="986" width="1" height="4" fill="#3e444c"/><rect x="268" y="986" width="1" height="13" fill="#3e444c"/><rect x="277" y="986" width="1" height="4" fill="#3e444c"/><rect x="286" y="986" width="1" height="4" fill="#3e444c"/><rect x="295" y="986" width="1" height="4" fill="#3e444c"/><rect x="304" y="986" width="1" height="4" fill="#3e444c"/><rect x="313" y="986" width="1" height="8" fill="#3e444c"/><rect x="322" y="986" width="1" height="4" fill="#3e444c"/><rect x="331" y="986" width="1" height="4" fill="#3e444c"/><rect x="340" y="986" width="1" height="4" fill="#3e444c"/><rect x="349" y="986" width="1" height="4" fill="#3e444c"/><rect x="358" y="986" width="1" height="13" fill="#3e444c"/><rect x="367" y="986" width="1" height="4" fill="#3e444c"/><rect x="376" y="986" width="1" height="4" fill="#3e444c"/><rect x="385" y="986" width="1" height="4" fill="#3e444c"/><rect x="394" y="986" width="1" height="4" fill="#3e444c"/><rect x="403" y="986" width="1" height="8" fill="#3e444c"/><rect x="412" y="986" width="1" height="4" fill="#3e444c"/><rect x="420" y="986" width="1" height="4" fill="#3e444c"/><rect x="429" y="986" width="1" height="4" fill="#3e444c"/><rect x="438" y="986" width="1" height="4" fill="#3e444c"/><rect x="447" y="986" width="1" height="13" fill="#3e444c"/><rect x="456" y="986" width="1" height="4" fill="#3e444c"/><rect x="465" y="986" width="1" height="4" fill="#3e444c"/><rect x="474" y="986" width="1" height="4" fill="#3e444c"/><rect x="483" y="986" width="1" height="4" fill="#3e444c"/><rect x="492" y="986" width="1" height="8" fill="#3e444c"/><rect x="501" y="986" width="1" height="4" fill="#3e444c"/><rect x="510" y="986" width="1" height="4" fill="#3e444c"/><rect x="519" y="986" width="1" height="4" fill="#3e444c"/><rect x="528" y="986" width="1" height="4" fill="#3e444c"/><rect x="537" y="986" width="1" height="13" fill="#3e444c"/><rect x="546" y="986" width="1" height="4" fill="#3e444c"/><rect x="555" y="986" width="1" height="4" fill="#3e444c"/><rect x="564" y="986" width="1" height="4" fill="#3e444c"/><rect x="573" y="986" width="1" height="4" fill="#3e444c"/><rect x="582" y="986" width="1" height="8" fill="#3e444c"/><rect x="591" y="986" width="1" height="4" fill="#3e444c"/><rect x="599" y="986" width="1" height="4" fill="#3e444c"/><rect x="608" y="986" width="1" height="4" fill="#3e444c"/><rect x="617" y="986" width="1" height="4" fill="#3e444c"/><rect x="626" y="986" width="1" height="13" fill="#3e444c"/><rect x="635" y="986" width="1" height="4" fill="#3e444c"/><rect x="644" y="986" width="1" height="4" fill="#3e444c"/><rect x="653" y="986" width="1" height="4" fill="#3e444c"/><rect x="662" y="986" width="1" height="4" fill="#3e444c"/><rect x="671" y="986" width="1" height="8" fill="#3e444c"/><rect x="680" y="986" width="1" height="4" fill="#3e444c"/><rect x="689" y="986" width="1" height="4" fill="#3e444c"/><rect x="698" y="986" width="1" height="4" fill="#3e444c"/><rect x="707" y="986" width="1" height="4" fill="#3e444c"/><rect x="716" y="986" width="1" height="13" fill="#3e444c"/><rect x="725" y="986" width="1" height="4" fill="#3e444c"/><rect x="734" y="986" width="1" height="4" fill="#3e444c"/><rect x="743" y="986" width="1" height="4" fill="#3e444c"/><rect x="752" y="986" width="1" height="4" fill="#3e444c"/><rect x="761" y="986" width="1" height="8" fill="#3e444c"/><rect x="770" y="986" width="1" height="4" fill="#3e444c"/><rect x="778" y="986" width="1" height="4" fill="#3e444c"/><rect x="787" y="986" width="1" height="4" fill="#3e444c"/><rect x="796" y="986" width="1" height="4" fill="#3e444c"/><rect x="805" y="986" width="1" height="13" fill="#3e444c"/><rect x="814" y="986" width="1" height="4" fill="#3e444c"/><rect x="823" y="986" width="1" height="4" fill="#3e444c"/><rect x="832" y="986" width="1" height="4" fill="#3e444c"/><rect x="841" y="986" width="1" height="4" fill="#3e444c"/><rect x="850" y="986" width="1" height="8" fill="#3e444c"/><rect x="859" y="986" width="1" height="4" fill="#3e444c"/><rect x="868" y="986" width="1" height="4" fill="#3e444c"/><rect x="877" y="986" width="1" height="4" fill="#3e444c"/><rect x="886" y="986" width="1" height="4" fill="#3e444c"/><rect x="895" y="986" width="1" height="13" fill="#3e444c"/><rect x="904" y="986" width="1" height="4" fill="#3e444c"/><rect x="913" y="986" width="1" height="4" fill="#3e444c"/><rect x="922" y="986" width="1" height="4" fill="#3e444c"/><rect x="931" y="986" width="1" height="4" fill="#3e444c"/><rect x="940" y="986" width="1" height="8" fill="#3e444c"/><rect x="949" y="986" width="1" height="4" fill="#3e444c"/><rect x="957" y="986" width="1" height="4" fill="#3e444c"/><rect x="966" y="986" width="1" height="4" fill="#3e444c"/><rect x="975" y="986" width="1" height="4" fill="#3e444c"/><rect x="984" y="986" width="1" height="13" fill="#3e444c"/><rect x="993" y="986" width="1" height="4" fill="#3e444c"/><rect x="1002" y="986" width="1" height="4" fill="#3e444c"/><rect x="1011" y="986" width="1" height="4" fill="#3e444c"/><rect x="1020" y="986" width="1" height="4" fill="#3e444c"/><rect x="1029" y="986" width="1" height="8" fill="#3e444c"/><rect x="1038" y="986" width="1" height="4" fill="#3e444c"/><rect x="1047" y="986" width="1" height="4" fill="#3e444c"/><rect x="1056" y="986" width="1" height="4" fill="#3e444c"/><rect x="1065" y="986" width="1" height="4" fill="#3e444c"/><rect x="1074" y="986" width="1" height="13" fill="#3e444c"/><rect x="1083" y="986" width="1" height="4" fill="#3e444c"/><rect x="1092" y="986" width="1" height="4" fill="#3e444c"/><rect x="1101" y="986" width="1" height="4" fill="#3e444c"/><rect x="1110" y="986" width="1" height="4" fill="#3e444c"/><rect x="1119" y="986" width="1" height="8" fill="#3e444c"/><rect x="1128" y="986" width="1" height="4" fill="#3e444c"/><rect x="1136" y="986" width="1" height="4" fill="#3e444c"/><rect x="1145" y="986" width="1" height="4" fill="#3e444c"/><rect x="1154" y="986" width="1" height="4" fill="#3e444c"/><rect x="1163" y="986" width="1" height="13" fill="#3e444c"/><rect x="1172" y="986" width="1" height="4" fill="#3e444c"/><rect x="1181" y="986" width="1" height="4" fill="#3e444c"/><rect x="1190" y="986" width="1" height="4" fill="#3e444c"/><rect x="1199" y="986" width="1" height="4" fill="#3e444c"/><rect x="1208" y="986" width="1" height="8" fill="#3e444c"/><rect x="1217" y="986" width="1" height="4" fill="#3e444c"/><rect x="1226" y="986" width="1" height="4" fill="#3e444c"/><rect x="1235" y="986" width="1" height="4" fill="#3e444c"/><rect x="1244" y="986" width="1" height="4" fill="#3e444c"/><rect x="1253" y="986" width="1" height="13" fill="#3e444c"/><rect x="1262" y="986" width="1" height="4" fill="#3e444c"/><rect x="1271" y="986" width="1" height="4" fill="#3e444c"/><rect x="1280" y="986" width="1" height="4" fill="#3e444c"/><rect x="1289" y="986" width="1" height="4" fill="#3e444c"/><rect x="1298" y="986" width="1" height="8" fill="#3e444c"/><rect x="1307" y="986" width="1" height="4" fill="#3e444c"/><rect x="1315" y="986" width="1" height="4" fill="#3e444c"/><rect x="1324" y="986" width="1" height="4" fill="#3e444c"/><rect x="1333" y="986" width="1" height="4" fill="#3e444c"/><rect x="1342" y="986" width="1" height="13" fill="#3e444c"/><rect x="1351" y="986" width="1" height="4" fill="#3e444c"/><rect x="1360" y="986" width="1" height="4" fill="#3e444c"/><rect x="1369" y="986" width="1" height="4" fill="#3e444c"/><rect x="1378" y="986" width="1" height="4" fill="#3e444c"/><rect x="1387" y="986" width="1" height="8" fill="#3e444c"/><rect x="1396" y="986" width="1" height="4" fill="#3e444c"/><rect x="1405" y="986" width="1" height="4" fill="#3e444c"/><rect x="1414" y="986" width="1" height="4" fill="#3e444c"/><rect x="1423" y="986" width="1" height="4" fill="#3e444c"/><rect x="1432" y="986" width="1" height="13" fill="#3e444c"/><rect x="1441" y="986" width="1" height="4" fill="#3e444c"/><rect x="1450" y="986" width="1" height="4" fill="#3e444c"/><rect x="1459" y="986" width="1" height="4" fill="#3e444c"/><rect x="1468" y="986" width="1" height="4" fill="#3e444c"/><rect x="1477" y="986" width="1" height="8" fill="#3e444c"/></svg>
<div class="t" style="top:1002.29px;font-size:13.6px;line-height:18px;color:#111;left:-146px;width:300px;text-align:center;transform:scaleX(0.82);">0</div>
<div class="t" style="top:1002.29px;font-size:13.6px;line-height:18px;color:#111;left:-61.0px;width:300px;text-align:center;transform:scaleX(0.82);">1</div>
<div class="t" style="top:1002.29px;font-size:13.6px;line-height:18px;color:#111;left:28.5px;width:300px;text-align:center;transform:scaleX(0.82);">2</div>
<div class="t" style="top:1002.29px;font-size:13.6px;line-height:18px;color:#111;left:118.0px;width:300px;text-align:center;transform:scaleX(0.82);">3</div>
<div class="t" style="top:1002.29px;font-size:13.6px;line-height:18px;color:#111;left:207.5px;width:300px;text-align:center;transform:scaleX(0.82);">4</div>
<div class="t" style="top:1002.29px;font-size:13.6px;line-height:18px;color:#111;left:297.0px;width:300px;text-align:center;transform:scaleX(0.82);">5</div>
<div class="t" style="top:1002.29px;font-size:13.6px;line-height:18px;color:#111;left:386.5px;width:300px;text-align:center;transform:scaleX(0.82);">6</div>
<div class="t" style="top:1002.29px;font-size:13.6px;line-height:18px;color:#111;left:476.0px;width:300px;text-align:center;transform:scaleX(0.82);">7</div>
<div class="t" style="top:1002.29px;font-size:13.6px;line-height:18px;color:#111;left:565.5px;width:300px;text-align:center;transform:scaleX(0.82);">8</div>
<div class="t" style="top:1002.29px;font-size:13.6px;line-height:18px;color:#111;left:655.0px;width:300px;text-align:center;transform:scaleX(0.82);">9</div>
<div class="t" style="top:1002.29px;font-size:13.6px;line-height:18px;color:#111;left:744.5px;width:300px;text-align:center;transform:scaleX(0.82);">10</div>
<div class="t" style="top:1002.29px;font-size:13.6px;line-height:18px;color:#111;left:834.0px;width:300px;text-align:center;transform:scaleX(0.82);">11</div>
<div class="t" style="top:1002.29px;font-size:13.6px;line-height:18px;color:#111;left:923.5px;width:300px;text-align:center;transform:scaleX(0.82);">12</div>
<div class="t" style="top:1002.29px;font-size:13.6px;line-height:18px;color:#111;left:1013.0px;width:300px;text-align:center;transform:scaleX(0.82);">13</div>
<div class="t" style="top:1002.29px;font-size:13.6px;line-height:18px;color:#111;left:1102.5px;width:300px;text-align:center;transform:scaleX(0.82);">14</div>
<div class="t" style="top:1002.29px;font-size:13.6px;line-height:18px;color:#111;left:1192.0px;width:300px;text-align:center;transform:scaleX(0.82);">15</div>
<div class="t" style="top:1002.29px;font-size:13.6px;line-height:18px;color:#111;left:1281.5px;width:300px;text-align:center;transform:scaleX(0.82);">16</div>
<div class="t" style="top:996.00px;font-size:13px;line-height:17px;color:#111;left:1359px;width:300px;text-align:center;transform:scaleX(0.9);">cm</div>
<svg class="r" style="left:0px;top:0px" width="1528" height="1023" viewBox="0 0 1528 1023"><g><path d="M533 448.6 L549.7 448.9 L549.7 448.9 C554.8 450.1 570.6 453.2 580.3 456.0 C590.0 458.8 600.4 463.2 607.7 465.8 C615.0 468.4 621.2 470.6 623.9 471.5 L622.5 478.8 L598.9 479.6 L598.9 472.3 L598.9 472.3 C595.8 471.4 588.5 468.4 580.3 466.6 C572.1 464.8 554.8 462.4 549.7 461.5 L533.5 462.5 Q530 461.5 530.3 455.5 Q530.8 448.6 533 448.6 Z" fill="#a8a6a5" stroke="#262c33" stroke-width="1.7" stroke-linejoin="round"/><path d="M550 449L550.5 461.5" stroke="#343a42" stroke-width="0.9"/><circle cx="541" cy="455.3" r="2.2" fill="#fff" stroke="#343a42" stroke-width="1.2"/><path d="M481.3 555.0 C481.9 556.9 482.2 562.2 484.6 566.5 C487.0 570.8 490.7 576.2 495.8 580.5 C500.9 584.8 507.6 589.7 515.0 592.3 C522.4 594.9 533.2 595.4 540.0 596.2 C546.8 597.0 549.2 597.6 556.0 596.9 C562.8 596.2 572.6 594.3 580.8 591.8 C589.0 589.3 597.4 585.5 605.0 582.0 C612.6 578.5 622.9 572.4 626.5 570.5" fill="none" stroke="#3a4048" stroke-width="2.6"/><circle cx="485.9" cy="573.8" r="2.9" fill="#5a5f66" stroke="#343a42" stroke-width="1.1"/><circle cx="496" cy="586" r="2.9" fill="#5a5f66" stroke="#343a42" stroke-width="1.1"/><circle cx="509.5" cy="594" r="2.9" fill="#5a5f66" stroke="#343a42" stroke-width="1.1"/><circle cx="525.2" cy="598.5" r="2.9" fill="#5a5f66" stroke="#343a42" stroke-width="1.1"/><circle cx="543.2" cy="599.7" r="2.9" fill="#5a5f66" stroke="#343a42" stroke-width="1.1"/><circle cx="554.5" cy="599.7" r="2.9" fill="#5a5f66" stroke="#343a42" stroke-width="1.1"/><circle cx="568.2" cy="597.3" r="2.9" fill="#5a5f66" stroke="#343a42" stroke-width="1.1"/><circle cx="582" cy="592.4" r="2.9" fill="#9a9da2" stroke="#343a42" stroke-width="1.1"/><circle cx="594.8" cy="587.6" r="2.9" fill="#9a9da2" stroke="#343a42" stroke-width="1.1"/><circle cx="605.3" cy="582.7" r="2.9" fill="#9a9da2" stroke="#343a42" stroke-width="1.1"/><circle cx="615.8" cy="577.9" r="2.9" fill="#9a9da2" stroke="#343a42" stroke-width="1.1"/><path d="M551 487.2 L551.0 487.2 C546.3 487.6 531.4 487.4 523.0 489.5 C514.6 491.6 506.9 494.7 500.5 499.6 C494.1 504.5 488.1 512.1 484.7 518.7 C481.3 525.3 480.4 531.9 480.2 539.0 C480.0 546.1 481.2 554.9 483.6 561.4 C486.1 567.9 489.7 573.4 494.9 578.3 C500.1 583.2 507.5 587.9 515.0 590.6 C522.5 593.3 533.0 593.7 539.8 594.5 C546.6 595.3 549.2 596.0 556.0 595.2 C562.8 594.5 572.2 592.5 580.3 590.0 C588.4 587.5 596.8 583.8 604.5 580.3 C612.2 576.8 622.7 570.9 626.3 569.0 L624.7 563.4 L600.5 563.4 L600.5 569.0 C598.5 570.3 594.4 574.8 588.4 577.0 C582.4 579.2 571.4 580.9 564.2 582.0 C557.0 583.1 551.9 584.0 545.4 583.9 C538.9 583.8 531.4 583.5 525.2 581.6 C519.0 579.7 513.0 576.5 508.3 572.6 C503.6 568.7 499.7 563.2 497.1 558.0 C494.5 552.8 493.0 546.8 492.6 541.2 C492.2 535.6 492.7 529.4 494.9 524.3 C497.1 519.2 501.3 514.2 506.0 510.8 C510.7 507.4 520.2 505.2 523.0 504.1 L551 501.9 Q553.8 494.5 551 487.2 Z" fill="#a8a6a5" stroke="#262c33" stroke-width="1.7" stroke-linejoin="round"/><circle cx="541.5" cy="493.8" r="2.2" fill="#fff" stroke="#343a42" stroke-width="1.2"/><path d="M602.9 509.4 C604.2 512.9 609.2 523.6 611.0 530.3 C612.8 537.0 613.4 544.2 613.4 549.7 C613.4 555.2 611.4 560.8 611.0 563.0" fill="none" stroke="#343a42" stroke-width="7.0" stroke-linecap="round" stroke-linejoin="round"/><path d="M602.9 509.4 C604.2 512.9 609.2 523.6 611.0 530.3 C612.8 537.0 613.4 544.2 613.4 549.7 C613.4 555.2 611.4 560.8 611.0 563.0" fill="none" stroke="#a8a6a5" stroke-width="4.8" stroke-linecap="round" stroke-linejoin="round"/><path d="M519 509 L519.0 509.0 C520.0 509.0 523.4 507.4 525.2 509.0 C527.0 510.6 528.8 514.3 529.7 518.7 C530.6 523.1 530.0 530.0 530.8 535.6 C531.5 541.2 532.5 547.7 534.2 552.4 C535.9 557.1 538.2 560.7 541.0 563.7 C543.8 566.7 546.8 568.8 551.0 570.5 C555.2 572.2 561.1 573.3 566.0 574.0 C570.9 574.7 575.0 574.9 580.3 574.5 C585.6 574.1 595.0 572.0 598.0 571.5 L598.0 575.5 C595.0 576.0 587.3 577.9 580.3 578.2 C573.3 578.5 562.7 578.9 556.0 577.5 C549.3 576.1 544.6 573.6 540.0 570.0 C535.4 566.4 531.3 561.7 528.6 556.0 C525.9 550.3 525.1 542.6 524.0 535.6 C522.9 528.6 522.6 518.4 521.8 514.0 C521.0 509.6 519.5 509.8 519.0 509.0 Z" fill="#a8a6a5" stroke="#343a42" stroke-width="1.15" stroke-linejoin="round"/><path d="M521.0 510.0 C519.7 509.8 515.0 508.0 513.0 508.5 C511.0 509.0 509.3 511.3 509.0 513.0 C508.7 514.7 509.9 517.8 511.0 518.5 C512.1 519.2 514.8 517.7 515.5 517.5" fill="none" stroke="#343a42" stroke-width="5.7" stroke-linecap="round" stroke-linejoin="round"/><path d="M521.0 510.0 C519.7 509.8 515.0 508.0 513.0 508.5 C511.0 509.0 509.3 511.3 509.0 513.0 C508.7 514.7 509.9 517.8 511.0 518.5 C512.1 519.2 514.8 517.7 515.5 517.5" fill="none" stroke="#a8a6a5" stroke-width="3.6" stroke-linecap="round" stroke-linejoin="round"/><path d="M524.0 534.0 C523.2 533.2 521.0 530.0 519.0 529.0 C517.0 528.0 514.5 527.3 511.7 527.7 C508.9 528.1 504.4 529.2 502.0 531.5 C499.6 533.8 497.8 537.7 497.5 541.2 C497.2 544.7 498.7 549.3 500.5 552.4 C502.3 555.5 505.2 558.9 508.3 560.0 C511.4 561.1 515.9 559.7 519.0 559.0 C522.1 558.3 525.7 556.5 527.0 556.0" fill="none" stroke="#343a42" stroke-width="5.7" stroke-linecap="round" stroke-linejoin="round"/><path d="M524.0 534.0 C523.2 533.2 521.0 530.0 519.0 529.0 C517.0 528.0 514.5 527.3 511.7 527.7 C508.9 528.1 504.4 529.2 502.0 531.5 C499.6 533.8 497.8 537.7 497.5 541.2 C497.2 544.7 498.7 549.3 500.5 552.4 C502.3 555.5 505.2 558.9 508.3 560.0 C511.4 561.1 515.9 559.7 519.0 559.0 C522.1 558.3 525.7 556.5 527.0 556.0" fill="none" stroke="#a8a6a5" stroke-width="3.6" stroke-linecap="round" stroke-linejoin="round"/><path d="M524.0 538.0 C523.2 538.7 520.6 540.2 519.5 542.0 C518.4 543.8 518.7 547.3 517.5 548.5 C516.3 549.7 513.6 549.6 512.5 549.0 C511.4 548.4 511.2 545.7 511.0 545.0" fill="none" stroke="#343a42" stroke-width="5.52" stroke-linecap="round" stroke-linejoin="round"/><path d="M524.0 538.0 C523.2 538.7 520.6 540.2 519.5 542.0 C518.4 543.8 518.7 547.3 517.5 548.5 C516.3 549.7 513.6 549.6 512.5 549.0 C511.4 548.4 511.2 545.7 511.0 545.0" fill="none" stroke="#a8a6a5" stroke-width="3.42" stroke-linecap="round" stroke-linejoin="round"/><path d="M511.0 527.0 C510.5 526.2 509.2 523.5 508.0 522.5 C506.8 521.5 504.7 521.2 504.0 521.0" fill="none" stroke="#343a42" stroke-width="5.1" stroke-linecap="round" stroke-linejoin="round"/><path d="M511.0 527.0 C510.5 526.2 509.2 523.5 508.0 522.5 C506.8 521.5 504.7 521.2 504.0 521.0" fill="none" stroke="#a8a6a5" stroke-width="3.0" stroke-linecap="round" stroke-linejoin="round"/><path d="M500.0 537.0 C499.4 536.5 497.1 534.5 496.5 534.0" fill="none" stroke="#343a42" stroke-width="5.1" stroke-linecap="round" stroke-linejoin="round"/><path d="M500.0 537.0 C499.4 536.5 497.1 534.5 496.5 534.0" fill="none" stroke="#a8a6a5" stroke-width="3.0" stroke-linecap="round" stroke-linejoin="round"/><path d="M527.0 558.0 C525.4 558.2 520.2 558.3 517.3 559.5 C514.4 560.7 510.8 562.9 509.5 565.0 C508.2 567.1 508.8 570.6 509.8 572.0 C510.8 573.4 514.5 573.2 515.5 573.5" fill="none" stroke="#343a42" stroke-width="5.7" stroke-linecap="round" stroke-linejoin="round"/><path d="M527.0 558.0 C525.4 558.2 520.2 558.3 517.3 559.5 C514.4 560.7 510.8 562.9 509.5 565.0 C508.2 567.1 508.8 570.6 509.8 572.0 C510.8 573.4 514.5 573.2 515.5 573.5" fill="none" stroke="#a8a6a5" stroke-width="3.6" stroke-linecap="round" stroke-linejoin="round"/><path d="M504.0 550.0 C503.2 549.8 499.8 548.8 499.0 548.5" fill="none" stroke="#343a42" stroke-width="5.1" stroke-linecap="round" stroke-linejoin="round"/><path d="M504.0 550.0 C503.2 549.8 499.8 548.8 499.0 548.5" fill="none" stroke="#a8a6a5" stroke-width="3.0" stroke-linecap="round" stroke-linejoin="round"/><path d="M525.0 571.0 C526.3 571.8 530.3 574.8 533.0 576.0 C535.7 577.2 539.7 577.7 541.0 578.0" fill="none" stroke="#343a42" stroke-width="5.300000000000001" stroke-linecap="round" stroke-linejoin="round"/><path d="M525.0 571.0 C526.3 571.8 530.3 574.8 533.0 576.0 C535.7 577.2 539.7 577.7 541.0 578.0" fill="none" stroke="#a8a6a5" stroke-width="3.2" stroke-linecap="round" stroke-linejoin="round"/><circle cx="545" cy="577" r="2.6" fill="#a8a6a5" stroke="#343a42" stroke-width="1.05"/><path d="M512.0 563.0 C510.8 562.7 506.8 561.0 505.0 561.0 C503.2 561.0 501.7 562.7 501.0 563.0" fill="none" stroke="#343a42" stroke-width="5.1" stroke-linecap="round" stroke-linejoin="round"/><path d="M512.0 563.0 C510.8 562.7 506.8 561.0 505.0 561.0 C503.2 561.0 501.7 562.7 501.0 563.0" fill="none" stroke="#a8a6a5" stroke-width="3.0" stroke-linecap="round" stroke-linejoin="round"/></g><g transform="translate(1276,-1) scale(-1,1)"><path d="M533 448.6 L549.7 448.9 L549.7 448.9 C554.8 450.1 570.6 453.2 580.3 456.0 C590.0 458.8 600.4 463.2 607.7 465.8 C615.0 468.4 621.2 470.6 623.9 471.5 L622.5 478.8 L598.9 479.6 L598.9 472.3 L598.9 472.3 C595.8 471.4 588.5 468.4 580.3 466.6 C572.1 464.8 554.8 462.4 549.7 461.5 L533.5 462.5 Q530 461.5 530.3 455.5 Q530.8 448.6 533 448.6 Z" fill="#a8a6a5" stroke="#262c33" stroke-width="1.7" stroke-linejoin="round"/><path d="M550 449L550.5 461.5" stroke="#343a42" stroke-width="0.9"/><circle cx="541" cy="455.3" r="2.2" fill="#fff" stroke="#343a42" stroke-width="1.2"/></g><g transform="translate(1278,-4) scale(-1,1)"><path d="M481.3 555.0 C481.9 556.9 482.2 562.2 484.6 566.5 C487.0 570.8 490.7 576.2 495.8 580.5 C500.9 584.8 507.6 589.7 515.0 592.3 C522.4 594.9 533.2 595.4 540.0 596.2 C546.8 597.0 549.2 597.6 556.0 596.9 C562.8 596.2 572.6 594.3 580.8 591.8 C589.0 589.3 597.4 585.5 605.0 582.0 C612.6 578.5 622.9 572.4 626.5 570.5" fill="none" stroke="#3a4048" stroke-width="2.6"/><circle cx="485.9" cy="573.8" r="2.9" fill="#5a5f66" stroke="#343a42" stroke-width="1.1"/><circle cx="496" cy="586" r="2.9" fill="#5a5f66" stroke="#343a42" stroke-width="1.1"/><circle cx="509.5" cy="594" r="2.9" fill="#5a5f66" stroke="#343a42" stroke-width="1.1"/><circle cx="525.2" cy="598.5" r="2.9" fill="#5a5f66" stroke="#343a42" stroke-width="1.1"/><circle cx="543.2" cy="599.7" r="2.9" fill="#5a5f66" stroke="#343a42" stroke-width="1.1"/><circle cx="554.5" cy="599.7" r="2.9" fill="#5a5f66" stroke="#343a42" stroke-width="1.1"/><circle cx="568.2" cy="597.3" r="2.9" fill="#5a5f66" stroke="#343a42" stroke-width="1.1"/><circle cx="582" cy="592.4" r="2.9" fill="#9a9da2" stroke="#343a42" stroke-width="1.1"/><circle cx="594.8" cy="587.6" r="2.9" fill="#9a9da2" stroke="#343a42" stroke-width="1.1"/><circle cx="605.3" cy="582.7" r="2.9" fill="#9a9da2" stroke="#343a42" stroke-width="1.1"/><circle cx="615.8" cy="577.9" r="2.9" fill="#9a9da2" stroke="#343a42" stroke-width="1.1"/><path d="M551 487.2 L551.0 487.2 C546.3 487.6 531.4 487.4 523.0 489.5 C514.6 491.6 506.9 494.7 500.5 499.6 C494.1 504.5 488.1 512.1 484.7 518.7 C481.3 525.3 480.4 531.9 480.2 539.0 C480.0 546.1 481.2 554.9 483.6 561.4 C486.1 567.9 489.7 573.4 494.9 578.3 C500.1 583.2 507.5 587.9 515.0 590.6 C522.5 593.3 533.0 593.7 539.8 594.5 C546.6 595.3 549.2 596.0 556.0 595.2 C562.8 594.5 572.2 592.5 580.3 590.0 C588.4 587.5 596.8 583.8 604.5 580.3 C612.2 576.8 622.7 570.9 626.3 569.0 L624.7 563.4 L600.5 563.4 L600.5 569.0 C598.5 570.3 594.4 574.8 588.4 577.0 C582.4 579.2 571.4 580.9 564.2 582.0 C557.0 583.1 551.9 584.0 545.4 583.9 C538.9 583.8 531.4 583.5 525.2 581.6 C519.0 579.7 513.0 576.5 508.3 572.6 C503.6 568.7 499.7 563.2 497.1 558.0 C494.5 552.8 493.0 546.8 492.6 541.2 C492.2 535.6 492.7 529.4 494.9 524.3 C497.1 519.2 501.3 514.2 506.0 510.8 C510.7 507.4 520.2 505.2 523.0 504.1 L551 501.9 Q553.8 494.5 551 487.2 Z" fill="#a8a6a5" stroke="#262c33" stroke-width="1.7" stroke-linejoin="round"/><circle cx="541.5" cy="493.8" r="2.2" fill="#fff" stroke="#343a42" stroke-width="1.2"/><path d="M602.9 509.4 C604.2 512.9 609.2 523.6 611.0 530.3 C612.8 537.0 613.4 544.2 613.4 549.7 C613.4 555.2 611.4 560.8 611.0 563.0" fill="none" stroke="#343a42" stroke-width="7.0" stroke-linecap="round" stroke-linejoin="round"/><path d="M602.9 509.4 C604.2 512.9 609.2 523.6 611.0 530.3 C612.8 537.0 613.4 544.2 613.4 549.7 C613.4 555.2 611.4 560.8 611.0 563.0" fill="none" stroke="#a8a6a5" stroke-width="4.8" stroke-linecap="round" stroke-linejoin="round"/><path d="M519 509 L519.0 509.0 C520.0 509.0 523.4 507.4 525.2 509.0 C527.0 510.6 528.8 514.3 529.7 518.7 C530.6 523.1 530.0 530.0 530.8 535.6 C531.5 541.2 532.5 547.7 534.2 552.4 C535.9 557.1 538.2 560.7 541.0 563.7 C543.8 566.7 546.8 568.8 551.0 570.5 C555.2 572.2 561.1 573.3 566.0 574.0 C570.9 574.7 575.0 574.9 580.3 574.5 C585.6 574.1 595.0 572.0 598.0 571.5 L598.0 575.5 C595.0 576.0 587.3 577.9 580.3 578.2 C573.3 578.5 562.7 578.9 556.0 577.5 C549.3 576.1 544.6 573.6 540.0 570.0 C535.4 566.4 531.3 561.7 528.6 556.0 C525.9 550.3 525.1 542.6 524.0 535.6 C522.9 528.6 522.6 518.4 521.8 514.0 C521.0 509.6 519.5 509.8 519.0 509.0 Z" fill="#a8a6a5" stroke="#343a42" stroke-width="1.15" stroke-linejoin="round"/><path d="M521.0 510.0 C519.7 509.8 515.0 508.0 513.0 508.5 C511.0 509.0 509.3 511.3 509.0 513.0 C508.7 514.7 509.9 517.8 511.0 518.5 C512.1 519.2 514.8 517.7 515.5 517.5" fill="none" stroke="#343a42" stroke-width="5.7" stroke-linecap="round" stroke-linejoin="round"/><path d="M521.0 510.0 C519.7 509.8 515.0 508.0 513.0 508.5 C511.0 509.0 509.3 511.3 509.0 513.0 C508.7 514.7 509.9 517.8 511.0 518.5 C512.1 519.2 514.8 517.7 515.5 517.5" fill="none" stroke="#a8a6a5" stroke-width="3.6" stroke-linecap="round" stroke-linejoin="round"/><path d="M524.0 534.0 C523.2 533.2 521.0 530.0 519.0 529.0 C517.0 528.0 514.5 527.3 511.7 527.7 C508.9 528.1 504.4 529.2 502.0 531.5 C499.6 533.8 497.8 537.7 497.5 541.2 C497.2 544.7 498.7 549.3 500.5 552.4 C502.3 555.5 505.2 558.9 508.3 560.0 C511.4 561.1 515.9 559.7 519.0 559.0 C522.1 558.3 525.7 556.5 527.0 556.0" fill="none" stroke="#343a42" stroke-width="5.7" stroke-linecap="round" stroke-linejoin="round"/><path d="M524.0 534.0 C523.2 533.2 521.0 530.0 519.0 529.0 C517.0 528.0 514.5 527.3 511.7 527.7 C508.9 528.1 504.4 529.2 502.0 531.5 C499.6 533.8 497.8 537.7 497.5 541.2 C497.2 544.7 498.7 549.3 500.5 552.4 C502.3 555.5 505.2 558.9 508.3 560.0 C511.4 561.1 515.9 559.7 519.0 559.0 C522.1 558.3 525.7 556.5 527.0 556.0" fill="none" stroke="#a8a6a5" stroke-width="3.6" stroke-linecap="round" stroke-linejoin="round"/><path d="M524.0 538.0 C523.2 538.7 520.6 540.2 519.5 542.0 C518.4 543.8 518.7 547.3 517.5 548.5 C516.3 549.7 513.6 549.6 512.5 549.0 C511.4 548.4 511.2 545.7 511.0 545.0" fill="none" stroke="#343a42" stroke-width="5.52" stroke-linecap="round" stroke-linejoin="round"/><path d="M524.0 538.0 C523.2 538.7 520.6 540.2 519.5 542.0 C518.4 543.8 518.7 547.3 517.5 548.5 C516.3 549.7 513.6 549.6 512.5 549.0 C511.4 548.4 511.2 545.7 511.0 545.0" fill="none" stroke="#a8a6a5" stroke-width="3.42" stroke-linecap="round" stroke-linejoin="round"/><path d="M511.0 527.0 C510.5 526.2 509.2 523.5 508.0 522.5 C506.8 521.5 504.7 521.2 504.0 521.0" fill="none" stroke="#343a42" stroke-width="5.1" stroke-linecap="round" stroke-linejoin="round"/><path d="M511.0 527.0 C510.5 526.2 509.2 523.5 508.0 522.5 C506.8 521.5 504.7 521.2 504.0 521.0" fill="none" stroke="#a8a6a5" stroke-width="3.0" stroke-linecap="round" stroke-linejoin="round"/><path d="M500.0 537.0 C499.4 536.5 497.1 534.5 496.5 534.0" fill="none" stroke="#343a42" stroke-width="5.1" stroke-linecap="round" stroke-linejoin="round"/><path d="M500.0 537.0 C499.4 536.5 497.1 534.5 496.5 534.0" fill="none" stroke="#a8a6a5" stroke-width="3.0" stroke-linecap="round" stroke-linejoin="round"/><path d="M527.0 558.0 C525.4 558.2 520.2 558.3 517.3 559.5 C514.4 560.7 510.8 562.9 509.5 565.0 C508.2 567.1 508.8 570.6 509.8 572.0 C510.8 573.4 514.5 573.2 515.5 573.5" fill="none" stroke="#343a42" stroke-width="5.7" stroke-linecap="round" stroke-linejoin="round"/><path d="M527.0 558.0 C525.4 558.2 520.2 558.3 517.3 559.5 C514.4 560.7 510.8 562.9 509.5 565.0 C508.2 567.1 508.8 570.6 509.8 572.0 C510.8 573.4 514.5 573.2 515.5 573.5" fill="none" stroke="#a8a6a5" stroke-width="3.6" stroke-linecap="round" stroke-linejoin="round"/><path d="M504.0 550.0 C503.2 549.8 499.8 548.8 499.0 548.5" fill="none" stroke="#343a42" stroke-width="5.1" stroke-linecap="round" stroke-linejoin="round"/><path d="M504.0 550.0 C503.2 549.8 499.8 548.8 499.0 548.5" fill="none" stroke="#a8a6a5" stroke-width="3.0" stroke-linecap="round" stroke-linejoin="round"/><path d="M525.0 571.0 C526.3 571.8 530.3 574.8 533.0 576.0 C535.7 577.2 539.7 577.7 541.0 578.0" fill="none" stroke="#343a42" stroke-width="5.300000000000001" stroke-linecap="round" stroke-linejoin="round"/><path d="M525.0 571.0 C526.3 571.8 530.3 574.8 533.0 576.0 C535.7 577.2 539.7 577.7 541.0 578.0" fill="none" stroke="#a8a6a5" stroke-width="3.2" stroke-linecap="round" stroke-linejoin="round"/><circle cx="545" cy="577" r="2.6" fill="#a8a6a5" stroke="#343a42" stroke-width="1.05"/><path d="M512.0 563.0 C510.8 562.7 506.8 561.0 505.0 561.0 C503.2 561.0 501.7 562.7 501.0 563.0" fill="none" stroke="#343a42" stroke-width="5.1" stroke-linecap="round" stroke-linejoin="round"/><path d="M512.0 563.0 C510.8 562.7 506.8 561.0 505.0 561.0 C503.2 561.0 501.7 562.7 501.0 563.0" fill="none" stroke="#a8a6a5" stroke-width="3.0" stroke-linecap="round" stroke-linejoin="round"/></g></svg>
</body></html>
